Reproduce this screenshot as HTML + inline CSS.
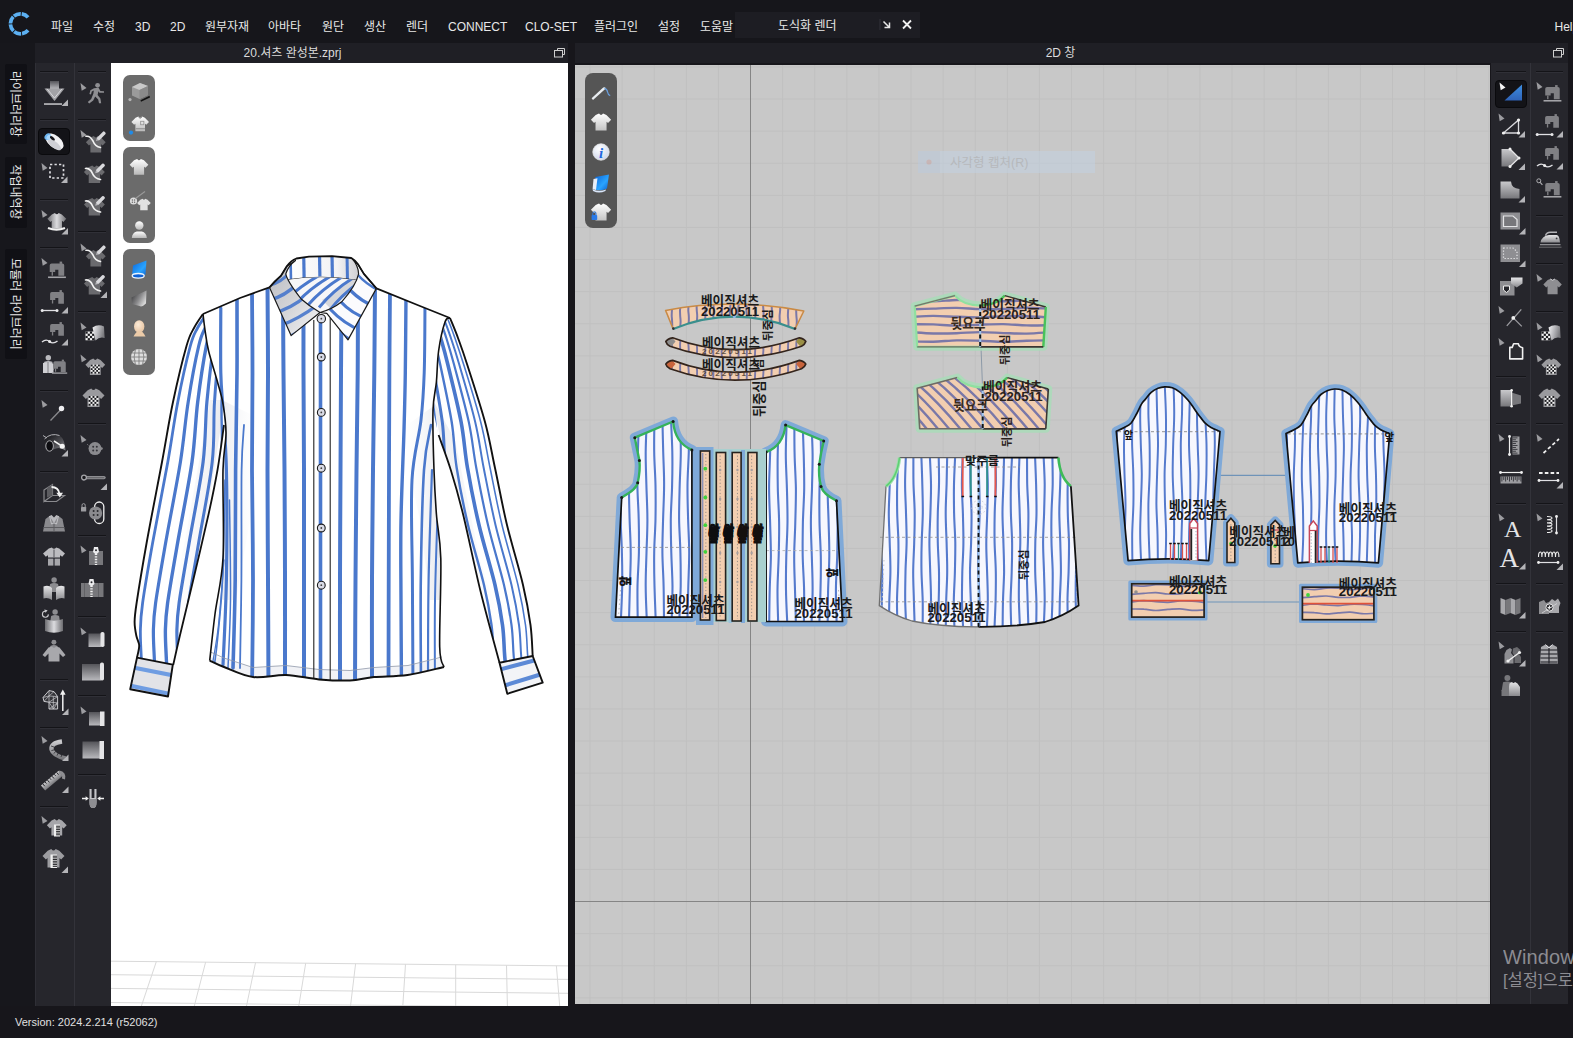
<!DOCTYPE html>
<html lang="ko">
<head>
<meta charset="utf-8">
<title>CLO - 20.셔츠 완성본.zprj</title>
<style>
*{box-sizing:border-box;margin:0;padding:0}
html,body{width:1573px;height:1038px;overflow:hidden;background:#17161b}
body{position:relative;font-family:"Liberation Sans","Noto Sans CJK KR",sans-serif;font-size:12px;color:#e6e6e6}
.abs{position:absolute}
#menubar{position:absolute;left:0;top:0;width:1573px;height:43px;background:#16161b}
#menubar .mi{position:absolute;top:18px;height:18px;line-height:18px;font-size:12px;color:#e8e8e8;white-space:nowrap}
#rtab{position:absolute;left:735px;top:12px;width:185px;height:26px;background:#1d1d23}
#lefttabs{position:absolute;left:0;top:43px;width:35px;height:963px;background:#17171c}
.vtab{position:absolute;left:5px;width:22px;background:#101015;border-radius:2px}
.vtab span{position:absolute;left:50%;top:50%;white-space:nowrap;font-size:12px;color:#e6e6e6;transform:translate(-50%,-50%) rotate(90deg)}
.title{position:absolute;top:43px;height:20px;background:#1f1f25;font-size:12px;color:#dcdcdc;text-align:center;line-height:21px}
.tb{position:absolute;background:#26262c}
.sep{position:absolute;height:1px;background:#141418;box-shadow:0 1px 0 #303037}
#v3d{position:absolute;left:111px;top:63px;width:457px;height:943px;background:#fff;overflow:hidden}
#v2d{position:absolute;left:575px;top:65px;width:915px;height:939px;background:#c8c8c8;overflow:hidden}
#status{position:absolute;left:0;top:1006px;width:1573px;height:32px;background:#17161b}
.pill{position:absolute;border-radius:7px}
.ic{position:absolute;width:32px;height:32px;overflow:visible}
.selbtn{position:absolute;background:#131317;border:1px solid #0a0a0d;border-radius:4px}
</style>
</head>
<body>

<div id="menubar">
  <svg class="abs" style="left:8px;top:10px" width="26" height="28" viewBox="0 0 26 28">
    <path d="M20.06 7.37 A10 10 0 1 0 20.06 20.23" fill="none" stroke="#5cb0f2" stroke-width="3.7" stroke-dasharray="7.35 0.95"/>
  </svg>
  <span class="mi" style="left:51px">파일</span>
  <span class="mi" style="left:93px">수정</span>
  <span class="mi" style="left:135px">3D</span>
  <span class="mi" style="left:170px">2D</span>
  <span class="mi" style="left:205px">원부자재</span>
  <span class="mi" style="left:268px">아바타</span>
  <span class="mi" style="left:322px">원단</span>
  <span class="mi" style="left:364px">생산</span>
  <span class="mi" style="left:406px">렌더</span>
  <span class="mi" style="left:448px">CONNECT</span>
  <span class="mi" style="left:525px">CLO-SET</span>
  <span class="mi" style="left:594px">플러그인</span>
  <span class="mi" style="left:658px">설정</span>
  <span class="mi" style="left:700px">도움말</span>
  <div id="rtab">
    <span class="mi" style="left:43px;top:5px">도식화 렌더</span>
    <svg class="abs" style="left:144px;top:6px" width="34" height="14" viewBox="0 0 34 14">
      <rect x="0.5" y="1" width="1" height="11" fill="#33333a"/>
      <path d="M4.5 3.5 L10.5 9.5 M10.5 4.5 V9.5 H5.5" stroke="#e8e8e8" stroke-width="1.5" fill="none"/>
      <path d="M24 2.5 L32 10.5 M32 2.5 L24 10.5" stroke="#f0f0f0" stroke-width="1.8" fill="none"/>
    </svg>
  </div>
  <span class="mi" style="left:1554.5px">Help</span>
</div>

<div id="lefttabs">
  <div class="vtab" style="top:21px;height:80px"><span>라이브러리창</span></div>
  <div class="vtab" style="top:113.5px;height:71px"><span>작업내역창</span></div>
  <div class="vtab" style="top:205.5px;height:110px"><span>모듈러 라이브러리</span></div>
</div>

<div class="title" style="left:35px;width:533px"><span style="position:relative;left:-9px">20.셔츠 완성본.zprj</span>
  <svg class="abs" style="left:519px;top:5px" width="11" height="10" viewBox="0 0 11 10"><path d="M3.5 2.5 V0.5 H10.5 V6.5 H8.5" fill="none" stroke="#cfcfcf"/><rect x="0.5" y="2.5" width="8" height="6.5" fill="none" stroke="#cfcfcf"/></svg>
</div>
<div class="title" style="left:573px;width:995px"><span style="position:relative;left:-10px">2D 창</span>
  <svg class="abs" style="left:980px;top:5px" width="11" height="10" viewBox="0 0 11 10"><path d="M3.5 2.5 V0.5 H10.5 V6.5 H8.5" fill="none" stroke="#cfcfcf"/><rect x="0.5" y="2.5" width="8" height="6.5" fill="none" stroke="#cfcfcf"/></svg>
</div>

<div class="tb" style="left:35px;top:63px;width:39px;height:943px;border-left:1px solid #2f2f36"></div>
<div class="tb" style="left:74px;top:63px;width:37px;height:943px;border-left:1px solid #33333a"></div>
<div class="tb" style="left:1491px;top:63px;width:39px;height:943px"></div>
<div class="tb" style="left:1530px;top:63px;width:38px;height:943px;border-left:1px solid #33333a"></div>
<div class="abs" style="left:568px;top:43px;width:7px;height:963px;background:#17161b"></div>
<div class="abs" style="left:575px;top:63px;width:916px;height:2px;background:#17161b"></div>
<div class="abs" style="left:575px;top:1004px;width:993px;height:2px;background:#17161b"></div>
<div id="status"><span class="abs" style="left:15px;top:10px;font-size:11px;color:#e0e0e0;white-space:nowrap">Version: 2024.2.214 (r52062)</span></div>

<div class="sep" style="left:40px;top:71px;width:28px"></div>
<div class="sep" style="left:40px;top:119px;width:28px"></div>
<div class="sep" style="left:40px;top:199px;width:28px"></div>
<div class="sep" style="left:40px;top:247px;width:28px"></div>
<div class="sep" style="left:40px;top:390px;width:28px"></div>
<div class="sep" style="left:40px;top:471px;width:28px"></div>
<div class="sep" style="left:40px;top:679px;width:28px"></div>
<div class="sep" style="left:40px;top:727px;width:28px"></div>
<div class="sep" style="left:40px;top:806px;width:28px"></div>
<div class="sep" style="left:78px;top:71px;width:28px"></div>
<div class="sep" style="left:78px;top:119px;width:28px"></div>
<div class="sep" style="left:78px;top:231px;width:28px"></div>
<div class="sep" style="left:78px;top:311px;width:28px"></div>
<div class="sep" style="left:78px;top:423px;width:28px"></div>
<div class="sep" style="left:78px;top:535px;width:28px"></div>
<div class="sep" style="left:78px;top:616px;width:28px"></div>
<div class="sep" style="left:78px;top:695px;width:28px"></div>
<div class="sep" style="left:78px;top:774px;width:28px"></div>
<div class="sep" style="left:1496px;top:71px;width:30px"></div>
<div class="sep" style="left:1496px;top:376px;width:30px"></div>
<div class="sep" style="left:1496px;top:423px;width:30px"></div>
<div class="sep" style="left:1496px;top:503px;width:30px"></div>
<div class="sep" style="left:1496px;top:583px;width:30px"></div>
<div class="sep" style="left:1496px;top:631px;width:30px"></div>
<div class="sep" style="left:1536px;top:71px;width:27px"></div>
<div class="sep" style="left:1536px;top:215px;width:27px"></div>
<div class="sep" style="left:1536px;top:263px;width:27px"></div>
<div class="sep" style="left:1536px;top:311px;width:27px"></div>
<div class="sep" style="left:1536px;top:423px;width:27px"></div>
<div class="sep" style="left:1536px;top:503px;width:27px"></div>
<div class="sep" style="left:1536px;top:583px;width:27px"></div>
<div class="sep" style="left:1536px;top:631px;width:27px"></div>
<svg width="0" height="0" style="position:absolute"><defs><linearGradient id="gA" x1="0" y1="0" x2="0" y2="1"><stop offset="0" stop-color="#c9c9cc"/><stop offset="1" stop-color="#77777b"/></linearGradient><linearGradient id="gB" x1="0" y1="0" x2="0" y2="1"><stop offset="0" stop-color="#55555a"/><stop offset="1" stop-color="#b9b9bd"/></linearGradient><linearGradient id="gC" x1="0" y1="0" x2="0" y2="1"><stop offset="0" stop-color="#e6e6e8"/><stop offset="1" stop-color="#8a8a8e"/></linearGradient><linearGradient id="gT" x1="0" y1="0" x2="1" y2="0.3"><stop offset="0" stop-color="#f4f4f6"/><stop offset="0.55" stop-color="#b4b4b8"/><stop offset="1" stop-color="#7a7a7e"/></linearGradient><linearGradient id="gH" x1="0" y1="0" x2="1" y2="0"><stop offset="0" stop-color="#6c6c70"/><stop offset="0.5" stop-color="#dcdcdf"/><stop offset="1" stop-color="#6c6c70"/></linearGradient></defs></svg>
<svg class="ic" style="left:38px;top:78px" viewBox="0 0 32 32"><rect x="12" y="3" width="9" height="8" fill="url(#gB)"/><polygon points="6.5,10.5 26.5,10.5 16.5,23" fill="#a2a2a6"/><path d="M9 10.8 L16.5 20 L24 10.8" stroke="#d8d8dc" stroke-width="1" fill="none"/><rect x="6" y="25.2" width="18" height="1.7" fill="#b6b6ba"/><polygon points="30,21.5 30,28 23.5,28" fill="#b4b4b8"/></svg>
<div class="selbtn" style="left:38px;top:128px;width:32px;height:27px"></div>
<svg class="ic" style="left:38px;top:126px" viewBox="0 0 32 32"><g transform="translate(16.5 15.5) rotate(38)"><ellipse cx="0" cy="0" rx="10.5" ry="6" fill="#f1f1f3"/><ellipse cx="2" cy="2.6" rx="8" ry="3.2" fill="#cfd0d6"/><ellipse cx="-8.2" cy="0.4" rx="3" ry="3.6" fill="#6db6f2"/><ellipse cx="-7" cy="0.2" rx="2" ry="2.8" fill="#a8d6fa"/><ellipse cx="-3.6" cy="-1.2" rx="3" ry="1.4" fill="#15151a"/></g></svg>
<svg class="ic" style="left:38px;top:158px" viewBox="0 0 32 32"><polygon points="3.5,5.1 4.7,12.7 9.5,10.1" fill="#9c9ca0"/><rect x="12" y="6.5" width="13.5" height="13.5" fill="none" stroke="#dedee2" stroke-width="1.7" stroke-dasharray="2.3 2.2"/><polygon points="29.5,18.5 29.5,25 23.0,25" fill="#b4b4b8"/></svg>
<svg class="ic" style="left:38px;top:207px" viewBox="0 0 32 32"><polygon points="3.5,3.1 4.7,10.7 9.5,8.1" fill="#9c9ca0"/><g transform="translate(8.5 5.5) scale(0.86)"><path d="M6.2 2.2 L9.8 0.6 Q12 3.6 14.2 0.6 L17.8 2.2 L23 7.4 L19.6 11 L18 9.6 L18 19 L6 19 L6 9.6 L4.4 11 L1 7.4 Z" fill="url(#gH)"/></g><path d="M10 21 Q18.5 24.5 27 21" stroke="#f2f2f2" stroke-width="2" fill="none"/><polygon points="30,21.0 30,27.5 23.5,27.5" fill="#b4b4b8"/></svg>
<svg class="ic" style="left:38px;top:254px" viewBox="0 0 32 32"><polygon points="3.5,4.1 4.7,11.7 9.5,9.1" fill="#9c9ca0"/><g transform="translate(9 8) scale(1.05)" fill="#808084"><path d="M2.6 3.2 Q2.6 1.4 4.4 1.4 H14.6 Q16.4 1.4 16.4 3.2 V13.2 H10.8 V7.4 H7.8 V9.6 H2.6 Z"/><rect x="12" y="-0.4" width="2.4" height="2.2" /><rect x="4.4" y="9.6" width="1.3" height="3.4"/><rect x="1" y="13.8" width="17" height="1.5" fill="#a4a4a8"/></g></svg>
<svg class="ic" style="left:38px;top:286px" viewBox="0 0 32 32"><g transform="translate(9.5 4.5) scale(1.0)" fill="#808084"><path d="M2.6 3.2 Q2.6 1.4 4.4 1.4 H14.6 Q16.4 1.4 16.4 3.2 V13.2 H10.8 V7.4 H7.8 V9.6 H2.6 Z"/><rect x="12" y="-0.4" width="2.4" height="2.2" /><rect x="4.4" y="9.6" width="1.3" height="3.4"/></g><path d="M4 24.5 H19" stroke="#e0e0e4" stroke-width="1.3"/><circle cx="4.2" cy="24.5" r="1.5" fill="#e8e8ea"/><circle cx="19" cy="24.5" r="1.5" fill="#e8e8ea"/><polygon points="30,21.0 30,27.5 23.5,27.5" fill="#b4b4b8"/></svg>
<svg class="ic" style="left:38px;top:318px" viewBox="0 0 32 32"><g transform="translate(9.5 4.5) scale(1.0)" fill="#808084"><path d="M2.6 3.2 Q2.6 1.4 4.4 1.4 H14.6 Q16.4 1.4 16.4 3.2 V13.2 H10.8 V7.4 H7.8 V9.6 H2.6 Z"/><rect x="12" y="-0.4" width="2.4" height="2.2" /><rect x="4.4" y="9.6" width="1.3" height="3.4"/></g><path d="M4 24 Q8 20.5 11.5 23.5 T19.5 23" stroke="#e0e0e4" stroke-width="1.4" fill="none"/><circle cx="11.6" cy="23.5" r="1.5" fill="#e8e8ea"/><polygon points="30,21.0 30,27.5 23.5,27.5" fill="#b4b4b8"/></svg>
<svg class="ic" style="left:38px;top:350px" viewBox="0 0 32 32"><g transform="translate(4 5) scale(1.05)" fill="#b9b9bd"><circle cx="6" cy="2.6" r="2.6"/><path d="M2.2 6.4 Q6 4.8 9.8 6.4 L11 14 H1 Z"/></g><path d="M5 13 L11 12 L15.5 14 V23 H5 Z" fill="#d0d0d4"/><path d="M10 12 V23" stroke="#6a6a6e" stroke-width="0.8"/><g transform="translate(13 10) scale(0.9)" fill="#808084"><path d="M2.6 3.2 Q2.6 1.4 4.4 1.4 H14.6 Q16.4 1.4 16.4 3.2 V13.2 H10.8 V7.4 H7.8 V9.6 H2.6 Z"/><rect x="12" y="-0.4" width="2.4" height="2.2" /><rect x="4.4" y="9.6" width="1.3" height="3.4"/><rect x="1" y="13.8" width="17" height="1.5" fill="#a4a4a8"/></g></svg>
<svg class="ic" style="left:38px;top:397px" viewBox="0 0 32 32"><polygon points="3.5,3.1 4.7,10.7 9.5,8.1" fill="#9c9ca0"/><path d="M12.5 23.5 L22.5 13" stroke="#8a8a8e" stroke-width="1.3"/><circle cx="23.5" cy="11.5" r="2.7" fill="#ededf0"/></svg>
<svg class="ic" style="left:38px;top:429px" viewBox="0 0 32 32"><defs><linearGradient id="gFp" x1="0" y1="0" x2="1" y2="1"><stop offset="0" stop-color="#0e0e12"/><stop offset="0.55" stop-color="#4a4a4f"/><stop offset="1" stop-color="#8e8e92"/></linearGradient></defs><path d="M6.5 10 Q13 3.5 21.5 6.5 Q27 10 27.5 21.5 Q21 17 15.5 20.5 Q10.5 24.5 7.6 20.4 Z" fill="url(#gFp)"/><path d="M6.5 10 Q13 3.5 21.5 6.5" stroke="#b0b0b4" stroke-width="1" fill="none"/><ellipse cx="11.6" cy="17" rx="3.8" ry="5.2" fill="#0c0c10" stroke="#a8a8ac" stroke-width="1"/><path d="M16 12 L23.6 16.8" stroke="#f4f4f4" stroke-width="1.5"/><circle cx="24.2" cy="17.2" r="2.5" fill="#f4f4f4"/><path d="M5 6.5 L9 9" stroke="#b0b0b4" stroke-width="1"/><polygon points="30,21.0 30,27.5 23.5,27.5" fill="#b4b4b8"/></svg>
<svg class="ic" style="left:38px;top:478px" viewBox="0 0 32 32"><path d="M6 12 L14.5 6.5 V17.5 L6 23.5 Z" fill="none" stroke="#8a8a8e" stroke-width="1.2"/><path d="M14.5 17.5 H26.5 L18.5 23.5 H6" fill="none" stroke="#8a8a8e" stroke-width="1.2"/><path d="M14.5 6.5 L9 10 V19.5 L14.5 17.5 Z" fill="#5c5c60"/><path d="M13.5 9 Q20.5 9 21.5 16" stroke="#f2f2f2" stroke-width="1.8" fill="none"/><polygon points="18.3,14.8 25,14.8 21.8,19.4" fill="#f2f2f2"/></svg>
<svg class="ic" style="left:38px;top:510px" viewBox="0 0 32 32"><path d="M11.5 6 L16 8.5 L20.5 6 L24.5 9 L27 21.5 H5 L7.5 9 Z" fill="#8a8a8e"/><path d="M11.5 6 L16 13 L20.5 6 L18.4 5 L16 7.4 L13.6 5 Z" fill="#b9b9bd"/><path d="M16 13 V21.5 M5.5 17.5 H26.5" stroke="#5c5c60" stroke-width="1"/><path d="M11.5 6 L13.5 14 L16 13 M20.5 6 L18.5 14 L16 13" stroke="#cfcfd3" stroke-width="0.8" fill="none"/></svg>
<svg class="ic" style="left:38px;top:542px" viewBox="0 0 32 32"><path d="M10.8 6.6 L13.8 5.4 Q16 8 18.2 5.4 L21.2 6.6 L27 11.4 L24.2 14.8 L22 13.2 V15.4 H10 V13.2 L7.8 14.8 L5 11.4 Z" fill="#bcbcc0"/><rect x="10" y="16.6" width="5.4" height="7" fill="#a6a6aa"/><rect x="16.6" y="16.6" width="5.4" height="7" fill="#a6a6aa"/><path d="M16 7.5 V15.4" stroke="#55555a" stroke-width="1"/></svg>
<svg class="ic" style="left:38px;top:574px" viewBox="0 0 32 32"><g transform="translate(9.8 3.2) scale(1.05)" fill="#8c8c90"><circle cx="6" cy="2.6" r="2.6"/><path d="M2.2 6.4 Q6 4.8 9.8 6.4 L11 14 H1 Z"/></g><path d="M5.5 12.5 Q10.5 10.5 14 14 V26 Q9.5 23 5.5 24.5 Z" fill="url(#gC)"/><path d="M26.5 12.5 Q21.5 10.5 18 14 V26 Q22.5 23 26.5 24.5 Z" fill="url(#gC)"/></svg>
<svg class="ic" style="left:38px;top:606px" viewBox="0 0 32 32"><g transform="translate(10.8 3.2) scale(1.05)" fill="#8c8c90"><circle cx="6" cy="2.6" r="2.6"/><path d="M2.2 6.4 Q6 4.8 9.8 6.4 L11 14 H1 Z"/></g><path d="M7 13 Q16 16.5 25 13 V25 Q16 28.5 7 25 Z" fill="url(#gH)"/><path d="M7.6 5.2 A3 3 0 1 0 10.4 8.4" stroke="#c9c9cd" stroke-width="1.1" fill="none"/><polygon points="6.2,3.6 9.6,4.2 7.6,6.8" fill="#c9c9cd"/></svg>
<svg class="ic" style="left:38px;top:638px" viewBox="0 0 32 32"><g transform="translate(10.2 1.8) scale(0.95)" fill="#8c8c90"><circle cx="6" cy="2.6" r="2.6"/><path d="M2.2 6.4 Q6 4.8 9.8 6.4 L11 14 H1 Z"/></g><path d="M10.5 9.5 L14 8.6 Q16 11 18 8.6 L21.5 9.5 L27.5 17 L25 19 L21.5 15.4 V23.5 H10.5 V15.4 L7 19 L4.5 17 Z" fill="#a8a8ac"/></svg>
<svg class="ic" style="left:38px;top:687px" viewBox="0 0 32 32"><path d="M5 10.5 L11 3.6 L16 4.6 L19.6 9.6 V22 H11 V15.2 L6 14.4 Z" fill="#35353a" stroke="#c9c9cd" stroke-width="1" stroke-linejoin="round"/><path d="M5 10.5 L11 9 L11 3.6 M11 9 L16 4.6 M11 9 L19.6 9.6 M11 9 L11 15.2 M6 14.4 L11 9 M11 15.2 L19.6 9.6 M11 15.2 L19.6 15.8 L11 22 M11 15.2 L15.4 22 M19.6 15.8 L15.4 22 M15.3 9.3 L15.3 22" stroke="#c9c9cd" stroke-width="0.7" fill="none"/><path d="M24.8 6 V24" stroke="#f0f0f0" stroke-width="1.5"/><polygon points="24.8,2.5 22,7.8 27.6,7.8" fill="#f0f0f0"/><polygon points="30.5,21.5 30.5,28 24.0,28" fill="#b4b4b8"/></svg>
<svg class="ic" style="left:38px;top:733px" viewBox="0 0 32 32"><polygon points="3.5,3.1 4.7,10.7 9.5,8.1" fill="#9c9ca0"/><path d="M24 8.5 Q12.5 10 13.5 16.5 Q15 22.5 27.5 25.5" stroke="url(#gA)" stroke-width="4.4" fill="none"/><path d="M13 13 l3 1 M13.4 17.6 l3 -0.8 M15.6 20.6 l2.2 -2 M19 22.6 l1.4 -2.6 M23 24 l1 -2.8" stroke="#2a2a2e" stroke-width="0.8"/><polygon points="30.5,21.5 30.5,28 24.0,28" fill="#b4b4b8"/></svg>
<svg class="ic" style="left:38px;top:765px" viewBox="0 0 32 32"><g transform="translate(5 23) rotate(-40)"><rect x="0" y="-3.2" width="23" height="6.6" fill="url(#gA)"/><path d="M2.5 -3.2 v3 M5.5 -3.2 v2 M8.5 -3.2 v3 M11.5 -3.2 v2 M14.5 -3.2 v3 M17.5 -3.2 v2 M20.5 -3.2 v3" stroke="#1e1e22" stroke-width="0.9"/></g><path d="M21 7 Q27 8 25.5 14" stroke="#8e8e92" stroke-width="3.2" fill="none"/><polygon points="30.5,21.5 30.5,28 24.0,28" fill="#b4b4b8"/></svg>
<svg class="ic" style="left:38px;top:813px" viewBox="0 0 32 32"><polygon points="3.5,3.1 4.7,10.7 9.5,8.1" fill="#9c9ca0"/><g transform="translate(8 5.5) scale(0.9)"><path d="M6.2 2.2 L9.8 0.6 Q12 3.6 14.2 0.6 L17.8 2.2 L23 7.4 L19.6 11 L18 9.6 L18 19 L6 19 L6 9.6 L4.4 11 L1 7.4 Z" fill="#a6a6aa"/></g><rect x="16" y="11.5" width="6" height="12" fill="#f0f0f0"/><rect x="18.10" y="12.71" width="3.90" height="1" fill="#1c1c20"/><rect x="18.10" y="14.43" width="3.90" height="1" fill="#1c1c20"/><rect x="18.10" y="16.14" width="3.90" height="1" fill="#1c1c20"/><rect x="18.10" y="17.86" width="3.90" height="1" fill="#1c1c20"/><rect x="18.10" y="19.57" width="3.90" height="1" fill="#1c1c20"/><rect x="18.10" y="21.29" width="3.90" height="1" fill="#1c1c20"/></svg>
<svg class="ic" style="left:38px;top:845px" viewBox="0 0 32 32"><g transform="translate(3.5 3.5) scale(1.0)"><path d="M6.2 2.2 L9.8 0.6 Q12 3.6 14.2 0.6 L17.8 2.2 L23 7.4 L19.6 11 L18 9.6 L18 19 L6 19 L6 9.6 L4.4 11 L1 7.4 Z" fill="#9c9ca0"/></g><rect x="12.5" y="9.5" width="6.5" height="13.5" fill="#f0f0f0"/><rect x="14.78" y="10.69" width="4.23" height="1" fill="#1c1c20"/><rect x="14.78" y="12.38" width="4.23" height="1" fill="#1c1c20"/><rect x="14.78" y="14.06" width="4.23" height="1" fill="#1c1c20"/><rect x="14.78" y="15.75" width="4.23" height="1" fill="#1c1c20"/><rect x="14.78" y="17.44" width="4.23" height="1" fill="#1c1c20"/><rect x="14.78" y="19.12" width="4.23" height="1" fill="#1c1c20"/><rect x="14.78" y="20.81" width="4.23" height="1" fill="#1c1c20"/><polygon points="30,21.5 30,28 23.5,28" fill="#b4b4b8"/></svg>
<svg class="ic" style="left:77px;top:78px" viewBox="0 0 32 32"><polygon points="3.5,5.1 4.7,12.7 9.5,10.1" fill="#9c9ca0"/><g fill="#8e8e92"><circle cx="20.6" cy="7.3" r="2.4"/><path d="M17 10.2 L21.6 9.8 L23.4 13 L27 13.2 V14.8 L22.4 14.8 L21.4 13.2 L20.6 17 L23.4 20.4 L24.2 25.2 H22 L21.2 21.4 L18.2 18.6 L16.2 22.4 L12.2 25.4 L10.8 24 L14.2 21 L16.4 15.6 L16.8 12.4 L14.8 13.6 L14 16.4 L12.4 16 L13.4 12.2 Z"/></g></svg>
<svg class="ic" style="left:77px;top:125px" viewBox="0 0 32 32"><polygon points="3.5,5.1 4.7,12.7 9.5,10.1" fill="#9c9ca0"/><g transform="translate(8 10.5) scale(0.9)"><path d="M6.2 2.2 L9.8 0.6 Q12 3.6 14.2 0.6 L17.8 2.2 L23 7.4 L19.6 11 L18 9.6 L18 19 L6 19 L6 9.6 L4.4 11 L1 7.4 Z" fill="#6a6a6e"/></g><path d="M9 11.3 Q13 10.5 16 16 Q18 21.5 23.5 22.5" stroke="#f2f2f2" stroke-width="1.6" fill="none" stroke-linecap="round"/><g transform="translate(19 16.1) rotate(-45)"><rect x="2.2" y="-1.7" width="10.5" height="3.4" rx="1.2" fill="#d8d8dc"/><polygon points="0,0 2.6,-1.5 2.6,1.5" fill="#b8b8bc"/></g></svg>
<svg class="ic" style="left:77px;top:157px" viewBox="0 0 32 32"><g transform="translate(6 8) scale(0.95)"><path d="M6.2 2.2 L9.8 0.6 Q12 3.6 14.2 0.6 L17.8 2.2 L23 7.4 L19.6 11 L18 9.6 L18 19 L6 19 L6 9.6 L4.4 11 L1 7.4 Z" fill="#6a6a6e"/></g><path d="M8.5 11.5 Q13 11 15.5 16.5 Q17.5 21.5 23.5 22.5" stroke="#f2f2f2" stroke-width="1.7" fill="none" stroke-linecap="round"/><g transform="translate(18.2 16.2) rotate(-45)"><rect x="2.2" y="-1.7" width="10.5" height="3.4" rx="1.2" fill="#d8d8dc"/><polygon points="0,0 2.6,-1.5 2.6,1.5" fill="#b8b8bc"/></g></svg>
<svg class="ic" style="left:77px;top:189px" viewBox="0 0 32 32"><g transform="translate(6 8.5) scale(0.95)"><path d="M6.2 2.2 L9.8 0.6 Q12 3.6 14.2 0.6 L17.8 2.2 L23 7.4 L19.6 11 L18 9.6 L18 19 L6 19 L6 9.6 L4.4 11 L1 7.4 Z" fill="#6a6a6e"/></g><path d="M8.5 12.0 Q13 11.5 15.5 17.0 Q17.5 22.0 23.5 23.0" stroke="#f2f2f2" stroke-width="1.7" fill="none" stroke-linecap="round"/><g transform="translate(18.2 16.7) rotate(-45)"><rect x="2.2" y="-1.7" width="10.5" height="3.4" rx="1.2" fill="#d8d8dc"/><polygon points="0,0 2.6,-1.5 2.6,1.5" fill="#b8b8bc"/></g></svg>
<svg class="ic" style="left:77px;top:238px" viewBox="0 0 32 32"><polygon points="3.5,5.6 4.7,13.2 9.5,10.6" fill="#9c9ca0"/><g transform="translate(8 11.5) scale(0.9)"><path d="M6.2 2.2 L9.8 0.6 Q12 3.6 14.2 0.6 L17.8 2.2 L23 7.4 L19.6 11 L18 9.6 L18 19 L6 19 L6 9.6 L4.4 11 L1 7.4 Z" fill="#6a6a6e"/></g><path d="M9 12.3 Q13 11.5 16 17 Q18 22.5 23.5 23.5" stroke="#f2f2f2" stroke-width="1.6" fill="none" stroke-linecap="round"/><g transform="translate(19 17.1) rotate(-45)"><rect x="2.2" y="-1.7" width="10.5" height="3.4" rx="1.2" fill="#d8d8dc"/><polygon points="0,0 2.6,-1.5 2.6,1.5" fill="#b8b8bc"/></g></svg>
<svg class="ic" style="left:77px;top:270px" viewBox="0 0 32 32"><g transform="translate(6 6.5) scale(0.95)"><path d="M6.2 2.2 L9.8 0.6 Q12 3.6 14.2 0.6 L17.8 2.2 L23 7.4 L19.6 11 L18 9.6 L18 19 L6 19 L6 9.6 L4.4 11 L1 7.4 Z" fill="#6a6a6e"/></g><path d="M8.5 10.0 Q13 9.5 15.5 15.0 Q17.5 20.0 23.5 21.0" stroke="#f2f2f2" stroke-width="1.7" fill="none" stroke-linecap="round"/><g transform="translate(18.2 14.7) rotate(-45)"><rect x="2.2" y="-1.7" width="10.5" height="3.4" rx="1.2" fill="#d8d8dc"/><polygon points="0,0 2.6,-1.5 2.6,1.5" fill="#b8b8bc"/></g><polygon points="30,21.5 30,28 23.5,28" fill="#b4b4b8"/></svg>
<svg class="ic" style="left:77px;top:318px" viewBox="0 0 32 32"><polygon points="3.5,4.6 4.7,12.2 9.5,9.6" fill="#9c9ca0"/><rect x="8.5" y="13.5" width="8.8" height="8.8" fill="#f2f2f2"/><rect x="8.5" y="13.5" width="2.2" height="2.2" fill="#1c1c20"/><rect x="8.5" y="17.9" width="2.2" height="2.2" fill="#1c1c20"/><rect x="10.7" y="15.7" width="2.2" height="2.2" fill="#1c1c20"/><rect x="10.7" y="20.1" width="2.2" height="2.2" fill="#1c1c20"/><rect x="12.9" y="13.5" width="2.2" height="2.2" fill="#1c1c20"/><rect x="12.9" y="17.9" width="2.2" height="2.2" fill="#1c1c20"/><rect x="15.1" y="15.7" width="2.2" height="2.2" fill="#1c1c20"/><rect x="15.1" y="20.1" width="2.2" height="2.2" fill="#1c1c20"/><path d="M15.5 9.5 Q21 5.5 27 8.5 L27.6 20 Q22.5 18.5 18.5 22.5 Z" fill="url(#gT)"/></svg>
<svg class="ic" style="left:77px;top:350px" viewBox="0 0 32 32"><polygon points="3.5,4.6 4.7,12.2 9.5,9.6" fill="#9c9ca0"/><g transform="translate(7.5 8) scale(0.9)"><path d="M6.2 2.2 L9.8 0.6 Q12 3.6 14.2 0.6 L17.8 2.2 L23 7.4 L19.6 11 L18 9.6 L18 19 L6 19 L6 9.6 L4.4 11 L1 7.4 Z" fill="#9a9a9e"/></g><rect x="13.8" y="14.6" width="9.0" height="9.0" fill="#f2f2f2"/><rect x="13.8" y="14.6" width="1.8" height="1.8" fill="#1c1c20"/><rect x="13.8" y="18.2" width="1.8" height="1.8" fill="#1c1c20"/><rect x="13.8" y="21.8" width="1.8" height="1.8" fill="#1c1c20"/><rect x="15.6" y="16.4" width="1.8" height="1.8" fill="#1c1c20"/><rect x="15.6" y="20.0" width="1.8" height="1.8" fill="#1c1c20"/><rect x="17.4" y="14.6" width="1.8" height="1.8" fill="#1c1c20"/><rect x="17.4" y="18.2" width="1.8" height="1.8" fill="#1c1c20"/><rect x="17.4" y="21.8" width="1.8" height="1.8" fill="#1c1c20"/><rect x="19.2" y="16.4" width="1.8" height="1.8" fill="#1c1c20"/><rect x="19.2" y="20.0" width="1.8" height="1.8" fill="#1c1c20"/><rect x="21.0" y="14.6" width="1.8" height="1.8" fill="#1c1c20"/><rect x="21.0" y="18.2" width="1.8" height="1.8" fill="#1c1c20"/><rect x="21.0" y="21.8" width="1.8" height="1.8" fill="#1c1c20"/></svg>
<svg class="ic" style="left:77px;top:382px" viewBox="0 0 32 32"><g transform="translate(4.5 6) scale(1.0)"><path d="M6.2 2.2 L9.8 0.6 Q12 3.6 14.2 0.6 L17.8 2.2 L23 7.4 L19.6 11 L18 9.6 L18 19 L6 19 L6 9.6 L4.4 11 L1 7.4 Z" fill="#9a9a9e"/></g><rect x="11.6" y="14" width="9.75" height="9.75" fill="#f2f2f2"/><rect x="11.6" y="14.0" width="1.95" height="1.95" fill="#1c1c20"/><rect x="11.6" y="17.9" width="1.95" height="1.95" fill="#1c1c20"/><rect x="11.6" y="21.8" width="1.95" height="1.95" fill="#1c1c20"/><rect x="13.5" y="15.9" width="1.95" height="1.95" fill="#1c1c20"/><rect x="13.5" y="19.9" width="1.95" height="1.95" fill="#1c1c20"/><rect x="15.5" y="14.0" width="1.95" height="1.95" fill="#1c1c20"/><rect x="15.5" y="17.9" width="1.95" height="1.95" fill="#1c1c20"/><rect x="15.5" y="21.8" width="1.95" height="1.95" fill="#1c1c20"/><rect x="17.4" y="15.9" width="1.95" height="1.95" fill="#1c1c20"/><rect x="17.4" y="19.9" width="1.95" height="1.95" fill="#1c1c20"/><rect x="19.4" y="14.0" width="1.95" height="1.95" fill="#1c1c20"/><rect x="19.4" y="17.9" width="1.95" height="1.95" fill="#1c1c20"/><rect x="19.4" y="21.8" width="1.95" height="1.95" fill="#1c1c20"/></svg>
<svg class="ic" style="left:77px;top:431px" viewBox="0 0 32 32"><polygon points="3.5,4.1 4.7,11.7 9.5,9.1" fill="#9c9ca0"/><path d="M10 13 L12.5 15.5" stroke="#77777b" stroke-width="1" stroke-dasharray="1.2 1.2"/><circle cx="18" cy="17.6" r="6.5" fill="#8a8a8e"/><circle cx="24.4" cy="17.6" r="1.4" fill="#8a8a8e"/><g fill="#34343a"><circle cx="16.2" cy="15.8" r="1"/><circle cx="19.8" cy="15.8" r="1"/><circle cx="16.2" cy="19.4" r="1"/><circle cx="19.8" cy="19.4" r="1"/></g></svg>
<svg class="ic" style="left:77px;top:463px" viewBox="0 0 32 32"><path d="M8.5 14.6 H27" stroke="#8e8e92" stroke-width="3.4" stroke-linecap="round"/><path d="M9 14.6 H26.6" stroke="#6a6a6e" stroke-width="1.4" stroke-linecap="round"/><circle cx="7" cy="14.6" r="2.4" fill="#1a1a1e" stroke="#a4a4a8" stroke-width="1.3"/><polygon points="30,20.5 30,27 23.5,27" fill="#b4b4b8"/></svg>
<svg class="ic" style="left:77px;top:495px" viewBox="0 0 32 32"><rect x="4" y="12" width="5.2" height="4.6" rx="0.6" fill="#9c9ca0"/><path d="M5 12 V10.2 a1.6 1.6 0 0 1 3.2 0 V12" stroke="#9c9ca0" stroke-width="1" fill="none"/><rect x="17.6" y="7" width="9.2" height="21.5" rx="4.6" fill="none" stroke="#f0f0f0" stroke-width="1.3"/><circle cx="18.6" cy="18" r="6.6" fill="#8a8a8e"/><g fill="#2a2a2e"><circle cx="16.6" cy="16" r="1"/><circle cx="20.6" cy="16" r="1"/><circle cx="16.6" cy="20" r="1"/><circle cx="20.6" cy="20" r="1"/></g></svg>
<svg class="ic" style="left:77px;top:542px" viewBox="0 0 32 32"><polygon points="3.5,3.6 4.7,11.2 9.5,8.6" fill="#9c9ca0"/><rect x="12" y="9" width="14" height="14" fill="#77777b"/><path d="M19 9 V23" stroke="#f0f0f0" stroke-width="2.4" stroke-dasharray="1.4 1.2"/><path d="M17 5 h4 l1 5 l-3 2.6 l-3 -2.6 Z" fill="#ececee"/><circle cx="19" cy="8.2" r="1" fill="#2a2a2e"/></svg>
<svg class="ic" style="left:77px;top:574px" viewBox="0 0 32 32"><rect x="7.5" y="9" width="14" height="14" fill="#77777b"/><path d="M14.5 9 V23" stroke="#f0f0f0" stroke-width="2.4" stroke-dasharray="1.4 1.2"/><path d="M12.5 5 h4 l1 5 l-3 2.6 l-3 -2.6 Z" fill="#ececee"/><circle cx="14.5" cy="8.2" r="1" fill="#2a2a2e"/><rect x="21.5" y="9" width="5" height="14" fill="#77777b"/><rect x="4" y="9" width="3.5" height="14" fill="#77777b"/></svg>
<svg class="ic" style="left:77px;top:623px" viewBox="0 0 32 32"><polygon points="3.5,4.6 4.7,12.2 9.5,9.6" fill="#9c9ca0"/><rect x="11.5" y="10.5" width="13" height="13.5" fill="url(#gB)"/><rect x="23.5" y="9" width="4" height="15" rx="1.8" fill="#e4e4e6"/></svg>
<svg class="ic" style="left:77px;top:655px" viewBox="0 0 32 32"><rect x="5" y="9.0" width="19" height="16.5" fill="url(#gB)"/><rect x="23" y="7.5" width="4" height="18" rx="1.8" fill="#e4e4e6"/></svg>
<svg class="ic" style="left:77px;top:702px" viewBox="0 0 32 32"><polygon points="3.5,4.6 4.7,12.2 9.5,9.6" fill="#9c9ca0"/><rect x="12" y="10" width="11.5" height="13.5" fill="url(#gB)"/><rect x="23.0" y="9.5" width="4.5" height="14.5" fill="#e4e4e6"/></svg>
<svg class="ic" style="left:77px;top:734px" viewBox="0 0 32 32"><rect x="5.5" y="7.5" width="17.5" height="17" fill="url(#gB)"/><rect x="22.5" y="7.0" width="4.5" height="18" fill="#e4e4e6"/></svg>
<svg class="ic" style="left:77px;top:782px" viewBox="0 0 32 32"><path d="M12.5 7 V20.5 Q12.5 26 16 26 Q19.5 26 19.5 20.5 V7 H17.4 V16 H14.6 V7 Z" fill="#c4c4c8"/><path d="M12.5 17 H19.5 V21 Q19.5 26 16 26 Q12.5 26 12.5 21 Z" fill="#8e8e92"/><path d="M5 16.5 H9.5 M27 16.5 H22.5" stroke="#f0f0f0" stroke-width="1.3"/><polygon points="11.8,16.5 8.6,14.3 8.6,18.7" fill="#f0f0f0"/><polygon points="20.2,16.5 23.4,14.3 23.4,18.7" fill="#f0f0f0"/></svg>
<div class="selbtn" style="left:1495px;top:80px;width:32px;height:28px"></div>
<svg class="ic" style="left:1495px;top:78px" viewBox="0 0 32 32"><polygon points="4.5,4.6 5.7,12.2 10.5,9.6" fill="#f4f4f4"/><defs><linearGradient id="gBl" x1="0" y1="0" x2="0" y2="1"><stop offset="0" stop-color="#3d8ee0"/><stop offset="1" stop-color="#2f63b8"/></linearGradient></defs><polygon points="9.5,22.5 27,22.5 27,6.5" fill="url(#gBl)"/></svg>
<svg class="ic" style="left:1495px;top:110px" viewBox="0 0 32 32"><polygon points="3.5,3.6 4.7,11.2 9.5,8.6" fill="#9c9ca0"/><path d="M8.5 23 L23.5 10 V23 Z" fill="none" stroke="#d8d8dc" stroke-width="1.3"/><circle cx="8.5" cy="23" r="1.6" fill="#f0f0f0"/><circle cx="23.5" cy="10" r="1.6" fill="#f0f0f0"/><circle cx="23.5" cy="23" r="1.6" fill="#f0f0f0"/><polygon points="30,21.0 30,27.5 23.5,27.5" fill="#b4b4b8"/></svg>
<svg class="ic" style="left:1495px;top:142px" viewBox="0 0 32 32"><path d="M6.5 7 H15 L24 16 L15 24.5 H6.5 Z" fill="url(#gA)"/><path d="M15 7 L24 16 L15 24.5" fill="none" stroke="#e4e4e6" stroke-width="1.3"/><circle cx="15" cy="7" r="1.5" fill="#f0f0f0"/><circle cx="24" cy="16" r="1.5" fill="#f0f0f0"/><circle cx="15" cy="24.5" r="1.5" fill="#f0f0f0"/><polygon points="30,21.5 30,28 23.5,28" fill="#b4b4b8"/></svg>
<svg class="ic" style="left:1495px;top:174px" viewBox="0 0 32 32"><path d="M5.5 7.5 H16 Q16.5 14.5 24.5 15 V24.5 H5.5 Z" fill="url(#gA)"/><polygon points="30,22.0 30,28.5 23.5,28.5" fill="#b4b4b8"/></svg>
<svg class="ic" style="left:1495px;top:206px" viewBox="0 0 32 32"><rect x="5.5" y="6.5" width="19.5" height="17" fill="#8e8e92"/><path d="M8.5 10 H18 L22 13.5 V20.5 H8.5 Z" fill="#77777b" stroke="#e4e4e6" stroke-width="1.2"/><polygon points="30.5,22.0 30.5,28.5 24.0,28.5" fill="#b4b4b8"/></svg>
<svg class="ic" style="left:1495px;top:238px" viewBox="0 0 32 32"><rect x="5.5" y="6.5" width="19.5" height="17.5" fill="#8e8e92"/><path d="M8.5 10 H18 L22 13.5 V20.5 H8.5 Z" fill="none" stroke="#e4e4e6" stroke-width="1.2" stroke-dasharray="1.3 1.7"/><polygon points="30.5,22.5 30.5,29 24.0,29" fill="#b4b4b8"/></svg>
<svg class="ic" style="left:1495px;top:270px" viewBox="0 0 32 32"><rect x="5" y="11" width="14.5" height="14.5" fill="#8e8e92"/><path d="M8.5 16 H14.5 V20 L11.5 22.5 L8.5 20 Z" fill="#26262c" stroke="#f0f0f0" stroke-width="1"/><path d="M16 7.5 H27.5 V13.5 L21.7 17.5 L16 13.5 Z" fill="url(#gC)"/></svg>
<svg class="ic" style="left:1495px;top:302px" viewBox="0 0 32 32"><polygon points="3.5,4.1 4.7,11.7 9.5,9.1" fill="#9c9ca0"/><g transform="translate(2.8 -0.6)"><path d="M23.5 8 L9 24.5" stroke="#9c9ca0" stroke-width="1.3"/><path d="M15.5 16.5 L24 25" stroke="#9c9ca0" stroke-width="1.3"/><circle cx="15.5" cy="16.5" r="1.9" fill="#f0f0f0"/></g></svg>
<svg class="ic" style="left:1495px;top:334px" viewBox="0 0 32 32"><polygon points="3.5,4.1 4.7,11.7 9.5,9.1" fill="#9c9ca0"/><g transform="translate(3.2 0.4)"><path d="M11.6 13 H14 L15.4 9.4 H20.2 Q20.4 12.4 24.4 13.4 V24.5 H11.6 Z" fill="#2c2c31" stroke="#f0f0f0" stroke-width="1.6" stroke-linejoin="round"/></g></svg>
<svg class="ic" style="left:1495px;top:382px" viewBox="0 0 32 32"><path d="M5.5 8 H16.5 V24.5 H5.5 Z" fill="url(#gA)"/><path d="M16.5 10.5 L26 13.5 V21.5 L16.5 23.5 Z" fill="#77777b"/><path d="M16.6 8 V24.5" stroke="#f0f0f0" stroke-width="1.2"/><circle cx="16.6" cy="8.2" r="1.3" fill="#f0f0f0"/><circle cx="16.6" cy="24.3" r="1.3" fill="#f0f0f0"/></svg>
<svg class="ic" style="left:1495px;top:430px" viewBox="0 0 32 32"><polygon points="3.5,4.1 4.7,11.7 9.5,9.1" fill="#9c9ca0"/><rect x="17.5" y="6.5" width="7" height="18" fill="#9c9ca0"/><rect x="17.5" y="7.5" width="5" height="0.8" fill="#26262c"/><rect x="17.5" y="9.4" width="3.4" height="0.8" fill="#26262c"/><rect x="17.5" y="11.3" width="5" height="0.8" fill="#26262c"/><rect x="17.5" y="13.2" width="3.4" height="0.8" fill="#26262c"/><rect x="17.5" y="15.1" width="5" height="0.8" fill="#26262c"/><rect x="17.5" y="17.0" width="3.4" height="0.8" fill="#26262c"/><rect x="17.5" y="18.9" width="5" height="0.8" fill="#26262c"/><rect x="17.5" y="20.8" width="3.4" height="0.8" fill="#26262c"/><rect x="17.5" y="22.7" width="5" height="0.8" fill="#26262c"/><path d="M14.5 6.5 V24.5" stroke="#f0f0f0" stroke-width="1.2"/><circle cx="14.5" cy="6.5" r="1.4" fill="#f0f0f0"/><circle cx="14.5" cy="24.5" r="1.4" fill="#f0f0f0"/></svg>
<svg class="ic" style="left:1495px;top:462px" viewBox="0 0 32 32"><rect x="5.5" y="14.5" width="21" height="7" fill="#9c9ca0"/><rect x="6.5" y="14.5" width="0.8" height="5" fill="#26262c"/><rect x="8.4" y="14.5" width="0.8" height="3.4" fill="#26262c"/><rect x="10.3" y="14.5" width="0.8" height="5" fill="#26262c"/><rect x="12.2" y="14.5" width="0.8" height="3.4" fill="#26262c"/><rect x="14.1" y="14.5" width="0.8" height="5" fill="#26262c"/><rect x="16.0" y="14.5" width="0.8" height="3.4" fill="#26262c"/><rect x="17.9" y="14.5" width="0.8" height="5" fill="#26262c"/><rect x="19.8" y="14.5" width="0.8" height="3.4" fill="#26262c"/><rect x="21.7" y="14.5" width="0.8" height="5" fill="#26262c"/><rect x="23.6" y="14.5" width="0.8" height="3.4" fill="#26262c"/><rect x="25.5" y="14.5" width="0.8" height="5" fill="#26262c"/><path d="M5.5 10.5 H26.5" stroke="#f0f0f0" stroke-width="1.2"/><circle cx="5.5" cy="10.5" r="1.4" fill="#f0f0f0"/><circle cx="26.5" cy="10.5" r="1.4" fill="#f0f0f0"/></svg>
<svg class="ic" style="left:1495px;top:510px" viewBox="0 0 32 32"><polygon points="3.5,3.6 4.7,11.2 9.5,8.6" fill="#9c9ca0"/><text x="9" y="26.5" font-family="'Liberation Serif',serif" font-size="24" fill="#e4e4e6">A</text></svg>
<svg class="ic" style="left:1495px;top:542px" viewBox="0 0 32 32"><text x="4.5" y="25" font-family="'Liberation Serif',serif" font-size="27" fill="#e4e4e6">A</text><polygon points="30.5,21.0 30.5,27.5 24.0,27.5" fill="#b4b4b8"/></svg>
<svg class="ic" style="left:1495px;top:590px" viewBox="0 0 32 32"><path d="M5.5 8 L10.5 10 V25 L5.5 23 Z" fill="#a8a8ac"/><path d="M10.5 10 L15.5 8 V23 L10.5 25 Z" fill="#77777b"/><path d="M15.5 8 L20.5 10 V25 L15.5 23 Z" fill="#a8a8ac"/><path d="M20.5 10 L25.5 8 V23 L20.5 25 Z" fill="#77777b"/><polygon points="30.5,22.0 30.5,28.5 24.0,28.5" fill="#b4b4b8"/></svg>
<svg class="ic" style="left:1495px;top:638px" viewBox="0 0 32 32"><polygon points="3.5,3.6 4.7,11.2 9.5,8.6" fill="#9c9ca0"/><path d="M11.5 12 L15 10 L17 11.5 L16 15 L18.5 18 V25.5 H9.5 V16 Z" fill="#8e8e92"/><path d="M18 10.5 L22 9 L25.5 12 L24 16 L26 19 V25 H19.5 V18 L17.5 15 Z" fill="#6a6a6e"/><path d="M13 23 L24.5 14.5" stroke="#f0f0f0" stroke-width="1.4"/><circle cx="13" cy="23" r="1.6" fill="#f0f0f0"/><circle cx="24.5" cy="14.5" r="1.6" fill="#f0f0f0"/><polygon points="30.5,22.0 30.5,28.5 24.0,28.5" fill="#b4b4b8"/></svg>
<svg class="ic" style="left:1495px;top:670px" viewBox="0 0 32 32"><g transform="translate(5.5 5) scale(1.15)" fill="#77777b"><circle cx="6" cy="2.6" r="2.6"/><path d="M2.2 6.4 Q6 4.8 9.8 6.4 L11 14 H1 Z"/></g><rect x="6.5" y="20" width="9" height="6" fill="#77777b"/><path d="M14.5 13.5 L17 12 Q18.5 14 20 12 L22.5 13.5 L25 17 V26 H14 V17 Z" fill="url(#gC)"/></svg>
<svg class="ic" style="left:1533px;top:78px" viewBox="0 0 32 32"><polygon points="3.5,4.1 4.7,11.7 9.5,9.1" fill="#9c9ca0"/><g transform="translate(9.5 7.5) scale(1.05)" fill="#808084"><path d="M2.6 3.2 Q2.6 1.4 4.4 1.4 H14.6 Q16.4 1.4 16.4 3.2 V13.2 H10.8 V7.4 H7.8 V9.6 H2.6 Z"/><rect x="12" y="-0.4" width="2.4" height="2.2" /><rect x="4.4" y="9.6" width="1.3" height="3.4"/><rect x="1" y="13.8" width="17" height="1.5" fill="#a4a4a8"/></g></svg>
<svg class="ic" style="left:1533px;top:110px" viewBox="0 0 32 32"><g transform="translate(9.5 4.5) scale(1.0)" fill="#808084"><path d="M2.6 3.2 Q2.6 1.4 4.4 1.4 H14.6 Q16.4 1.4 16.4 3.2 V13.2 H10.8 V7.4 H7.8 V9.6 H2.6 Z"/><rect x="12" y="-0.4" width="2.4" height="2.2" /><rect x="4.4" y="9.6" width="1.3" height="3.4"/></g><path d="M4 24.5 H19" stroke="#e0e0e4" stroke-width="1.3"/><circle cx="4.2" cy="24.5" r="1.5" fill="#e8e8ea"/><circle cx="19" cy="24.5" r="1.5" fill="#e8e8ea"/><polygon points="30,21.0 30,27.5 23.5,27.5" fill="#b4b4b8"/></svg>
<svg class="ic" style="left:1533px;top:142px" viewBox="0 0 32 32"><g transform="translate(9.5 4.5) scale(1.0)" fill="#808084"><path d="M2.6 3.2 Q2.6 1.4 4.4 1.4 H14.6 Q16.4 1.4 16.4 3.2 V13.2 H10.8 V7.4 H7.8 V9.6 H2.6 Z"/><rect x="12" y="-0.4" width="2.4" height="2.2" /><rect x="4.4" y="9.6" width="1.3" height="3.4"/></g><path d="M4 24 Q8 20.5 11.5 23.5 T19.5 23" stroke="#e0e0e4" stroke-width="1.4" fill="none"/><circle cx="11.6" cy="23.5" r="1.5" fill="#e8e8ea"/><polygon points="30,21.0 30,27.5 23.5,27.5" fill="#b4b4b8"/></svg>
<svg class="ic" style="left:1533px;top:174px" viewBox="0 0 32 32"><circle cx="5.8" cy="6.8" r="2" fill="none" stroke="#b0b0b4" stroke-width="1"/><path d="M7.2 8.4 L9.4 10.8" stroke="#b0b0b4" stroke-width="1.1"/><g transform="translate(9.5 7.5) scale(1.05)" fill="#808084"><path d="M2.6 3.2 Q2.6 1.4 4.4 1.4 H14.6 Q16.4 1.4 16.4 3.2 V13.2 H10.8 V7.4 H7.8 V9.6 H2.6 Z"/><rect x="12" y="-0.4" width="2.4" height="2.2" /><rect x="4.4" y="9.6" width="1.3" height="3.4"/><rect x="1" y="13.8" width="17" height="1.5" fill="#a4a4a8"/></g></svg>
<svg class="ic" style="left:1533px;top:222px" viewBox="0 0 32 32"><path d="M7.5 20.6 Q8.5 14 16 13 H23.5 Q26.6 13.4 27 20.6 Z" fill="url(#gC)"/><path d="M12.5 13.6 Q13.5 10.2 17.5 10.2 H24" stroke="#b4b4b8" stroke-width="1.5" fill="none"/><circle cx="23.6" cy="16.4" r="0.9" fill="#3a3a3f"/><rect x="7" y="22" width="20.5" height="1.3" fill="#8e8e92"/><rect x="6" y="24.6" width="22.5" height="1.3" fill="#5c5c60"/></svg>
<svg class="ic" style="left:1533px;top:270px" viewBox="0 0 32 32"><polygon points="3.5,4.1 4.7,11.7 9.5,9.1" fill="#9c9ca0"/><g transform="translate(9.5 8.2) scale(0.84)"><path d="M6.2 2.2 L9.8 0.6 Q12 3.6 14.2 0.6 L17.8 2.2 L23 7.4 L19.6 11 L18 9.6 L18 19 L6 19 L6 9.6 L4.4 11 L1 7.4 Z" fill="#8e8e92"/></g><path d="M17.4 9 Q19.6 11.6 21.8 9" stroke="#d0d0d4" stroke-width="1" fill="none"/></svg>
<svg class="ic" style="left:1533px;top:318px" viewBox="0 0 32 32"><polygon points="3.5,4.6 4.7,12.2 9.5,9.6" fill="#9c9ca0"/><rect x="8.5" y="13.5" width="8.8" height="8.8" fill="#f2f2f2"/><rect x="8.5" y="13.5" width="2.2" height="2.2" fill="#1c1c20"/><rect x="8.5" y="17.9" width="2.2" height="2.2" fill="#1c1c20"/><rect x="10.7" y="15.7" width="2.2" height="2.2" fill="#1c1c20"/><rect x="10.7" y="20.1" width="2.2" height="2.2" fill="#1c1c20"/><rect x="12.9" y="13.5" width="2.2" height="2.2" fill="#1c1c20"/><rect x="12.9" y="17.9" width="2.2" height="2.2" fill="#1c1c20"/><rect x="15.1" y="15.7" width="2.2" height="2.2" fill="#1c1c20"/><rect x="15.1" y="20.1" width="2.2" height="2.2" fill="#1c1c20"/><path d="M15.5 9.5 Q21 5.5 27 8.5 L27.6 20 Q22.5 18.5 18.5 22.5 Z" fill="url(#gT)"/></svg>
<svg class="ic" style="left:1533px;top:350px" viewBox="0 0 32 32"><polygon points="3.5,4.6 4.7,12.2 9.5,9.6" fill="#9c9ca0"/><g transform="translate(7.5 8) scale(0.9)"><path d="M6.2 2.2 L9.8 0.6 Q12 3.6 14.2 0.6 L17.8 2.2 L23 7.4 L19.6 11 L18 9.6 L18 19 L6 19 L6 9.6 L4.4 11 L1 7.4 Z" fill="#9a9a9e"/></g><rect x="13.8" y="14.6" width="9.0" height="9.0" fill="#f2f2f2"/><rect x="13.8" y="14.6" width="1.8" height="1.8" fill="#1c1c20"/><rect x="13.8" y="18.2" width="1.8" height="1.8" fill="#1c1c20"/><rect x="13.8" y="21.8" width="1.8" height="1.8" fill="#1c1c20"/><rect x="15.6" y="16.4" width="1.8" height="1.8" fill="#1c1c20"/><rect x="15.6" y="20.0" width="1.8" height="1.8" fill="#1c1c20"/><rect x="17.4" y="14.6" width="1.8" height="1.8" fill="#1c1c20"/><rect x="17.4" y="18.2" width="1.8" height="1.8" fill="#1c1c20"/><rect x="17.4" y="21.8" width="1.8" height="1.8" fill="#1c1c20"/><rect x="19.2" y="16.4" width="1.8" height="1.8" fill="#1c1c20"/><rect x="19.2" y="20.0" width="1.8" height="1.8" fill="#1c1c20"/><rect x="21.0" y="14.6" width="1.8" height="1.8" fill="#1c1c20"/><rect x="21.0" y="18.2" width="1.8" height="1.8" fill="#1c1c20"/><rect x="21.0" y="21.8" width="1.8" height="1.8" fill="#1c1c20"/></svg>
<svg class="ic" style="left:1533px;top:382px" viewBox="0 0 32 32"><g transform="translate(4.5 6) scale(1.0)"><path d="M6.2 2.2 L9.8 0.6 Q12 3.6 14.2 0.6 L17.8 2.2 L23 7.4 L19.6 11 L18 9.6 L18 19 L6 19 L6 9.6 L4.4 11 L1 7.4 Z" fill="#9a9a9e"/></g><rect x="11.6" y="14" width="9.75" height="9.75" fill="#f2f2f2"/><rect x="11.6" y="14.0" width="1.95" height="1.95" fill="#1c1c20"/><rect x="11.6" y="17.9" width="1.95" height="1.95" fill="#1c1c20"/><rect x="11.6" y="21.8" width="1.95" height="1.95" fill="#1c1c20"/><rect x="13.5" y="15.9" width="1.95" height="1.95" fill="#1c1c20"/><rect x="13.5" y="19.9" width="1.95" height="1.95" fill="#1c1c20"/><rect x="15.5" y="14.0" width="1.95" height="1.95" fill="#1c1c20"/><rect x="15.5" y="17.9" width="1.95" height="1.95" fill="#1c1c20"/><rect x="15.5" y="21.8" width="1.95" height="1.95" fill="#1c1c20"/><rect x="17.4" y="15.9" width="1.95" height="1.95" fill="#1c1c20"/><rect x="17.4" y="19.9" width="1.95" height="1.95" fill="#1c1c20"/><rect x="19.4" y="14.0" width="1.95" height="1.95" fill="#1c1c20"/><rect x="19.4" y="17.9" width="1.95" height="1.95" fill="#1c1c20"/><rect x="19.4" y="21.8" width="1.95" height="1.95" fill="#1c1c20"/></svg>
<svg class="ic" style="left:1533px;top:430px" viewBox="0 0 32 32"><polygon points="3.5,4.1 4.7,11.7 9.5,9.1" fill="#9c9ca0"/><path d="M10.5 23 L26 9" stroke="#f0f0f0" stroke-width="1.7" stroke-dasharray="3.6 2.4"/></svg>
<svg class="ic" style="left:1533px;top:462px" viewBox="0 0 32 32"><path d="M6 11 H26" stroke="#f0f0f0" stroke-width="1.8" stroke-dasharray="3.6 2.2"/><path d="M6 18.5 H25" stroke="#e0e0e4" stroke-width="1.2"/><circle cx="6" cy="18.5" r="1.4" fill="#f0f0f0"/><circle cx="25" cy="18.5" r="1.4" fill="#f0f0f0"/><polygon points="30,20.0 30,26.5 23.5,26.5" fill="#b4b4b8"/></svg>
<svg class="ic" style="left:1533px;top:510px" viewBox="0 0 32 32"><polygon points="3.5,3.6 4.7,11.2 9.5,8.6" fill="#9c9ca0"/><path d="M14 6.5 q5 0 5 1.6 q0 1.6 -5 1.6 q5 0 5 1.6 q0 1.6 -5 1.6 q5 0 5 1.6 q0 1.6 -5 1.6 q5 0 5 1.6 q0 1.6 -5 1.6 q5 0 5 1.6 q0 1.6 -5 1.6" stroke="#f0f0f0" stroke-width="1.1" fill="none"/><path d="M23.5 6.5 V23" stroke="#e0e0e4" stroke-width="1.2"/><circle cx="23.5" cy="6.5" r="1.4" fill="#f0f0f0"/><circle cx="23.5" cy="23" r="1.4" fill="#f0f0f0"/></svg>
<svg class="ic" style="left:1533px;top:542px" viewBox="0 0 32 32"><path d="M5.5 15 q0 -5 1.7 -5 q1.7 0 1.7 5 q0 -5 1.7 -5 q1.7 0 1.7 5 q0 -5 1.7 -5 q1.7 0 1.7 5 q0 -5 1.7 -5 q1.7 0 1.7 5 q0 -5 1.7 -5 q1.7 0 1.7 5 q0 -5 1.7 -5 q1.7 0 1.7 5" stroke="#f0f0f0" stroke-width="1.1" fill="none"/><path d="M5.5 20.5 H25" stroke="#e0e0e4" stroke-width="1.2"/><circle cx="5.5" cy="20.5" r="1.4" fill="#f0f0f0"/><circle cx="25" cy="20.5" r="1.4" fill="#f0f0f0"/><polygon points="30,21.5 30,28 23.5,28" fill="#b4b4b8"/></svg>
<svg class="ic" style="left:1533px;top:590px" viewBox="0 0 32 32"><path d="M6 12 L11 10 L13 13 L16 12 V24 H6 Z" fill="#8e8e92"/><path d="M16 12 L19 9 L22 11 L25 8.5 L27.5 13 L26 17 V23 H16 Z" fill="#a8a8ac"/><circle cx="16.5" cy="17.5" r="3.6" fill="#2a2a2e" stroke="#e4e4e6" stroke-width="1"/><path d="M14.6 17.5 H18.4 M16.5 15.6 V19.4" stroke="#f0f0f0" stroke-width="1.2"/><path d="M9 23 L24 13.5" stroke="#d0d0d4" stroke-width="0.9"/></svg>
<svg class="ic" style="left:1533px;top:638px" viewBox="0 0 32 32"><path d="M8 9 L12.5 6.5 L16 8.5 L19.5 6.5 L24 9 L25 25.5 H7 Z" fill="#a8a8ac"/><path d="M7.4 12 H24.6" stroke="#26262c" stroke-width="1.1"/><path d="M7.4 16 H24.6" stroke="#26262c" stroke-width="1.1"/><path d="M7.4 20 H24.6" stroke="#26262c" stroke-width="1.1"/><path d="M7.4 24 H24.6" stroke="#26262c" stroke-width="1.1"/><path d="M16 8.5 V25.5" stroke="#26262c" stroke-width="1.2"/><path d="M12.5 6.5 L16 10 L19.5 6.5" stroke="#d8d8dc" stroke-width="1" fill="none"/></svg>
<div id="v3d"><svg width="457" height="943" viewBox="111 63 457 943" style="position:absolute;left:0;top:0">
<defs>
<clipPath id="cBody"><path d="M269.5 287.4 L240.0 298.0 L203.0 314.0 L205.0 330.0 L208.6 351.0 L217.5 382.0 L223.0 404.0 L226.0 433.0 L223.0 470.0 L223.0 558.0 L215.0 614.0 L209.7 660.6 L224.0 667.0 L253.0 677.0 L286.0 675.0 L319.0 679.4 L350.0 680.5 L374.0 677.0 L407.6 675.0 L444.0 667.0 L439.7 647.0 L440.8 558.6 L436.4 514.0 L434.0 470.0 L433.0 410.6 L436.4 382.0 L438.6 351.0 L445.0 322.0 L450.0 318.0 L420.0 306.0 L376.4 288.4 L350.0 300.0 L322.0 312.0 L290.0 300.0 L269.5 287.4 Z"/></clipPath>
<clipPath id="cLS"><path d="M203.0 314.0 L194.0 328.0 L186.5 346.0 L173.0 402.0 L162.0 462.0 L146.6 543.0 L136.6 603.0 L134.6 622.0 L136.4 636.0 L139.2 645.6 L137.0 657.6 L173.2 665.0 L179.8 636.0 L193.0 581.0 L208.6 514.0 L217.5 470.0 L224.0 425.0 L223.0 404.0 L217.5 382.0 L208.6 351.0 L205.0 330.0 Z"/></clipPath>
<clipPath id="cRS"><path d="M450.0 318.0 L458.0 338.0 L467.0 364.0 L485.0 422.0 L495.0 468.0 L507.0 525.0 L523.0 585.0 L530.5 625.0 L532.7 656.0 L499.5 662.8 L480.7 592.0 L463.0 514.0 L450.8 470.0 L438.6 435.0 L433.0 410.6 L436.4 382.0 L438.6 351.0 L445.0 322.0 Z"/></clipPath>
<clipPath id="cLC"><path d="M137.0 657.6 L172.8 664.6 L168.0 696.5 L130.2 689.2 Z"/></clipPath>
<clipPath id="cRC"><path d="M499.5 662.8 L532.7 656.0 L542.7 682.7 L507.3 693.8 Z"/></clipPath>
<linearGradient id="gShL" x1="0" x2="1"><stop offset="0" stop-color="#d9dbe2"/><stop offset="1" stop-color="#fff" stop-opacity="0"/></linearGradient>
<linearGradient id="gShR" x1="1" x2="0"><stop offset="0" stop-color="#d4d6de"/><stop offset="1" stop-color="#fff" stop-opacity="0"/></linearGradient>
<linearGradient id="gLeaf" x1="0" y1="0" x2="1" y2="1"><stop offset="0" stop-color="#b9babf"/><stop offset="0.55" stop-color="#d6d7da"/><stop offset="1" stop-color="#f4f4f6"/></linearGradient>
<linearGradient id="gStand" x1="0" x2="1"><stop offset="0" stop-color="#fff"/><stop offset="0.7" stop-color="#f2f2f4"/><stop offset="1" stop-color="#cfcfd3"/></linearGradient>
</defs>
<path d="M111 961.2 L568 965.9 M111 974.7 L568 979.4 M111 988.4 L568 993.3 M111 1002.5 L568 1007.3 M156.3 961.7 L141.4 1006 M205.6 962.2 L194.3 1006 M255.5 962.7 L246.5 1006 M305.7 963.2 L298.8 1006 M355.6 963.7 L350.5 1006 M405.5 964.2 L402.8 1006 M455.7 964.7 L455.7 1006 M506.5 965.3 L507.4 1006 M556.4 965.8 L559.7 1006" stroke="#d9d9d9" stroke-width="1" fill="none"/>
<path d="M203.0 314.0 L194.0 328.0 L186.5 346.0 L173.0 402.0 L162.0 462.0 L146.6 543.0 L136.6 603.0 L134.6 622.0 L136.4 636.0 L139.2 645.6 L137.0 657.6 L173.2 665.0 L179.8 636.0 L193.0 581.0 L208.6 514.0 L217.5 470.0 L224.0 425.0 L223.0 404.0 L217.5 382.0 L208.6 351.0 L205.0 330.0 Z" fill="#fff"/>
<g clip-path="url(#cLS)">
<path d="M225 400 L200 560 L178 660 L160 660 L185 540 L210 400 Z" fill="url(#gShR)" opacity="0.55"/>
<path d="M213.1 300.0 C211.9 302.3 208.9 309.3 206.3 314.0 C203.7 318.7 200.2 322.7 197.5 328.0 C194.9 333.3 193.6 333.7 190.3 346.0 C187.0 358.3 181.5 382.7 177.8 402.0 C174.0 421.3 172.0 438.5 167.8 462.0 C163.6 485.5 156.8 519.5 152.6 543.0 C148.4 566.5 144.6 588.5 142.6 603.0 C140.6 617.5 140.6 620.5 140.4 630.0 C140.2 639.5 141.0 650.0 141.4 660.0 C141.8 670.0 142.7 685.0 143.0 690.0" stroke="#4a78cc" stroke-width="2.8" fill="none"/><path d="M219.7 300.0 C218.7 302.3 215.9 309.3 213.4 314.0 C211.0 318.7 207.7 322.7 205.2 328.0 C202.7 333.3 201.5 333.7 198.7 346.0 C195.8 358.3 191.2 382.7 188.2 402.0 C185.1 421.3 184.1 438.5 180.4 462.0 C176.6 485.5 169.7 519.5 165.6 543.0 C161.5 566.5 157.6 588.5 155.6 603.0 C153.6 617.5 153.6 620.5 153.4 630.0 C153.2 639.5 154.0 650.0 154.4 660.0 C154.8 670.0 155.7 685.0 156.0 690.0" stroke="#4a78cc" stroke-width="3.2" fill="none"/><path d="M225.8 300.0 C224.9 302.3 222.3 309.3 220.1 314.0 C217.8 318.7 214.6 322.7 212.3 328.0 C210.0 333.3 208.8 333.7 206.3 346.0 C203.9 358.3 200.1 382.7 197.7 402.0 C195.3 421.3 195.3 438.5 192.0 462.0 C188.6 485.5 181.7 519.5 177.6 543.0 C173.5 566.5 169.6 588.5 167.6 603.0 C165.6 617.5 165.6 620.5 165.4 630.0 C165.2 639.5 166.0 650.0 166.4 660.0 C166.8 670.0 167.7 685.0 168.0 690.0" stroke="#4a78cc" stroke-width="3.4" fill="none"/><path d="M231.7 300.0 C230.8 302.3 228.5 309.3 226.4 314.0 C224.3 318.7 221.2 322.7 219.0 328.0 C216.9 333.3 215.7 333.7 213.7 346.0 C211.7 358.3 208.7 382.7 206.9 402.0 C205.1 421.3 206.0 438.5 203.1 462.0 C200.1 485.5 193.1 519.5 189.1 543.0 C185.1 566.5 181.1 588.5 179.1 603.0 C177.1 617.5 177.1 620.5 176.9 630.0 C176.7 639.5 177.5 650.0 177.9 660.0 C178.3 670.0 179.2 685.0 179.5 690.0" stroke="#4a78cc" stroke-width="3.2" fill="none"/><path d="M236.6 300.0 C235.7 302.3 233.6 309.3 231.6 314.0 C229.6 318.7 226.6 322.7 224.6 328.0 C222.7 333.3 221.5 333.7 219.8 346.0 C218.1 358.3 215.7 382.7 214.5 402.0 C213.2 421.3 214.9 438.5 212.2 462.0 C209.6 485.5 202.5 519.5 198.6 543.0 C194.7 566.5 190.6 588.5 188.6 603.0 C186.6 617.5 186.6 620.5 186.4 630.0 C186.2 639.5 187.0 650.0 187.4 660.0 C187.8 670.0 188.7 685.0 189.0 690.0" stroke="#4a78cc" stroke-width="3" fill="none"/><path d="M241.1 300.0 C240.4 302.3 238.4 309.3 236.6 314.0 C234.7 318.7 231.8 322.7 230.0 328.0 C228.1 333.3 226.9 333.7 225.5 346.0 C224.2 358.3 222.4 382.7 221.6 402.0 C220.9 421.3 223.3 438.5 220.9 462.0 C218.6 485.5 211.5 519.5 207.6 543.0 C203.7 566.5 199.6 588.5 197.6 603.0 C195.6 617.5 195.6 620.5 195.4 630.0 C195.2 639.5 196.0 650.0 196.4 660.0 C196.8 670.0 197.7 685.0 198.0 690.0" stroke="#4a78cc" stroke-width="2.4" fill="none"/>
</g>
<path d="M137.0 657.6 L172.8 664.6 L168.0 696.5 L130.2 689.2 Z" fill="#e2e3e7"/>
<g clip-path="url(#cLC)"><path d="M133 667.5 L174 675.5" stroke="#6f9de2" stroke-width="4.2"/><path d="M129 685.5 L170 694" stroke="#6f9de2" stroke-width="4.2"/></g>
<path d="M450.0 318.0 L458.0 338.0 L467.0 364.0 L485.0 422.0 L495.0 468.0 L507.0 525.0 L523.0 585.0 L530.5 625.0 L532.7 656.0 L499.5 662.8 L480.7 592.0 L463.0 514.0 L450.8 470.0 L438.6 435.0 L433.0 410.6 L436.4 382.0 L438.6 351.0 L445.0 322.0 Z" fill="#fff"/>
<g clip-path="url(#cRS)">
<path d="M433 400 L446 470 L470 570 L500 665 L515 665 L480 560 L455 440 Z" fill="url(#gShL)" opacity="0.6"/>
<path d="M437.4 300.0 C439.1 303.0 444.3 311.7 447.2 318.0 C450.1 324.3 452.2 330.3 454.9 338.0 C457.6 345.7 459.2 350.0 463.5 364.0 C467.9 378.0 476.3 404.7 480.7 422.0 C485.2 439.3 486.5 450.8 490.1 468.0 C493.6 485.2 497.3 505.5 502.0 525.0 C506.7 544.5 514.1 568.3 518.0 585.0 C521.9 601.7 523.9 613.2 525.5 625.0 C527.1 636.8 526.8 645.2 527.7 656.0 C528.6 666.8 530.5 684.3 531.0 690.0" stroke="#4a78cc" stroke-width="1.6" fill="none"/><path d="M434.1 300.0 C435.7 303.0 440.8 311.7 443.5 318.0 C446.3 324.3 448.3 330.3 450.9 338.0 C453.5 345.7 455.0 350.0 459.1 364.0 C463.1 378.0 471.1 404.7 475.2 422.0 C479.3 439.3 480.3 450.8 483.7 468.0 C487.1 485.2 490.9 505.5 495.5 525.0 C500.1 544.5 507.6 568.3 511.5 585.0 C515.4 601.7 517.4 613.2 519.0 625.0 C520.6 636.8 520.3 645.2 521.2 656.0 C522.1 666.8 524.0 684.3 524.5 690.0" stroke="#4a78cc" stroke-width="2" fill="none"/><path d="M430.3 300.0 C431.8 303.0 436.7 311.7 439.3 318.0 C442.0 324.3 443.8 330.3 446.3 338.0 C448.7 345.7 450.1 350.0 453.9 364.0 C457.6 378.0 465.0 404.7 468.8 422.0 C472.5 439.3 473.1 450.8 476.3 468.0 C479.5 485.2 483.4 505.5 488.0 525.0 C492.6 544.5 500.1 568.3 504.0 585.0 C507.9 601.7 509.9 613.2 511.5 625.0 C513.1 636.8 512.8 645.2 513.7 656.0 C514.6 666.8 516.5 684.3 517.0 690.0" stroke="#4a78cc" stroke-width="2.2" fill="none"/><path d="M425.7 300.0 C427.1 303.0 431.8 311.7 434.3 318.0 C436.8 324.3 438.5 330.3 440.7 338.0 C442.9 345.7 444.3 350.0 447.7 364.0 C451.1 378.0 457.8 404.7 461.1 422.0 C464.4 439.3 464.5 450.8 467.5 468.0 C470.5 485.2 474.4 505.5 479.0 525.0 C483.6 544.5 491.1 568.3 495.0 585.0 C498.9 601.7 500.9 613.2 502.5 625.0 C504.1 636.8 503.8 645.2 504.7 656.0 C505.6 666.8 507.4 684.3 508.0 690.0" stroke="#4a78cc" stroke-width="3.6" fill="none"/><path d="M420.1 300.0 C421.4 303.0 425.8 311.7 428.1 318.0 C430.4 324.3 431.9 330.3 433.9 338.0 C435.9 345.7 437.1 350.0 440.1 364.0 C443.0 378.0 448.9 404.7 451.7 422.0 C454.5 439.3 453.9 450.8 456.7 468.0 C459.4 485.2 463.4 505.5 468.0 525.0 C472.6 544.5 480.1 568.3 484.0 585.0 C487.9 601.7 489.9 613.2 491.5 625.0 C493.1 636.8 492.8 645.2 493.7 656.0 C494.6 666.8 496.4 684.3 497.0 690.0" stroke="#4a78cc" stroke-width="2.4" fill="none"/><path d="M414.5 300.0 C415.7 303.0 419.8 311.7 421.9 318.0 C424.0 324.3 425.4 330.3 427.1 338.0 C428.9 345.7 429.9 350.0 432.5 364.0 C435.0 378.0 440.1 404.7 442.3 422.0 C444.5 439.3 443.4 450.8 445.8 468.0 C448.3 485.2 452.5 505.5 457.0 525.0 C461.5 544.5 469.1 568.3 473.0 585.0 C476.9 601.7 478.9 613.2 480.5 625.0 C482.1 636.8 481.8 645.2 482.7 656.0 C483.6 666.8 485.4 684.3 486.0 690.0" stroke="#4a78cc" stroke-width="3" fill="none"/><path d="M410.4 300.0 C411.6 303.0 415.5 311.7 417.4 318.0 C419.4 324.3 420.6 330.3 422.2 338.0 C423.8 345.7 424.7 350.0 426.9 364.0 C429.2 378.0 433.6 404.7 435.5 422.0 C437.3 439.3 435.7 450.8 438.0 468.0 C440.2 485.2 444.5 505.5 449.0 525.0 C453.5 544.5 461.1 568.3 465.0 585.0 C468.9 601.7 470.9 613.2 472.5 625.0 C474.1 636.8 473.8 645.2 474.7 656.0 C475.6 666.8 477.4 684.3 478.0 690.0" stroke="#4a78cc" stroke-width="2" fill="none"/>
</g>
<path d="M499.5 662.8 L532.7 656.0 L542.7 682.7 L507.3 693.8 Z" fill="#f3f4f7"/>
<g clip-path="url(#cRC)"><path d="M498 670 L536 660" stroke="#5d8ad6" stroke-width="4"/><path d="M503 686 L542 674" stroke="#5d8ad6" stroke-width="4"/></g>
<path d="M269.5 287.4 L240.0 298.0 L203.0 314.0 L205.0 330.0 L208.6 351.0 L217.5 382.0 L223.0 404.0 L226.0 433.0 L223.0 470.0 L223.0 558.0 L215.0 614.0 L209.7 660.6 L224.0 667.0 L253.0 677.0 L286.0 675.0 L319.0 679.4 L350.0 680.5 L374.0 677.0 L407.6 675.0 L444.0 667.0 L439.7 647.0 L440.8 558.6 L436.4 514.0 L434.0 470.0 L433.0 410.6 L436.4 382.0 L438.6 351.0 L445.0 322.0 L450.0 318.0 L420.0 306.0 L376.4 288.4 L350.0 300.0 L322.0 312.0 L290.0 300.0 L269.5 287.4 Z" fill="#fff"/>
<g clip-path="url(#cBody)">
<path d="M205 657 L224 658 L253 667.5 L286 665.5 L319 669.5 L350 670.5 L374 667.5 L408 665.5 L446 657 L446 690 L205 690 Z" fill="#f1f2f6"/>
<path d="M222 400 L262 420 L250 520 L236 600 L222 600 Z" fill="url(#gShL)" opacity="0.55"/>
<path d="M442 400 L400 430 L420 520 L430 600 L442 600 Z" fill="url(#gShR)" opacity="0.6"/>
<path d="M220.8 308.0 C220.8 318.8 220.4 356.0 220.8 373.0 C221.2 390.0 222.1 393.8 223.0 410.0 C223.9 426.2 225.8 441.7 226.4 470.0 C227.0 498.3 227.0 547.5 226.4 580.0 C225.8 612.5 223.6 650.8 223.0 665.0" stroke="#4a78cc" stroke-width="3.2" fill="none" stroke-linecap="round"/>
<path d="M237.0 300.0 C237.0 312.2 237.2 344.7 237.0 373.0 C236.8 401.3 235.9 435.5 235.6 470.0 C235.3 504.5 235.6 547.0 235.2 580.0 C234.8 613.0 233.4 653.3 233.0 668.0" stroke="#4a78cc" stroke-width="3.6" fill="none" stroke-linecap="round"/>
<path d="M244.0 425.0 C243.6 432.5 242.0 444.2 241.6 470.0 C241.2 495.8 241.7 547.0 241.4 580.0 C241.1 613.0 240.2 653.3 240.0 668.0" stroke="#4a78cc" stroke-width="1.8" fill="none" stroke-linecap="round"/>
<path d="M225.0 480.0 C224.6 496.7 223.8 553.3 222.5 580.0 C221.2 606.7 218.9 625.3 217.5 640.0 C216.1 654.7 214.6 663.3 214.0 668.0" stroke="#4a78cc" stroke-width="1.6" fill="none" stroke-linecap="round"/>
<path d="M224.0 560.0 C223.1 570.8 220.4 607.7 218.5 625.0 C216.6 642.3 213.5 657.5 212.5 664.0" stroke="#4a78cc" stroke-width="1.3" fill="none" stroke-linecap="round"/>
<path d="M229.5 500.0 C229.7 516.7 230.8 572.0 230.5 600.0 C230.2 628.0 228.4 656.7 228.0 668.0" stroke="#4a78cc" stroke-width="1.5" fill="none" stroke-linecap="round"/>
<path d="M252.0 290.0 C252.1 303.8 252.5 343.0 252.5 373.0 C252.5 403.0 251.9 435.5 252.0 470.0 C252.1 504.5 253.0 543.3 253.0 580.0 C253.0 616.7 252.2 671.7 252.0 690.0" stroke="#4a78cc" stroke-width="3.8" fill="none" stroke-linecap="round"/>
<path d="M267.5 285.0 C267.6 299.7 268.0 342.2 268.0 373.0 C268.0 403.8 267.5 435.5 267.5 470.0 C267.5 504.5 267.8 543.3 268.0 580.0 C268.2 616.7 268.4 671.7 268.5 690.0" stroke="#4a78cc" stroke-width="4" fill="none" stroke-linecap="round"/>
<path d="M283.0 285.0 C283.1 299.7 283.2 342.2 283.5 373.0 C283.8 403.8 284.2 435.5 284.5 470.0 C284.8 504.5 284.9 543.3 285.0 580.0 C285.1 616.7 285.0 671.7 285.0 690.0" stroke="#4a78cc" stroke-width="4" fill="none" stroke-linecap="round"/>
<path d="M303.5 300.0 C303.5 312.2 303.4 344.7 303.5 373.0 C303.6 401.3 303.9 435.5 304.0 470.0 C304.1 504.5 304.0 543.3 304.0 580.0 C304.0 616.7 304.0 671.7 304.0 690.0" stroke="#4a78cc" stroke-width="4" fill="none" stroke-linecap="round"/>
<path d="M320.5 318.0 C320.5 327.2 320.5 347.7 320.5 373.0 C320.5 398.3 320.5 435.5 320.5 470.0 C320.5 504.5 320.5 543.3 320.5 580.0 C320.5 616.7 320.5 671.7 320.5 690.0" stroke="#4a78cc" stroke-width="3.6" fill="none" stroke-linecap="round"/>
<path d="M341.5 300.0 C341.4 312.2 341.2 344.7 341.0 373.0 C340.8 401.3 340.7 435.5 340.5 470.0 C340.3 504.5 340.1 543.3 340.0 580.0 C339.9 616.7 340.0 671.7 340.0 690.0" stroke="#4a78cc" stroke-width="4" fill="none" stroke-linecap="round"/>
<path d="M358.0 290.0 C357.9 303.8 357.9 343.0 357.7 373.0 C357.4 403.0 356.9 435.5 356.5 470.0 C356.1 504.5 355.8 543.3 355.5 580.0 C355.2 616.7 355.1 671.7 355.0 690.0" stroke="#4a78cc" stroke-width="4" fill="none" stroke-linecap="round"/>
<path d="M375.0 285.0 C374.9 299.7 374.6 342.2 374.3 373.0 C374.0 403.8 373.4 435.5 373.0 470.0 C372.6 504.5 372.2 543.3 372.0 580.0 C371.8 616.7 372.0 671.7 372.0 690.0" stroke="#4a78cc" stroke-width="4" fill="none" stroke-linecap="round"/>
<path d="M390.0 290.0 C389.9 303.8 389.6 343.0 389.4 373.0 C389.2 403.0 389.1 435.5 389.0 470.0 C388.9 504.5 388.8 543.3 388.7 580.0 C388.6 616.7 388.5 671.7 388.5 690.0" stroke="#4a78cc" stroke-width="3.8" fill="none" stroke-linecap="round"/>
<path d="M406.0 295.0 C405.9 308.0 405.6 350.5 405.3 373.0 C405.0 395.5 404.7 405.5 404.0 430.0 C403.3 454.5 401.5 491.7 401.0 520.0 C400.5 548.3 400.9 571.7 401.0 600.0 C401.1 628.3 401.4 675.0 401.5 690.0" stroke="#4a78cc" stroke-width="3.4" fill="none" stroke-linecap="round"/>
<path d="M425.0 300.0 C424.9 312.2 424.9 353.0 424.2 373.0 C423.5 393.0 423.0 402.2 421.0 420.0 C419.0 437.8 413.4 453.3 412.0 480.0 C410.6 506.7 412.2 545.0 412.4 580.0 C412.6 615.0 412.9 671.7 413.0 690.0" stroke="#4a78cc" stroke-width="3" fill="none" stroke-linecap="round"/>
<path d="M431.0 425.0 C429.8 432.5 425.7 444.2 424.0 470.0 C422.3 495.8 421.3 543.3 420.8 580.0 C420.3 616.7 421.0 671.7 421.0 690.0" stroke="#4a78cc" stroke-width="2.6" fill="none" stroke-linecap="round"/>
<path d="M432.0 470.0 C431.4 488.3 429.3 543.3 428.6 580.0 C427.9 616.7 428.1 671.7 428.0 690.0" stroke="#4a78cc" stroke-width="2.2" fill="none" stroke-linecap="round"/>
<path d="M438.0 500.0 C437.5 516.7 435.5 568.3 435.0 600.0 C434.5 631.7 435.0 675.0 435.0 690.0" stroke="#4a78cc" stroke-width="2" fill="none" stroke-linecap="round"/>
</g>
<path d="M210.5 652 L224 658 L253 667.5 L286 665.5 L319 669.5 L350 670.5 L374 667.5 L408 665.5 L442 657" stroke="#8f98aa" stroke-width="0.8" fill="none"/>
<rect x="313.6" y="321" width="16.8" height="356" fill="#fff" opacity="0.0"/>
<path d="M313.8 320 L313.8 679 M330.2 318 L330.2 680" stroke="#222" stroke-width="1.1" fill="none"/>
<path d="M203.0 314.0 C201.5 316.3 196.8 322.7 194.0 328.0 C191.2 333.3 190.0 333.7 186.5 346.0 C183.0 358.3 177.1 382.7 173.0 402.0 C168.9 421.3 166.4 438.5 162.0 462.0 C157.6 485.5 150.8 519.5 146.6 543.0 C142.4 566.5 138.6 589.8 136.6 603.0 C134.6 616.2 134.6 616.5 134.6 622.0 C134.6 627.5 135.6 632.1 136.4 636.0 C137.2 639.9 139.1 642.0 139.2 645.6 C139.3 649.2 137.4 655.6 137.0 657.6" stroke="#111" stroke-width="1.9" fill="none"/>
<path d="M173.2 665.0 C174.3 660.2 176.5 650.0 179.8 636.0 C183.1 622.0 188.2 601.3 193.0 581.0 C197.8 560.7 204.5 532.5 208.6 514.0 C212.7 495.5 214.9 484.8 217.5 470.0 C220.1 455.2 222.9 432.5 224.0 425.0" stroke="#111" stroke-width="1.8" fill="none"/>
<path d="M137.0 657.6 L172.8 664.6 L168.0 696.5 L130.2 689.2 Z" stroke="#111" stroke-width="1.9" fill="none" stroke-linejoin="round"/>
<path d="M450.0 318.0 C451.3 321.3 455.2 330.3 458.0 338.0 C460.8 345.7 462.5 350.0 467.0 364.0 C471.5 378.0 480.3 404.7 485.0 422.0 C489.7 439.3 491.3 450.8 495.0 468.0 C498.7 485.2 502.3 505.5 507.0 525.0 C511.7 544.5 519.1 568.3 523.0 585.0 C526.9 601.7 528.9 613.2 530.5 625.0 C532.1 636.8 532.3 650.8 532.7 656.0" stroke="#111" stroke-width="1.9" fill="none"/>
<path d="M499.5 662.8 C496.4 651.0 486.8 616.8 480.7 592.0 C474.6 567.2 468.0 534.3 463.0 514.0 C458.0 493.7 454.9 483.2 450.8 470.0 C446.7 456.8 440.6 440.8 438.6 435.0" stroke="#111" stroke-width="1.8" fill="none"/>
<path d="M499.5 662.8 L532.7 656.0 L542.7 682.7 L507.3 693.8 Z" stroke="#111" stroke-width="1.9" fill="none" stroke-linejoin="round"/>
<path d="M203.0 314.0 C203.3 316.7 204.1 323.8 205.0 330.0 C205.9 336.2 206.5 342.3 208.6 351.0 C210.7 359.7 215.1 373.2 217.5 382.0 C219.9 390.8 221.6 395.5 223.0 404.0 C224.4 412.5 226.0 422.0 226.0 433.0 C226.0 444.0 223.5 449.2 223.0 470.0 C222.5 490.8 224.3 534.0 223.0 558.0 C221.7 582.0 217.2 596.9 215.0 614.0 C212.8 631.1 210.6 652.8 209.7 660.6" stroke="#111" stroke-width="1.6" fill="none"/>
<path d="M209.7 660.6 C212.1 661.7 216.8 664.3 224.0 667.0 C231.2 669.7 242.7 675.7 253.0 677.0 C263.3 678.3 275.0 674.6 286.0 675.0 C297.0 675.4 308.3 678.5 319.0 679.4 C329.7 680.3 340.8 680.9 350.0 680.5 C359.2 680.1 364.4 677.9 374.0 677.0 C383.6 676.1 395.9 676.7 407.6 675.0 C419.3 673.3 437.9 668.3 444.0 667.0" stroke="#111" stroke-width="2" fill="none"/>
<path d="M444.0 667.0 C443.3 663.7 440.2 665.1 439.7 647.0 C439.2 628.9 441.4 580.8 440.8 558.6 C440.2 536.4 437.5 528.8 436.4 514.0 C435.3 499.2 434.6 487.2 434.0 470.0 C433.4 452.8 432.6 425.3 433.0 410.6 C433.4 395.9 435.5 391.9 436.4 382.0 C437.3 372.1 437.2 361.0 438.6 351.0 C440.0 341.0 443.1 327.5 445.0 322.0 C446.9 316.5 449.2 318.7 450.0 318.0" stroke="#111" stroke-width="1.6" fill="none"/>
<path d="M269.5 287.4 L240 298 L203 314" stroke="#111" stroke-width="1.7" fill="none"/>
<path d="M376.4 288.4 L420 306 L450 318" stroke="#111" stroke-width="1.7" fill="none"/>
<clipPath id="cStand"><path d="M288 268 L295.5 260 L309 256.6 L332 256.1 L351.3 258 L357 264 L359 273 L356.6 280.2 L322.4 276.3 L288.2 279.7 L285.8 274 Z"/></clipPath>
<path d="M288 268 L295.5 260 L309 256.6 L332 256.1 L351.3 258 L357 264 L359 273 L356.6 280.2 L322.4 276.3 L288.2 279.7 L285.8 274 Z" fill="url(#gStand)"/>
<g clip-path="url(#cStand)">
<path d="M290.5 254 L291.0 282" stroke="#4a78cc" stroke-width="2.6"/>
<path d="M303.7 254 L304.2 282" stroke="#4a78cc" stroke-width="3.2"/>
<path d="M319.5 254 L320.0 282" stroke="#4a78cc" stroke-width="3.2"/>
<path d="M332 254 L332.5 282" stroke="#4a78cc" stroke-width="3.2"/>
<path d="M347 254 L347.5 282" stroke="#4a78cc" stroke-width="3"/>
</g>
<path d="M288.2 279.7 Q322 274.5 356.6 280.2" stroke="#222" stroke-width="1" fill="none"/>
<clipPath id="cInner"><path d="M288.2 279.7 Q322 274.5 356.6 280.2 Q350 294 341.7 301.8 Q332 309 320 312.5 Q309 306 301.2 299 Q292 289 288.2 279.7 Z"/></clipPath>
<path d="M288.2 279.7 Q322 274.5 356.6 280.2 Q350 294 341.7 301.8 Q332 309 320 312.5 Q309 306 301.2 299 Q292 289 288.2 279.7 Z" fill="#f6f6f8"/>
<g clip-path="url(#cInner)">
<path d="M322 300 L358 276 L358 286 L330 308 Z" fill="#d5d6da"/>
<path d="M286 300.0 Q300 286.0 320 275.0" stroke="#4a78cc" stroke-width="3" fill="none"/>
<path d="M297 302.5 Q311 287.5 331 276.0" stroke="#4a78cc" stroke-width="3" fill="none"/>
<path d="M308 305.0 Q322 289.0 342 277.0" stroke="#4a78cc" stroke-width="3" fill="none"/>
<path d="M319 307.5 Q333 290.5 353 278.0" stroke="#4a78cc" stroke-width="3" fill="none"/>
<path d="M330 310.0 Q344 292.0 364 279.0" stroke="#4a78cc" stroke-width="3" fill="none"/>
<path d="M341 312.5 Q355 293.5 375 280.0" stroke="#4a78cc" stroke-width="3" fill="none"/>
</g>
<clipPath id="cLL"><path d="M269.5 287.4 Q275 281 281 275.8 L286.8 266.2 L295.5 260.4 Q288 266 285.8 273.9 Q287 281 301.2 299 Q309 306 320 312.5 L291.1 335.6 Z"/></clipPath>
<path d="M269.5 287.4 Q275 281 281 275.8 L286.8 266.2 L295.5 260.4 Q288 266 285.8 273.9 Q287 281 301.2 299 Q309 306 320 312.5 L291.1 335.6 Z" fill="url(#gLeaf)"/>
<g clip-path="url(#cLL)">
<path d="M266 286 Q280 284 290 272" stroke="#4a78cc" stroke-width="3" fill="none" opacity="0.92"/>
<path d="M270 300 Q285 296 297 284" stroke="#4a78cc" stroke-width="3.4" fill="none" opacity="0.92"/>
<path d="M274 313 Q292 308 306 296" stroke="#4a78cc" stroke-width="3.4" fill="none" opacity="0.92"/>
<path d="M280 326 Q300 318 316 306" stroke="#4a78cc" stroke-width="3.4" fill="none" opacity="0.92"/>
<path d="M287 338 Q306 328 324 316" stroke="#4a78cc" stroke-width="3" fill="none" opacity="0.92"/>
</g>
<path d="M269.5 287.4 Q275 281 281 275.8 L286.8 266.2 L295.5 260.4 Q288 266 285.8 273.9 Q287 281 301.2 299 Q309 306 320 312.5 L291.1 335.6 Z" fill="none" stroke="#1a1a1a" stroke-width="1.2" stroke-linejoin="round"/>
<clipPath id="cRL"><path d="M376.4 288.4 L370.6 281.6 L363.9 273.9 L358 264.3 L352 258.3 Q358.5 266 358.6 273.9 Q356 286 341.7 301.8 Q332 309.5 320 312.5 L326.8 313.4 L348 339.9 Z"/></clipPath>
<path d="M376.4 288.4 L370.6 281.6 L363.9 273.9 L358 264.3 L352 258.3 Q358.5 266 358.6 273.9 Q356 286 341.7 301.8 Q332 309.5 320 312.5 L326.8 313.4 L348 339.9 Z" fill="#fbfbfd"/>
<g clip-path="url(#cRL)">
<path d="M357 274 Q366 284 378 290" stroke="#4a78cc" stroke-width="2.6" fill="none"/>
<path d="M350 290 Q362 302 374 306" stroke="#4a78cc" stroke-width="3.2" fill="none"/>
<path d="M340 301 Q352 314 368 319" stroke="#4a78cc" stroke-width="3.2" fill="none"/>
<path d="M330 309 Q344 324 362 331" stroke="#4a78cc" stroke-width="3.2" fill="none"/>
<path d="M322 314 Q336 332 354 342" stroke="#4a78cc" stroke-width="3" fill="none"/>
</g>
<path d="M376.4 288.4 L370.6 281.6 L363.9 273.9 L358 264.3 L352 258.3 Q358.5 266 358.6 273.9 Q356 286 341.7 301.8 Q332 309.5 320 312.5 L326.8 313.4 L348 339.9 Z" fill="none" stroke="#1a1a1a" stroke-width="1.2" stroke-linejoin="round"/>
<path d="M269.5 287.4 Q275 281 281 275.8 L286.8 266.2 Q291 260.5 296.4 258.5 L309 256.6 L332 256.1 L351.3 258 Q355 260 358 264.3 L363.9 273.9 L370.6 281.6 L376.4 288.4" fill="none" stroke="#111" stroke-width="1.8" stroke-linejoin="round"/>
<circle cx="321.3" cy="318.7" r="4.2" fill="#d9dbe6" stroke="#1a1a1a" stroke-width="1.1"/>
<circle cx="321.3" cy="318.7" r="0.9" fill="#444"/>
<circle cx="321.3" cy="357" r="3.9" fill="#d9dbe6" stroke="#1a1a1a" stroke-width="1.1"/>
<circle cx="321.3" cy="357" r="0.9" fill="#444"/>
<circle cx="321.3" cy="412.4" r="3.9" fill="#d9dbe6" stroke="#1a1a1a" stroke-width="1.1"/>
<circle cx="321.3" cy="412.4" r="0.9" fill="#444"/>
<circle cx="321.3" cy="468.2" r="3.9" fill="#d9dbe6" stroke="#1a1a1a" stroke-width="1.1"/>
<circle cx="321.3" cy="468.2" r="0.9" fill="#444"/>
<circle cx="321.3" cy="528" r="3.9" fill="#d9dbe6" stroke="#1a1a1a" stroke-width="1.1"/>
<circle cx="321.3" cy="528" r="0.9" fill="#444"/>
<circle cx="321.3" cy="585.2" r="3.9" fill="#d9dbe6" stroke="#1a1a1a" stroke-width="1.1"/>
<circle cx="321.3" cy="585.2" r="0.9" fill="#444"/>
</svg>
<div class="pill" style="left:12px;top:12px;width:32px;height:66px;background:#6b6b6b"></div>
<div class="pill" style="left:12px;top:84px;width:32px;height:96px;background:#6b6b6b"></div>
<div class="pill" style="left:12px;top:186px;width:32px;height:126px;background:#6b6b6b"></div>
<svg class="abs" style="left:12px;top:12px" width="32" height="300" viewBox="0 0 32 300">
 <defs>
  <linearGradient id="pw" x1="0" y1="0" x2="0" y2="1"><stop offset="0" stop-color="#ffffff"/><stop offset="1" stop-color="#b9b9b9"/></linearGradient>
  <linearGradient id="pb" x1="0" y1="0" x2="1" y2="1"><stop offset="0" stop-color="#0a63d8"/><stop offset="0.6" stop-color="#2aa4ff"/><stop offset="1" stop-color="#0b5fd0"/></linearGradient>
  <linearGradient id="pk" x1="0" y1="0" x2="1" y2="0.6"><stop offset="0" stop-color="#2e2e30"/><stop offset="0.6" stop-color="#8a8a8c"/><stop offset="1" stop-color="#d8d8d8"/></linearGradient>
  <radialGradient id="pf" cx="0.4" cy="0.35" r="0.7"><stop offset="0" stop-color="#fdebd8"/><stop offset="1" stop-color="#e6c3a0"/></radialGradient>
 </defs>
 <!-- cube -->
 <path d="M9 12 L17 8 L25 11 L25 20 L16.5 24 L9 20.5 Z" fill="#9b9b9b"/>
 <path d="M9 12 L17 8 L25 11 L16.5 15 Z" fill="#c9c9c9"/>
 <path d="M16.5 15 L25 11 L25 20 L16.5 24 Z" fill="#8a8a8a"/>
 <path d="M17.5 25.2 L26.5 20.8 L27 22.4 L18 26.8 Z" fill="#111"/>
 <circle cx="7" cy="24.6" r="1.6" fill="#b5b5b5"/>
 <!-- tshirt with dot -->
 <g transform="translate(7.6 41) scale(0.8)"><path d="M6.2 2.2 L9.8 0.6 Q12 3.6 14.2 0.6 L17.8 2.2 L23 7.4 L19.6 11 L18 9.6 L18 19 L6 19 L6 9.6 L4.4 11 L1 7.4 Z" fill="url(#pw)"/><rect x="12.6" y="6.6" width="4" height="4.4" fill="none" stroke="#8f8f8f" stroke-width="1"/><path d="M9.8 1.4 Q12 4.4 14.2 1.4" stroke="#777" stroke-width="1" fill="none"/><rect x="6" y="15" width="12" height="1.6" fill="#9a9a9a"/></g>
 <circle cx="8" cy="57.6" r="2.1" fill="#1f8be8"/>
 <!-- white tshirt -->
 <g transform="translate(5.8 83.5) scale(0.85)"><path d="M6.2 2.2 L9.8 0.6 Q12 3.6 14.2 0.6 L17.8 2.2 L23 7.4 L19.6 11 L18 9.6 L18 19 L6 19 L6 9.6 L4.4 11 L1 7.4 Z" fill="url(#pw)"/></g>
 <!-- ball + tshirt -->
 <circle cx="10.5" cy="126" r="3.6" fill="#dcdcdc"/><g fill="#6b6b6b"><circle cx="9.4" cy="125" r="0.7"/><circle cx="11.6" cy="125" r="0.7"/><circle cx="9.4" cy="127.2" r="0.7"/><circle cx="11.6" cy="127.2" r="0.7"/></g>
 <path d="M12.5 123.5 L22 116.5" stroke="#9a9a9a" stroke-width="1.1"/>
 <g transform="translate(13.5 123.5) scale(0.62)"><path d="M6.2 2.2 L9.8 0.6 Q12 3.6 14.2 0.6 L17.8 2.2 L23 7.4 L19.6 11 L18 9.6 L18 19 L6 19 L6 9.6 L4.4 11 L1 7.4 Z" fill="#e2e2e2"/></g>
 <!-- avatar bust -->
 <circle cx="16.3" cy="150.5" r="4.2" fill="url(#pw)"/><path d="M8.8 163 Q9.2 157.4 13.8 156.4 L18.8 156.4 Q23.4 157.4 23.8 163 Z" fill="url(#pw)"/>
 <!-- blue roll -->
 <path d="M10 190.5 L23.5 185.5 L22.5 199.5 Q17 203.5 9 201.5 Z" fill="url(#pb)"/><ellipse cx="15.2" cy="200.8" rx="6" ry="2.3" fill="#0d62d6" stroke="#eaf4ff" stroke-width="1.3"/>
 <!-- dark fabric -->
 <path d="M8.5 222.5 L23.5 215.5 L23 228.5 Q19 232.5 16.5 231 L9 229 Z" fill="url(#pk)"/>
 <!-- face -->
 <ellipse cx="16.2" cy="251.5" rx="5.2" ry="6.2" fill="url(#pf)"/><path d="M10.5 261.5 Q12.5 258 14 256.5 H19 Q20.5 258 22.5 261.5 Z" fill="#eccba8"/>
 <!-- globe -->
 <circle cx="16" cy="282" r="8" fill="#dedede"/><path d="M8 282 H24 M9.2 278 H22.8 M9.2 286 H22.8 M16 274 V290 M12.4 274.8 Q9.8 282 12.4 289.2 M19.6 274.8 Q22.2 282 19.6 289.2" stroke="#777" stroke-width="0.8" fill="none"/>
</svg>

</div>
<div id="v2d"><svg width="915" height="939" viewBox="575 65 915 939" style="position:absolute;left:0;top:0" font-family="'Liberation Sans','Noto Sans CJK KR',sans-serif">
<path d="M590.0 65 V1004 M622.1 65 V1004 M654.2 65 V1004 M686.3 65 V1004 M718.4 65 V1004 M782.6 65 V1004 M814.7 65 V1004 M846.8 65 V1004 M878.9 65 V1004 M911.0 65 V1004 M943.1 65 V1004 M975.2 65 V1004 M1007.3 65 V1004 M1039.4 65 V1004 M1071.5 65 V1004 M1103.6 65 V1004 M1135.7 65 V1004 M1167.8 65 V1004 M1199.9 65 V1004 M1232.0 65 V1004 M1264.1 65 V1004 M1296.2 65 V1004 M1328.3 65 V1004 M1360.4 65 V1004 M1392.5 65 V1004 M1424.6 65 V1004 M1456.7 65 V1004 M1488.8 65 V1004 M575 66.9 H1490 M575 99.0 H1490 M575 131.1 H1490 M575 163.2 H1490 M575 195.3 H1490 M575 227.4 H1490 M575 259.5 H1490 M575 291.6 H1490 M575 323.7 H1490 M575 355.8 H1490 M575 387.9 H1490 M575 420.0 H1490 M575 452.1 H1490 M575 484.2 H1490 M575 516.3 H1490 M575 548.4 H1490 M575 580.5 H1490 M575 612.6 H1490 M575 644.7 H1490 M575 676.8 H1490 M575 708.9 H1490 M575 741.0 H1490 M575 773.1 H1490 M575 805.2 H1490 M575 837.3 H1490 M575 869.4 H1490 M575 933.6 H1490 M575 965.7 H1490 M575 997.8 H1490" stroke="#c0c0c0" stroke-width="1" fill="none"/>
<path d="M750.5 65 V1004 M575 901.5 H1490" stroke="#858585" stroke-width="1" fill="none"/>
<defs><clipPath id="k1"><path d="M665.6 310.4 Q734.4 297.5 803.8 311 L795.1 328.9 Q734.4 304.5 673.1 328.9 Z"/></clipPath><clipPath id="k2"><path d="M665.8 341.5 Q667.5 338.6 672.6 337.8 Q734.4 361.6 799.4 337.8 Q804.2 338.6 805.8 341.5 Q805 344.4 801.5 346.2 Q734.4 369 670 346.2 Q666.6 344.6 665.8 341.5 Z"/></clipPath><clipPath id="k3"><path d="M665.8 364.1 Q667.5 361.20000000000005 672.6 360.40000000000003 Q734.4 384.20000000000005 799.4 360.40000000000003 Q804.2 361.20000000000005 805.8 364.1 Q805 367.0 801.5 368.8 Q734.4 391.6 670 368.8 Q666.6 367.20000000000005 665.8 364.1 Z"/></clipPath><clipPath id="k4"><path d="M914.7 306.2 L954.9 295.6 Q962.9 305.1 980.2 305.6 Q996.8 305.1 1004.8 295.6 L1045.8 307 L1043.3 346.8 L917.2 346.8 Z"/></clipPath><clipPath id="k5"><path d="M917.2 388.2 L957.4 377.6 Q965.4 387.1 982.7 387.6 Q999.3 387.1 1007.3 377.6 L1048.3 389 L1045.8 428.8 L919.7 428.8 Z"/></clipPath><clipPath id="k6"><path d="M634.8 437.7 L673.1 421.5 Q675 443 691.9 449.9 L691.9 617.1 L615.5 617.1 L621.7 497.5 Q637 489 637.7 482.7 Q640.5 470 639.4 460.5 Q637 449 634.8 437.7 Z"/></clipPath><clipPath id="k7"><path d="M766.1 452.1 Q783 446 785.6 425.1 L823.7 441 Q821 452 819.3 464.3 Q818.3 476 821 486.4 Q823 494 836.5 500.8 L842.5 621.5 L766.1 621.5 Z"/></clipPath><clipPath id="k8"><path d="M899.5 457.7 L1058.4 457.7 Q1060 478 1070.9 486.2 L1078.6 605.6 Q1062 617 1044.9 622 Q1015 627 979.4 626.8 Q940 627 912 621 Q895 616 879.3 605.6 L886 486.2 Q897 478 899.5 457.7 Z"/></clipPath><clipPath id="k9"><path d="M1116.3 431.3 C1117.6 430.7 1121.8 428.9 1124.3 427.5 C1126.8 426.1 1128.9 425.5 1131.0 423.2 C1133.1 420.9 1135.0 416.7 1136.8 413.5 C1138.6 410.3 1140.1 406.3 1141.6 403.9 C1143.0 401.5 1143.9 401.0 1145.5 399.1 C1147.1 397.2 1149.1 394.1 1151.2 392.3 C1153.3 390.5 1155.8 389.2 1158.0 388.3 C1160.2 387.4 1162.3 386.9 1164.7 386.8 C1167.1 386.7 1169.8 386.9 1172.4 387.8 C1175.0 388.7 1177.5 390.3 1180.1 392.3 C1182.7 394.3 1185.7 397.4 1187.9 400.0 C1190.2 402.6 1192.0 405.6 1193.6 407.8 C1195.2 410.1 1196.2 411.7 1197.5 413.5 C1198.8 415.3 1200.0 416.8 1201.3 418.4 C1202.6 420.0 1203.6 421.7 1205.2 423.2 C1206.8 424.7 1208.5 426.1 1211.0 427.5 C1213.5 428.9 1218.5 430.8 1220.0 431.5 L1208.7 560.7 Q1168 557 1128.1 560.7 Z"/></clipPath><clipPath id="k10"><path d="M1286.0 433.5 C1287.3 432.9 1291.5 431.1 1294.0 429.7 C1296.5 428.3 1298.6 427.7 1300.7 425.4 C1302.8 423.1 1304.7 418.9 1306.5 415.7 C1308.3 412.5 1309.8 408.5 1311.3 406.1 C1312.8 403.7 1313.6 403.2 1315.2 401.3 C1316.8 399.4 1318.8 396.3 1320.9 394.5 C1323.0 392.7 1325.5 391.4 1327.7 390.5 C1330.0 389.6 1332.0 389.1 1334.4 389.0 C1336.8 388.9 1339.5 389.1 1342.1 390.0 C1344.7 390.9 1347.2 392.5 1349.8 394.5 C1352.4 396.5 1355.4 399.6 1357.6 402.2 C1359.9 404.8 1361.7 407.8 1363.3 410.0 C1364.9 412.2 1365.9 413.9 1367.2 415.7 C1368.5 417.5 1369.7 419.0 1371.0 420.6 C1372.3 422.2 1373.3 423.9 1374.9 425.4 C1376.5 426.9 1378.2 428.3 1380.7 429.7 C1383.2 431.1 1388.2 433.0 1389.7 433.7 L1378.4 562.9000000000001 Q1337.7 559.2 1297.8 562.9000000000001 Z"/></clipPath><clipPath id="k11"><path d="M1131.7 583.8 H1204.1 V617.1 H1131.7 Z"/></clipPath><clipPath id="k12"><path d="M1302.4 587.2 H1373.9 V619.7 H1302.4 Z"/></clipPath></defs>
<g opacity="0.55"><rect x="918" y="151" width="177" height="22" fill="#c3d2e2"/><rect x="918" y="151" width="22" height="22" fill="#bccbdc"/><circle cx="929" cy="162" r="2.6" fill="#c9a8a8"/><text x="950" y="166.5" font-size="12.5" fill="#a9adb3">사각형 캡처(R)</text></g>
<path d="M665.6 310.4 Q734.4 297.5 803.8 311 L795.1 328.9 Q734.4 304.5 673.1 328.9 Z" fill="#f2ceb0"/>
<g clip-path="url(#k1)"><path d="M672.0 300.0 C672.0 300.9 672.3 303.6 672.3 305.3 C672.3 307.1 672.0 308.9 671.9 310.7 C671.8 312.4 671.7 314.2 671.7 316.0 C671.8 317.8 672.1 319.6 672.1 321.3 C672.2 323.1 672.3 324.9 672.2 326.7 C672.2 328.4 671.9 331.1 671.8 332.0 M680.5 300.0 C680.5 300.9 680.5 303.6 680.5 305.3 C680.4 307.1 680.1 308.9 680.0 310.7 C680.0 312.4 680.1 314.2 680.2 316.0 C680.3 317.8 680.6 319.6 680.6 321.3 C680.6 323.1 680.4 324.9 680.3 326.7 C680.2 328.4 680.1 331.1 680.0 332.0 M688.9 300.0 C688.8 300.9 688.6 303.6 688.5 305.3 C688.4 307.1 688.3 308.9 688.3 310.7 C688.4 312.4 688.7 314.2 688.8 316.0 C688.9 317.8 688.9 319.6 688.8 321.3 C688.8 323.1 688.4 324.9 688.4 326.7 C688.3 328.4 688.4 331.1 688.4 332.0 M697.0 300.0 C697.0 300.9 696.6 303.6 696.6 305.3 C696.6 307.1 696.7 308.9 696.8 310.7 C696.9 312.4 697.2 314.2 697.2 316.0 C697.2 317.8 697.0 319.6 696.9 321.3 C696.8 323.1 696.6 324.9 696.6 326.7 C696.6 328.4 696.9 331.1 697.0 332.0 M705.1 300.0 C705.0 300.9 704.9 303.6 705.0 305.3 C705.0 307.1 705.3 308.9 705.4 310.7 C705.5 312.4 705.5 314.2 705.4 316.0 C705.3 317.8 705.0 319.6 705.0 321.3 C704.9 323.1 705.0 324.9 705.1 326.7 C705.2 328.4 705.4 331.1 705.5 332.0 M713.2 300.0 C713.3 300.9 713.4 303.6 713.5 305.3 C713.6 307.1 713.8 308.9 713.8 310.7 C713.8 312.4 713.5 314.2 713.4 316.0 C713.4 317.8 713.2 319.6 713.2 321.3 C713.2 323.1 713.5 324.9 713.6 326.7 C713.7 328.4 713.7 331.1 713.8 332.0 M721.6 300.0 C721.6 300.9 722.0 303.6 722.0 305.3 C722.1 307.1 722.1 308.9 722.0 310.7 C721.9 312.4 721.6 314.2 721.5 316.0 C721.5 317.8 721.6 319.6 721.7 321.3 C721.8 323.1 722.1 324.9 722.1 326.7 C722.1 328.4 721.9 331.1 721.8 332.0 M730.1 300.0 C730.2 300.9 730.4 303.6 730.4 305.3 C730.4 307.1 730.1 308.9 730.0 310.7 C729.9 312.4 729.8 314.2 729.8 316.0 C729.9 317.8 730.2 319.6 730.3 321.3 C730.3 323.1 730.4 324.9 730.3 326.7 C730.3 328.4 730.0 331.1 729.9 332.0 M738.6 300.0 C738.6 300.9 738.6 303.6 738.6 305.3 C738.5 307.1 738.2 308.9 738.1 310.7 C738.1 312.4 738.2 314.2 738.3 316.0 C738.4 317.8 738.7 319.6 738.7 321.3 C738.7 323.1 738.5 324.9 738.4 326.7 C738.3 328.4 738.2 331.1 738.1 332.0 M747.0 300.0 C746.9 300.9 746.7 303.6 746.6 305.3 C746.5 307.1 746.4 308.9 746.4 310.7 C746.5 312.4 746.8 314.2 746.9 316.0 C747.0 317.8 747.0 319.6 746.9 321.3 C746.8 323.1 746.5 324.9 746.5 326.7 C746.4 328.4 746.5 331.1 746.5 332.0 M755.1 300.0 C755.1 300.9 754.7 303.6 754.7 305.3 C754.7 307.1 754.9 308.9 755.0 310.7 C755.0 312.4 755.3 314.2 755.3 316.0 C755.3 317.8 755.1 319.6 755.0 321.3 C754.9 323.1 754.7 324.9 754.7 326.7 C754.7 328.4 755.0 331.1 755.1 332.0 M763.2 300.0 C763.1 300.9 763.0 303.6 763.1 305.3 C763.1 307.1 763.4 308.9 763.5 310.7 C763.6 312.4 763.6 314.2 763.5 316.0 C763.4 317.8 763.1 319.6 763.0 321.3 C763.0 323.1 763.1 324.9 763.2 326.7 C763.3 328.4 763.5 331.1 763.6 332.0 M771.3 300.0 C771.4 300.9 771.5 303.6 771.6 305.3 C771.7 307.1 771.9 308.9 771.9 310.7 C771.9 312.4 771.6 314.2 771.5 316.0 C771.4 317.8 771.3 319.6 771.3 321.3 C771.3 323.1 771.6 324.9 771.7 326.7 C771.8 328.4 771.8 331.1 771.9 332.0 M779.7 300.0 C779.7 300.9 780.1 303.6 780.1 305.3 C780.2 307.1 780.2 308.9 780.1 310.7 C780.0 312.4 779.7 314.2 779.6 316.0 C779.6 317.8 779.7 319.6 779.8 321.3 C779.9 323.1 780.2 324.9 780.2 326.7 C780.2 328.4 780.0 331.1 779.9 332.0 M788.2 300.0 C788.3 300.9 788.5 303.6 788.5 305.3 C788.5 307.1 788.2 308.9 788.1 310.7 C788.0 312.4 787.9 314.2 787.9 316.0 C788.0 317.8 788.3 319.6 788.4 321.3 C788.4 323.1 788.5 324.9 788.4 326.7 C788.4 328.4 788.1 331.1 788.0 332.0 M796.7 300.0 C796.7 300.9 796.7 303.6 796.6 305.3 C796.6 307.1 796.3 308.9 796.2 310.7 C796.2 312.4 796.3 314.2 796.4 316.0 C796.5 317.8 796.8 319.6 796.8 321.3 C796.8 323.1 796.6 324.9 796.5 326.7 C796.4 328.4 796.3 331.1 796.2 332.0" stroke="#7a78a8" stroke-width="2" fill="none"/></g>
<path d="M673.1 328.9 L665.6 310.4 Q734.4 297.5 803.8 311 L795.1 328.9" fill="none" stroke="#c98a45" stroke-width="1.5" stroke-linejoin="round"/>
<path d="M673.1 328.9 Q734.4 304.5 795.1 328.9" fill="none" stroke="#3a8f8d" stroke-width="2.2"/>
<circle cx="734.4" cy="316.6" r="1.6" fill="#8fb8e8"/><circle cx="673.3" cy="328.6" r="1.3" fill="#333"/><circle cx="795" cy="328.6" r="1.3" fill="#333"/>
<path d="M665.8 341.5 Q667.5 338.6 672.6 337.8 Q734.4 361.6 799.4 337.8 Q804.2 338.6 805.8 341.5 Q805 344.4 801.5 346.2 Q734.4 369 670 346.2 Q666.6 344.6 665.8 341.5 Z" fill="#f2ceb0"/><g clip-path="url(#k2)"><path d="M672.0 335.0 C672.0 335.8 672.2 338.2 672.2 339.8 C672.2 341.4 672.0 343.1 671.9 344.7 C671.9 346.3 671.8 347.9 671.8 349.5 C671.8 351.1 672.0 352.7 672.1 354.3 C672.2 355.9 672.2 357.6 672.2 359.2 C672.1 360.8 671.9 363.2 671.9 364.0 M680.5 335.0 C680.4 335.8 680.5 338.2 680.4 339.8 C680.3 341.4 680.1 343.1 680.1 344.7 C680.1 346.3 680.2 347.9 680.2 349.5 C680.3 351.1 680.5 352.7 680.5 354.3 C680.5 355.9 680.4 357.6 680.3 359.2 C680.2 360.8 680.1 363.2 680.1 364.0 M688.8 335.0 C688.8 335.8 688.6 338.2 688.5 339.8 C688.5 341.4 688.4 343.1 688.4 344.7 C688.5 346.3 688.7 347.9 688.7 349.5 C688.8 351.1 688.8 352.7 688.7 354.3 C688.7 355.9 688.5 357.6 688.4 359.2 C688.4 360.8 688.5 363.2 688.5 364.0 M697.0 335.0 C696.9 335.8 696.7 338.2 696.7 339.8 C696.7 341.4 696.8 343.1 696.9 344.7 C696.9 346.3 697.1 347.9 697.1 349.5 C697.1 351.1 697.0 352.7 696.9 354.3 C696.8 355.9 696.7 357.6 696.7 359.2 C696.7 360.8 696.9 363.2 697.0 364.0 M705.1 335.0 C705.1 335.8 705.0 338.2 705.0 339.8 C705.1 341.4 705.3 343.1 705.3 344.7 C705.4 346.3 705.4 347.9 705.3 349.5 C705.3 351.1 705.1 352.7 705.0 354.3 C705.0 355.9 705.1 357.6 705.1 359.2 C705.2 360.8 705.3 363.2 705.4 364.0 M713.3 335.0 C713.3 335.8 713.4 338.2 713.5 339.8 C713.5 341.4 713.7 343.1 713.7 344.7 C713.7 346.3 713.5 347.9 713.5 349.5 C713.4 351.1 713.3 352.7 713.3 354.3 C713.3 355.9 713.5 357.6 713.6 359.2 C713.6 360.8 713.7 363.2 713.7 364.0 M721.6 335.0 C721.7 335.8 721.9 338.2 721.9 339.8 C722.0 341.4 722.0 343.1 721.9 344.7 C721.9 346.3 721.7 347.9 721.6 349.5 C721.6 351.1 721.7 352.7 721.7 354.3 C721.8 355.9 722.0 357.6 722.0 359.2 C722.0 360.8 721.9 363.2 721.8 364.0 M730.1 335.0 C730.1 335.8 730.3 338.2 730.3 339.8 C730.3 341.4 730.1 343.1 730.0 344.7 C730.0 346.3 729.9 347.9 729.9 349.5 C729.9 351.1 730.1 352.7 730.2 354.3 C730.3 355.9 730.3 357.6 730.3 359.2 C730.2 360.8 730.0 363.2 730.0 364.0 M738.6 335.0 C738.5 335.8 738.6 338.2 738.5 339.8 C738.4 341.4 738.2 343.1 738.2 344.7 C738.2 346.3 738.3 347.9 738.3 349.5 C738.4 351.1 738.6 352.7 738.6 354.3 C738.6 355.9 738.5 357.6 738.4 359.2 C738.3 360.8 738.2 363.2 738.2 364.0 M746.9 335.0 C746.8 335.8 746.7 338.2 746.6 339.8 C746.6 341.4 746.5 343.1 746.5 344.7 C746.6 346.3 746.8 347.9 746.8 349.5 C746.9 351.1 746.9 352.7 746.8 354.3 C746.8 355.9 746.6 357.6 746.5 359.2 C746.5 360.8 746.6 363.2 746.6 364.0 M755.1 335.0 C755.0 335.8 754.8 338.2 754.8 339.8 C754.8 341.4 754.9 343.1 755.0 344.7 C755.0 346.3 755.2 347.9 755.2 349.5 C755.2 351.1 755.0 352.7 755.0 354.3 C754.9 355.9 754.8 357.6 754.8 359.2 C754.8 360.8 755.0 363.2 755.1 364.0 M763.2 335.0 C763.2 335.8 763.1 338.2 763.1 339.8 C763.2 341.4 763.4 343.1 763.4 344.7 C763.5 346.3 763.5 347.9 763.4 349.5 C763.4 351.1 763.2 352.7 763.1 354.3 C763.1 355.9 763.2 357.6 763.2 359.2 C763.3 360.8 763.4 363.2 763.5 364.0 M771.4 335.0 C771.4 335.8 771.5 338.2 771.6 339.8 C771.7 341.4 771.8 343.1 771.8 344.7 C771.8 346.3 771.6 347.9 771.6 349.5 C771.5 351.1 771.4 352.7 771.4 354.3 C771.4 355.9 771.6 357.6 771.7 359.2 C771.7 360.8 771.8 363.2 771.8 364.0 M779.7 335.0 C779.8 335.8 780.0 338.2 780.0 339.8 C780.1 341.4 780.1 343.1 780.0 344.7 C780.0 346.3 779.8 347.9 779.7 349.5 C779.7 351.1 779.8 352.7 779.8 354.3 C779.9 355.9 780.1 357.6 780.1 359.2 C780.1 360.8 779.9 363.2 779.9 364.0 M788.2 335.0 C788.2 335.8 788.4 338.2 788.4 339.8 C788.4 341.4 788.2 343.1 788.1 344.7 C788.1 346.3 788.0 347.9 788.0 349.5 C788.0 351.1 788.2 352.7 788.3 354.3 C788.4 355.9 788.4 357.6 788.4 359.2 C788.3 360.8 788.1 363.2 788.1 364.0 M796.7 335.0 C796.7 335.8 796.7 338.2 796.6 339.8 C796.5 341.4 796.3 343.1 796.3 344.7 C796.3 346.3 796.4 347.9 796.5 349.5 C796.5 351.1 796.7 352.7 796.7 354.3 C796.7 355.9 796.6 357.6 796.5 359.2 C796.4 360.8 796.3 363.2 796.3 364.0" stroke="#7a78a8" stroke-width="1.9" fill="none"/><path d="M664 342 L671 336 L675.5 341.5 L670 348 Z" fill="#8d8d8d"/><path d="M807.6 342 L800.6 336 L796 341.5 L801.6 348 Z" fill="#9a8f45"/></g><path d="M665.8 341.5 Q667.5 338.6 672.6 337.8 Q734.4 361.6 799.4 337.8 Q804.2 338.6 805.8 341.5 Q805 344.4 801.5 346.2 Q734.4 369 670 346.2 Q666.6 344.6 665.8 341.5 Z" fill="none" stroke="#33241c" stroke-width="1.7" stroke-linejoin="round"/>
<path d="M665.8 364.1 Q667.5 361.20000000000005 672.6 360.40000000000003 Q734.4 384.20000000000005 799.4 360.40000000000003 Q804.2 361.20000000000005 805.8 364.1 Q805 367.0 801.5 368.8 Q734.4 391.6 670 368.8 Q666.6 367.20000000000005 665.8 364.1 Z" fill="#f2ceb0"/><g clip-path="url(#k3)"><path d="M672.0 357.6 C672.0 358.4 672.2 360.8 672.2 362.4 C672.2 364.0 672.0 365.7 671.9 367.3 C671.9 368.9 671.8 370.5 671.8 372.1 C671.8 373.7 672.0 375.3 672.1 376.9 C672.2 378.5 672.2 380.2 672.2 381.8 C672.1 383.4 671.9 385.8 671.9 386.6 M680.5 357.6 C680.4 358.4 680.5 360.8 680.4 362.4 C680.3 364.0 680.1 365.7 680.1 367.3 C680.1 368.9 680.2 370.5 680.2 372.1 C680.3 373.7 680.5 375.3 680.5 376.9 C680.5 378.5 680.4 380.2 680.3 381.8 C680.2 383.4 680.1 385.8 680.1 386.6 M688.8 357.6 C688.8 358.4 688.6 360.8 688.5 362.4 C688.5 364.0 688.4 365.7 688.4 367.3 C688.5 368.9 688.7 370.5 688.7 372.1 C688.8 373.7 688.8 375.3 688.7 376.9 C688.7 378.5 688.5 380.2 688.4 381.8 C688.4 383.4 688.5 385.8 688.5 386.6 M697.0 357.6 C696.9 358.4 696.7 360.8 696.7 362.4 C696.7 364.0 696.8 365.7 696.9 367.3 C696.9 368.9 697.1 370.5 697.1 372.1 C697.1 373.7 697.0 375.3 696.9 376.9 C696.8 378.5 696.7 380.2 696.7 381.8 C696.7 383.4 696.9 385.8 697.0 386.6 M705.1 357.6 C705.1 358.4 705.0 360.8 705.0 362.4 C705.1 364.0 705.3 365.7 705.3 367.3 C705.4 368.9 705.4 370.5 705.3 372.1 C705.3 373.7 705.1 375.3 705.0 376.9 C705.0 378.5 705.1 380.2 705.1 381.8 C705.2 383.4 705.3 385.8 705.4 386.6 M713.3 357.6 C713.3 358.4 713.4 360.8 713.5 362.4 C713.5 364.0 713.7 365.7 713.7 367.3 C713.7 368.9 713.5 370.5 713.5 372.1 C713.4 373.7 713.3 375.3 713.3 376.9 C713.3 378.5 713.5 380.2 713.6 381.8 C713.6 383.4 713.7 385.8 713.7 386.6 M721.6 357.6 C721.7 358.4 721.9 360.8 721.9 362.4 C722.0 364.0 722.0 365.7 721.9 367.3 C721.9 368.9 721.7 370.5 721.6 372.1 C721.6 373.7 721.7 375.3 721.7 376.9 C721.8 378.5 722.0 380.2 722.0 381.8 C722.0 383.4 721.9 385.8 721.8 386.6 M730.1 357.6 C730.1 358.4 730.3 360.8 730.3 362.4 C730.3 364.0 730.1 365.7 730.0 367.3 C730.0 368.9 729.9 370.5 729.9 372.1 C729.9 373.7 730.1 375.3 730.2 376.9 C730.3 378.5 730.3 380.2 730.3 381.8 C730.2 383.4 730.0 385.8 730.0 386.6 M738.6 357.6 C738.5 358.4 738.6 360.8 738.5 362.4 C738.4 364.0 738.2 365.7 738.2 367.3 C738.2 368.9 738.3 370.5 738.3 372.1 C738.4 373.7 738.6 375.3 738.6 376.9 C738.6 378.5 738.5 380.2 738.4 381.8 C738.3 383.4 738.2 385.8 738.2 386.6 M746.9 357.6 C746.8 358.4 746.7 360.8 746.6 362.4 C746.6 364.0 746.5 365.7 746.5 367.3 C746.6 368.9 746.8 370.5 746.8 372.1 C746.9 373.7 746.9 375.3 746.8 376.9 C746.8 378.5 746.6 380.2 746.5 381.8 C746.5 383.4 746.6 385.8 746.6 386.6 M755.1 357.6 C755.0 358.4 754.8 360.8 754.8 362.4 C754.8 364.0 754.9 365.7 755.0 367.3 C755.0 368.9 755.2 370.5 755.2 372.1 C755.2 373.7 755.0 375.3 755.0 376.9 C754.9 378.5 754.8 380.2 754.8 381.8 C754.8 383.4 755.0 385.8 755.1 386.6 M763.2 357.6 C763.2 358.4 763.1 360.8 763.1 362.4 C763.2 364.0 763.4 365.7 763.4 367.3 C763.5 368.9 763.5 370.5 763.4 372.1 C763.4 373.7 763.2 375.3 763.1 376.9 C763.1 378.5 763.2 380.2 763.2 381.8 C763.3 383.4 763.4 385.8 763.5 386.6 M771.4 357.6 C771.4 358.4 771.5 360.8 771.6 362.4 C771.7 364.0 771.8 365.7 771.8 367.3 C771.8 368.9 771.6 370.5 771.6 372.1 C771.5 373.7 771.4 375.3 771.4 376.9 C771.4 378.5 771.6 380.2 771.7 381.8 C771.7 383.4 771.8 385.8 771.8 386.6 M779.7 357.6 C779.8 358.4 780.0 360.8 780.0 362.4 C780.1 364.0 780.1 365.7 780.0 367.3 C780.0 368.9 779.8 370.5 779.7 372.1 C779.7 373.7 779.8 375.3 779.8 376.9 C779.9 378.5 780.1 380.2 780.1 381.8 C780.1 383.4 779.9 385.8 779.9 386.6 M788.2 357.6 C788.2 358.4 788.4 360.8 788.4 362.4 C788.4 364.0 788.2 365.7 788.1 367.3 C788.1 368.9 788.0 370.5 788.0 372.1 C788.0 373.7 788.2 375.3 788.3 376.9 C788.4 378.5 788.4 380.2 788.4 381.8 C788.3 383.4 788.1 385.8 788.1 386.6 M796.7 357.6 C796.7 358.4 796.7 360.8 796.6 362.4 C796.5 364.0 796.3 365.7 796.3 367.3 C796.3 368.9 796.4 370.5 796.5 372.1 C796.5 373.7 796.7 375.3 796.7 376.9 C796.7 378.5 796.6 380.2 796.5 381.8 C796.4 383.4 796.3 385.8 796.3 386.6" stroke="#7a78a8" stroke-width="1.9" fill="none"/><path d="M664 364.6 L671 358.6 L675.5 364.1 L670 370.6 Z" fill="#c8643c"/><path d="M807.6 364.6 L800.6 358.6 L796 364.1 L801.6 370.6 Z" fill="#c8643c"/></g><path d="M665.8 364.1 Q667.5 361.20000000000005 672.6 360.40000000000003 Q734.4 384.20000000000005 799.4 360.40000000000003 Q804.2 361.20000000000005 805.8 364.1 Q805 367.0 801.5 368.8 Q734.4 391.6 670 368.8 Q666.6 367.20000000000005 665.8 364.1 Z" fill="none" stroke="#33241c" stroke-width="1.7" stroke-linejoin="round"/>
<text x="701" y="305.3" font-size="13" font-weight="700" fill="#1a1a1a" text-anchor="start" textLength="58" lengthAdjust="spacingAndGlyphs">베이직셔츠</text><text x="701" y="315.7" font-size="13" font-weight="700" fill="#1a1a1a" text-anchor="start" textLength="58" lengthAdjust="spacingAndGlyphs">20220511</text>
<text transform="translate(771.5 341) rotate(-90)" font-size="11.5" font-weight="700" fill="#1a1a1a">뒤중심</text>
<text x="702" y="346.6" font-size="13" font-weight="700" fill="#1a1a1a" text-anchor="start" textLength="58" lengthAdjust="spacingAndGlyphs">베이직셔츠</text>
<text x="702" y="353.5" font-size="8" font-weight="700" fill="#4a3a2c" textLength="50" opacity="0.85">20220511</text>
<text x="702" y="369" font-size="13" font-weight="700" fill="#1a1a1a" text-anchor="start" textLength="58" lengthAdjust="spacingAndGlyphs">베이직셔츠</text>
<text x="702" y="376" font-size="8" font-weight="700" fill="#4a3a2c" textLength="50" opacity="0.85">20220511</text>
<text transform="translate(763.5 417) rotate(-90)" font-size="13.2" font-weight="700" fill="#1a1a1a">뒤중심</text>
<text transform="translate(763 369) rotate(-90)" font-size="11" font-weight="700" fill="#1a1a1a">심</text>
<path d="M981 347 L982.5 387" stroke="#8d9aa8" stroke-width="1"/>
<path d="M914.7 306.2 L954.9 295.6 Q962.9 305.1 980.2 305.6 Q996.8 305.1 1004.8 295.6 L1045.8 307 L1043.3 346.8 L917.2 346.8 Z" fill="none" stroke="#a9dcb9" stroke-width="8" stroke-linejoin="round" opacity="0.85"/><path d="M914.7 306.2 L954.9 295.6 Q962.9 305.1 980.2 305.6 Q996.8 305.1 1004.8 295.6 L1045.8 307 L1043.3 346.8 L917.2 346.8 Z" fill="#f2ceb0"/><g clip-path="url(#k4)"><path d="M910.0 300.5 C913.9 300.6 925.6 301.3 933.3 301.3 C941.1 301.2 948.9 300.2 956.7 300.0 C964.4 299.8 972.2 299.8 980.0 300.1 C987.8 300.3 995.6 301.2 1003.3 301.3 C1011.1 301.3 1018.9 300.7 1026.7 300.4 C1034.4 300.2 1046.1 299.9 1050.0 299.8 M910.0 309.4 C913.9 309.2 925.6 308.8 933.3 308.6 C941.1 308.3 948.9 307.8 956.7 307.9 C964.4 308.0 972.2 308.9 980.0 309.1 C987.8 309.3 995.6 309.2 1003.3 309.0 C1011.1 308.8 1018.9 307.9 1026.7 307.8 C1034.4 307.8 1046.1 308.6 1050.0 308.7 M910.0 317.1 C913.9 316.9 925.6 316.0 933.3 315.9 C941.1 315.9 948.9 316.5 956.7 316.8 C964.4 317.0 972.2 317.5 980.0 317.4 C987.8 317.3 995.6 316.3 1003.3 316.1 C1011.1 316.0 1018.9 316.1 1026.7 316.3 C1034.4 316.6 1046.1 317.3 1050.0 317.5 M910.0 324.2 C913.9 324.3 925.6 324.2 933.3 324.4 C941.1 324.7 948.9 325.6 956.7 325.6 C964.4 325.6 972.2 324.9 980.0 324.7 C987.8 324.4 995.6 324.0 1003.3 324.1 C1011.1 324.2 1018.9 325.2 1026.7 325.4 C1034.4 325.6 1046.1 325.2 1050.0 325.1 M910.0 332.2 C913.9 332.4 925.6 333.3 933.3 333.5 C941.1 333.7 948.9 333.5 956.7 333.2 C964.4 333.0 972.2 332.1 980.0 332.1 C987.8 332.1 995.6 332.8 1003.3 333.1 C1011.1 333.3 1018.9 333.7 1026.7 333.6 C1034.4 333.4 1046.1 332.5 1050.0 332.3 M910.0 341.2 C913.9 341.3 925.6 341.8 933.3 341.7 C941.1 341.6 948.9 340.5 956.7 340.4 C964.4 340.2 972.2 340.5 980.0 340.7 C987.8 340.9 995.6 341.8 1003.3 341.8 C1011.1 341.8 1018.9 341.0 1026.7 340.8 C1034.4 340.5 1046.1 340.4 1050.0 340.3" stroke="#7a78a8" stroke-width="2.4" fill="none"/></g><path d="M980.2 346.8 L917.2 346.8 L914.7 306.2 L954.9 295.6 Q962.9 305.1 980.2 305.6" fill="none" stroke="#8fe0a0" stroke-width="2.2" stroke-linejoin="round"/><path d="M917.2 346.8 L980.2 346.8" stroke="#6e6a64" stroke-width="1.3"/><path d="M914.7 306.2 L954.9 295.6" stroke="#77736c" stroke-width="1.2"/><path d="M980.2 305.6 Q996.8 305.1 1004.8 295.6" fill="none" stroke="#49c25a" stroke-width="2.4"/><path d="M1004.8 295.6 L1045.8 307" stroke="#3a3632" stroke-width="1.5"/><path d="M1045.8 307 L1043.3 346.8" stroke="#49c25a" stroke-width="2.4"/><path d="M1043.3 346.8 L980.2 346.8" stroke="#3a3632" stroke-width="1.7"/><path d="M980.2 305.6 V346.8" stroke="#9cc4ee" stroke-width="2"/><path d="M980.2 304.6 V347.8" stroke="#141414" stroke-width="2" stroke-dasharray="4 3.5"/><text x="950.5" y="327.5" font-size="14" font-weight="700" fill="#3a2c20" textLength="35" lengthAdjust="spacingAndGlyphs">뒷요크</text><text x="980.5" y="308.5" font-size="13" font-weight="700" fill="#2a221c" textLength="59" lengthAdjust="spacingAndGlyphs">베이직셔츠</text><text x="982" y="318.5" font-size="13" font-weight="700" fill="#2a221c" textLength="58" lengthAdjust="spacingAndGlyphs">20220511</text><text transform="translate(1008.5 365) rotate(-90)" font-size="11" font-weight="700" fill="#2a221c">뒤중심</text>
<path d="M917.2 388.2 L957.4 377.6 Q965.4 387.1 982.7 387.6 Q999.3 387.1 1007.3 377.6 L1048.3 389 L1045.8 428.8 L919.7 428.8 Z" fill="none" stroke="#a9dcb9" stroke-width="8" stroke-linejoin="round" opacity="0.85"/><path d="M917.2 388.2 L957.4 377.6 Q965.4 387.1 982.7 387.6 Q999.3 387.1 1007.3 377.6 L1048.3 389 L1045.8 428.8 L919.7 428.8 Z" fill="#f2ceb0"/><g clip-path="url(#k5)"><path d="M812.9 372 Q842.9 394 874.9 434 M824.1 372 Q854.1 394 886.1 434 M835.3 372 Q865.3 394 897.3 434 M846.5 372 Q876.5 394 908.5 434 M857.7 372 Q887.7 394 919.7 434 M868.9 372 Q898.9 394 930.9 434 M880.1 372 Q910.1 394 942.1 434 M891.3 372 Q921.3 394 953.3 434 M902.5 372 Q932.5 394 964.5 434 M913.7 372 Q943.7 394 975.7 434 M924.9 372 Q954.9 394 986.9 434 M936.1 372 Q966.1 394 998.1 434 M947.3 372 Q977.3 394 1009.3 434 M958.5 372 Q988.5 394 1020.5 434 M969.7 372 Q999.7 394 1031.7 434 M980.9 372 Q1010.9 394 1042.9 434 M992.1 372 Q1022.1 394 1054.1 434 M1003.3 372 Q1033.3 394 1065.3 434 M1014.5 372 Q1044.5 394 1076.5 434 M1025.7 372 Q1055.7 394 1087.7 434 M1036.9 372 Q1066.9 394 1098.9 434 M1048.1 372 Q1078.1 394 1110.1 434 M1059.3 372 Q1089.3 394 1121.3 434 M1070.5 372 Q1100.5 394 1132.5 434 M1081.7 372 Q1111.7 394 1143.7 434 M1092.9 372 Q1122.9 394 1154.9 434 M1104.1 372 Q1134.1 394 1166.1 434 M1115.3 372 Q1145.3 394 1177.3 434 M1126.5 372 Q1156.5 394 1188.5 434 M1137.7 372 Q1167.7 394 1199.7 434 M1148.9 372 Q1178.9 394 1210.9 434 M1160.1 372 Q1190.1 394 1222.1 434" stroke="#7a78a8" stroke-width="2.4" fill="none"/></g><path d="M982.7 428.8 L919.7 428.8 L917.2 388.2 L957.4 377.6" fill="none" stroke="#6e6a64" stroke-width="1.6" stroke-linejoin="round"/><path d="M957.4 377.6 Q965.4 387.1 982.7 387.6" fill="none" stroke="#8fe0a0" stroke-width="2.4"/><path d="M982.7 387.6 Q999.3 387.1 1007.3 377.6" fill="none" stroke="#49c25a" stroke-width="2.4"/><path d="M1007.3 377.6 L1048.3 389" stroke="#3a3632" stroke-width="1.5"/><path d="M1048.3 389 L1045.8 428.8" stroke="#3a3632" stroke-width="1.6"/><path d="M1045.8 428.8 L982.7 428.8" stroke="#3a3632" stroke-width="1.7"/><path d="M982.7 387.6 V428.8" stroke="#9cc4ee" stroke-width="2"/><path d="M982.7 386.6 V429.8" stroke="#141414" stroke-width="2" stroke-dasharray="4 3.5"/><text x="953.0" y="409.5" font-size="14" font-weight="700" fill="#3a2c20" textLength="35" lengthAdjust="spacingAndGlyphs">뒷요크</text><text x="983.0" y="390.5" font-size="13" font-weight="700" fill="#2a221c" textLength="59" lengthAdjust="spacingAndGlyphs">베이직셔츠</text><text x="984.5" y="400.5" font-size="13" font-weight="700" fill="#2a221c" textLength="58" lengthAdjust="spacingAndGlyphs">20220511</text><text transform="translate(1011.0 447) rotate(-90)" font-size="11" font-weight="700" fill="#2a221c">뒤중심</text>
<path d="M634.8 437.7 L673.1 421.5 Q675 443 691.9 449.9 L691.9 617.1 L615.5 617.1 L621.7 497.5 Q637 489 637.7 482.7 Q640.5 470 639.4 460.5 Q637 449 634.8 437.7 Z" fill="none" stroke="#7fa9d8" stroke-width="10" stroke-linejoin="round"/>
<rect x="691" y="449" width="10" height="170" fill="#7fa9d8"/>
<path d="M634.8 437.7 L673.1 421.5 Q675 443 691.9 449.9 L691.9 617.1 L615.5 617.1 L621.7 497.5 Q637 489 637.7 482.7 Q640.5 470 639.4 460.5 Q637 449 634.8 437.7 Z" fill="#f6f7fe"/>
<g clip-path="url(#k6)"><path d="M621.5 418.0 C621.6 423.6 622.4 440.4 622.4 451.7 C622.4 462.9 621.6 474.1 621.3 485.3 C621.0 496.6 620.6 507.8 620.7 519.0 C620.8 530.2 621.7 541.4 621.9 552.7 C622.2 563.9 622.4 575.1 622.2 586.3 C622.0 597.6 621.1 614.4 620.9 620.0 M630.6 418.0 C630.5 423.6 630.6 440.4 630.3 451.7 C630.1 462.9 629.1 474.1 629.0 485.3 C628.9 496.6 629.3 507.8 629.6 519.0 C629.9 530.2 630.7 541.4 630.7 552.7 C630.8 563.9 630.2 575.1 629.9 586.3 C629.6 597.6 629.1 614.4 629.0 620.0 M639.1 418.0 C638.9 423.6 638.2 440.4 637.9 451.7 C637.6 462.9 637.3 474.1 637.4 485.3 C637.5 496.6 638.5 507.8 638.7 519.0 C639.0 530.2 639.1 541.4 638.9 552.7 C638.7 563.9 637.7 575.1 637.5 586.3 C637.3 597.6 637.7 614.4 637.7 620.0 M646.9 418.0 C646.7 423.6 645.8 440.4 645.7 451.7 C645.6 462.9 646.1 474.1 646.4 485.3 C646.7 496.6 647.4 507.8 647.4 519.0 C647.5 530.2 646.8 541.4 646.5 552.7 C646.2 563.9 645.6 575.1 645.7 586.3 C645.7 597.6 646.6 614.4 646.8 620.0 M654.5 418.0 C654.4 423.6 654.0 440.4 654.2 451.7 C654.3 462.9 655.3 474.1 655.5 485.3 C655.7 496.6 655.7 507.8 655.5 519.0 C655.3 530.2 654.3 541.4 654.2 552.7 C654.0 563.9 654.2 575.1 654.5 586.3 C654.8 597.6 655.5 614.4 655.7 620.0 M662.4 418.0 C662.5 423.6 662.9 440.4 663.2 451.7 C663.5 462.9 664.2 474.1 664.1 485.3 C664.1 496.6 663.4 507.8 663.1 519.0 C662.8 530.2 662.3 541.4 662.4 552.7 C662.5 563.9 663.4 575.1 663.6 586.3 C663.9 597.6 663.9 614.4 664.0 620.0 M670.9 418.0 C671.1 423.6 672.1 440.4 672.3 451.7 C672.5 462.9 672.4 474.1 672.1 485.3 C671.9 496.6 670.9 507.8 670.8 519.0 C670.7 530.2 671.0 541.4 671.3 552.7 C671.6 563.9 672.4 575.1 672.5 586.3 C672.5 597.6 671.8 614.4 671.7 620.0 M680.0 418.0 C680.1 423.6 680.9 440.4 680.8 451.7 C680.8 462.9 680.0 474.1 679.7 485.3 C679.4 496.6 679.0 507.8 679.1 519.0 C679.2 530.2 680.2 541.4 680.4 552.7 C680.7 563.9 680.8 575.1 680.7 586.3 C680.5 597.6 679.5 614.4 679.3 620.0 M689.0 418.0 C689.0 423.6 689.0 440.4 688.8 451.7 C688.5 462.9 687.6 474.1 687.5 485.3 C687.4 496.6 687.8 507.8 688.1 519.0 C688.4 530.2 689.2 541.4 689.2 552.7 C689.2 563.9 688.6 575.1 688.3 586.3 C688.0 597.6 687.6 614.4 687.4 620.0" stroke="#557acd" stroke-width="2.1" fill="none"/></g>
<path d="M621 547.4 H692" stroke="#8a8a8a" stroke-width="0.8" stroke-dasharray="3 2.5"/>
<path d="M620.5 590 L618.6 615" stroke="#bbb" stroke-width="1" stroke-dasharray="1.5 3"/>
<path d="M691.9 449.9 L691.9 617.1 L615.5 617.1 L621.7 497.5" fill="none" stroke="#111" stroke-width="1.7" stroke-linejoin="miter"/>
<path d="M621.7 497.5 Q637 489 637.7 482.7 Q640.5 470 639.4 460.5 Q637 449 634.8 437.7 L673.1 421.5 Q675 443 691.9 449.9" fill="none" stroke="#35b35a" stroke-width="2.4" stroke-linejoin="round"/>
<circle cx="634.8" cy="437.7" r="1.5" fill="#1a1a1a"/>
<circle cx="673.1" cy="421.5" r="1.5" fill="#1a1a1a"/>
<circle cx="639.4" cy="460.5" r="1.5" fill="#1a1a1a"/>
<circle cx="637.7" cy="482.7" r="1.5" fill="#1a1a1a"/>
<circle cx="691.9" cy="449.9" r="1.5" fill="#1a1a1a"/>
<circle cx="621.7" cy="497.5" r="1.5" fill="#1a1a1a"/>
<path d="M766.1 452.1 Q783 446 785.6 425.1 L823.7 441 Q821 452 819.3 464.3 Q818.3 476 821 486.4 Q823 494 836.5 500.8 L842.5 621.5 L766.1 621.5 Z" fill="none" stroke="#7fa9d8" stroke-width="10" stroke-linejoin="round"/>
<path d="M766.1 452.1 Q783 446 785.6 425.1 L823.7 441 Q821 452 819.3 464.3 Q818.3 476 821 486.4 Q823 494 836.5 500.8 L842.5 621.5 L766.1 621.5 Z" fill="#f6f7fe"/>
<g clip-path="url(#k7)"><path d="M770.9 420.0 C770.7 425.7 770.4 442.7 770.1 454.0 C769.8 465.3 769.1 476.7 769.1 488.0 C769.1 499.3 769.8 510.7 770.1 522.0 C770.4 533.3 770.9 544.7 770.9 556.0 C770.8 567.3 769.9 578.7 769.7 590.0 C769.4 601.3 769.3 618.3 769.2 624.0 M779.1 420.0 C778.9 425.7 777.9 442.7 777.7 454.0 C777.5 465.3 777.6 476.7 777.8 488.0 C778.0 499.3 779.0 510.7 779.1 522.0 C779.3 533.3 779.0 544.7 778.7 556.0 C778.4 567.3 777.6 578.7 777.5 590.0 C777.4 601.3 778.1 618.3 778.2 624.0 M786.7 420.0 C786.6 425.7 785.8 442.7 785.8 454.0 C785.8 465.3 786.6 476.7 786.9 488.0 C787.2 499.3 787.6 510.7 787.5 522.0 C787.4 533.3 786.6 544.7 786.3 556.0 C786.0 567.3 785.8 578.7 786.0 590.0 C786.1 601.3 787.1 618.3 787.3 624.0 M794.4 420.0 C794.4 425.7 794.3 442.7 794.6 454.0 C794.8 465.3 795.7 476.7 795.9 488.0 C796.0 499.3 795.6 510.7 795.3 522.0 C795.1 533.3 794.2 544.7 794.2 556.0 C794.1 567.3 794.7 578.7 795.0 590.0 C795.3 601.3 795.8 618.3 795.9 624.0 M802.5 420.0 C802.7 425.7 803.4 442.7 803.7 454.0 C804.0 465.3 804.3 476.7 804.2 488.0 C804.1 499.3 803.2 510.7 802.9 522.0 C802.7 533.3 802.5 544.7 802.7 556.0 C802.9 567.3 803.9 578.7 804.1 590.0 C804.3 601.3 803.9 618.3 803.9 624.0 M811.3 420.0 C811.5 425.7 812.5 442.7 812.6 454.0 C812.7 465.3 812.2 476.7 812.0 488.0 C811.7 499.3 810.9 510.7 810.9 522.0 C810.8 533.3 811.5 544.7 811.8 556.0 C812.1 567.3 812.7 578.7 812.6 590.0 C812.6 601.3 811.7 618.3 811.5 624.0 M820.5 420.0 C820.5 425.7 821.0 442.7 820.9 454.0 C820.7 465.3 819.8 476.7 819.5 488.0 C819.3 499.3 819.3 510.7 819.5 522.0 C819.7 533.3 820.6 544.7 820.8 556.0 C821.0 567.3 820.8 578.7 820.5 590.0 C820.3 601.3 819.5 618.3 819.3 624.0 M829.3 420.0 C829.2 425.7 828.9 442.7 828.6 454.0 C828.3 465.3 827.5 476.7 827.6 488.0 C827.6 499.3 828.3 510.7 828.6 522.0 C828.9 533.3 829.4 544.7 829.3 556.0 C829.2 567.3 828.4 578.7 828.1 590.0 C827.8 601.3 827.7 618.3 827.7 624.0 M837.5 420.0 C837.3 425.7 836.4 442.7 836.2 454.0 C836.0 465.3 836.0 476.7 836.2 488.0 C836.5 499.3 837.4 510.7 837.6 522.0 C837.7 533.3 837.4 544.7 837.2 556.0 C836.9 567.3 836.0 578.7 835.9 590.0 C835.9 601.3 836.5 618.3 836.7 624.0" stroke="#557acd" stroke-width="2.1" fill="none"/></g>
<path d="M766 550.6 H838" stroke="#aaa" stroke-width="0.8" stroke-dasharray="3 2.5"/>
<path d="M838.5 590 L840.6 619" stroke="#bbb" stroke-width="1" stroke-dasharray="1.5 3"/>
<path d="M836.5 500.8 L842.5 621.5 L766.1 621.5 L766.1 452.1" fill="none" stroke="#111" stroke-width="1.7"/>
<path d="M766.1 452.1 Q783 446 785.6 425.1 L823.7 441 Q821 452 819.3 464.3 Q818.3 476 821 486.4 Q823 494 836.5 500.8" fill="none" stroke="#35b35a" stroke-width="2.4" stroke-linejoin="round"/>
<circle cx="785.6" cy="425.1" r="1.5" fill="#1a1a1a"/>
<circle cx="823.7" cy="441" r="1.5" fill="#1a1a1a"/>
<circle cx="819.3" cy="464.3" r="1.5" fill="#1a1a1a"/>
<circle cx="821" cy="486.4" r="1.5" fill="#1a1a1a"/>
<circle cx="766.1" cy="452.1" r="1.5" fill="#1a1a1a"/>
<circle cx="836.5" cy="500.8" r="1.5" fill="#1a1a1a"/>
<rect x="700" y="449" width="66" height="173" fill="#a9d0cf"/>
<rect x="696" y="447" width="17.5" height="178" fill="#7fa9d8"/>
<rect x="741" y="450" width="4" height="173" fill="#7fa9d8"/>
<rect x="728.5" y="450" width="3.6" height="173" fill="#9cc3dc"/>
<rect x="700.4" y="451" width="9.300000000000068" height="169" fill="#f2ceb0" stroke="#25221f" stroke-width="1.6"/>
<path d="M705.8499999999999 454 V618" stroke="#9a9088" stroke-width="1" stroke-dasharray="1.2 2.2"/>
<path d="M702.6 453 V618" stroke="#8d93b8" stroke-width="1.6"/>
<circle cx="705.3" cy="468.7" r="1.9" fill="#3fd33a"/>
<circle cx="705.3" cy="497.5" r="1.9" fill="#3fd33a"/>
<circle cx="705.3" cy="525.2" r="1.9" fill="#3fd33a"/>
<circle cx="705.3" cy="551.8" r="1.9" fill="#3fd33a"/>
<circle cx="705.3" cy="580.1" r="1.9" fill="#3fd33a"/>
<rect x="716.3" y="452.5" width="9.300000000000068" height="168.0" fill="#f2ceb0" stroke="#25221f" stroke-width="1.6"/>
<path d="M720.1500000000001 455.5 V618.5" stroke="#9a9088" stroke-width="1" stroke-dasharray="1.2 2.2"/>
<circle cx="720.1500000000001" cy="470" r="1.2" fill="#a8a0a0"/>
<circle cx="720.1500000000001" cy="499" r="1.2" fill="#a8a0a0"/>
<circle cx="720.1500000000001" cy="527" r="1.2" fill="#a8a0a0"/>
<circle cx="720.1500000000001" cy="553" r="1.2" fill="#a8a0a0"/>
<circle cx="720.1500000000001" cy="582" r="1.2" fill="#a8a0a0"/>
<rect x="732.2" y="452.5" width="8.899999999999977" height="168.5" fill="#f2ceb0" stroke="#25221f" stroke-width="1.6"/>
<path d="M737.45 455.5 V619" stroke="#9a9088" stroke-width="1" stroke-dasharray="1.2 2.2"/>
<circle cx="737.45" cy="470" r="1.2" fill="#a8a0a0"/>
<circle cx="737.45" cy="499" r="1.2" fill="#a8a0a0"/>
<circle cx="737.45" cy="527" r="1.2" fill="#a8a0a0"/>
<circle cx="737.45" cy="553" r="1.2" fill="#a8a0a0"/>
<circle cx="737.45" cy="582" r="1.2" fill="#a8a0a0"/>
<rect x="748" y="452.5" width="8.899999999999977" height="168.5" fill="#f2ceb0" stroke="#25221f" stroke-width="1.6"/>
<path d="M751.6500000000001 455.5 V619" stroke="#9a9088" stroke-width="1" stroke-dasharray="1.2 2.2"/>
<circle cx="751.6500000000001" cy="470" r="1.2" fill="#a8a0a0"/>
<circle cx="751.6500000000001" cy="499" r="1.2" fill="#a8a0a0"/>
<circle cx="751.6500000000001" cy="527" r="1.2" fill="#a8a0a0"/>
<circle cx="751.6500000000001" cy="553" r="1.2" fill="#a8a0a0"/>
<circle cx="751.6500000000001" cy="582" r="1.2" fill="#a8a0a0"/>
<text transform="translate(708.8 538)" font-size="13" font-weight="900" fill="#0d0d10" stroke="#0d0d10" stroke-width="1.1" textLength="10" lengthAdjust="spacingAndGlyphs">앞</text>
<text transform="translate(709.5999999999999 534.5)" font-size="13" font-weight="900" fill="#0d0d10" stroke="#0d0d10" stroke-width="1.1" textLength="10" lengthAdjust="spacingAndGlyphs">앞</text>
<text transform="translate(708.3 540.5)" font-size="13" font-weight="900" fill="#0d0d10" stroke="#0d0d10" stroke-width="1.1" textLength="10" lengthAdjust="spacingAndGlyphs">앞</text>
<text transform="translate(723.2 538)" font-size="13" font-weight="900" fill="#0d0d10" stroke="#0d0d10" stroke-width="1.1" textLength="10" lengthAdjust="spacingAndGlyphs">앞</text>
<text transform="translate(724.0 534.5)" font-size="13" font-weight="900" fill="#0d0d10" stroke="#0d0d10" stroke-width="1.1" textLength="10" lengthAdjust="spacingAndGlyphs">앞</text>
<text transform="translate(722.7 540.5)" font-size="13" font-weight="900" fill="#0d0d10" stroke="#0d0d10" stroke-width="1.1" textLength="10" lengthAdjust="spacingAndGlyphs">앞</text>
<text transform="translate(737.6 538)" font-size="13" font-weight="900" fill="#14100e" stroke="#14100e" stroke-width="1.1" textLength="10" lengthAdjust="spacingAndGlyphs">앞</text>
<text transform="translate(738.4 534.5)" font-size="13" font-weight="900" fill="#14100e" stroke="#14100e" stroke-width="1.1" textLength="10" lengthAdjust="spacingAndGlyphs">앞</text>
<text transform="translate(737.1 540.5)" font-size="13" font-weight="900" fill="#14100e" stroke="#14100e" stroke-width="1.1" textLength="10" lengthAdjust="spacingAndGlyphs">앞</text>
<text transform="translate(752.8 538)" font-size="13" font-weight="900" fill="#14100e" stroke="#14100e" stroke-width="1.1" textLength="10" lengthAdjust="spacingAndGlyphs">앞</text>
<text transform="translate(753.5999999999999 534.5)" font-size="13" font-weight="900" fill="#14100e" stroke="#14100e" stroke-width="1.1" textLength="10" lengthAdjust="spacingAndGlyphs">앞</text>
<text transform="translate(752.3 540.5)" font-size="13" font-weight="900" fill="#14100e" stroke="#14100e" stroke-width="1.1" textLength="10" lengthAdjust="spacingAndGlyphs">앞</text>
<text x="666.5" y="605" font-size="13" font-weight="700" fill="#1a1a1a" text-anchor="start" textLength="58" lengthAdjust="spacingAndGlyphs">베이직셔츠</text><text x="666.5" y="613.5" font-size="13" font-weight="700" fill="#1a1a1a" text-anchor="start" textLength="58" lengthAdjust="spacingAndGlyphs">20220511</text>
<text x="794.5" y="607.5" font-size="13" font-weight="700" fill="#1a1a1a" text-anchor="start" textLength="58" lengthAdjust="spacingAndGlyphs">베이직셔츠</text><text x="794.5" y="617.5" font-size="13" font-weight="700" fill="#1a1a1a" text-anchor="start" textLength="58" lengthAdjust="spacingAndGlyphs">20220511</text>
<text transform="translate(629.6 586.5) rotate(-90)" font-size="12" font-weight="700" fill="#0c0c0c" stroke="#0c0c0c" stroke-width="0.4" textLength="10.5" lengthAdjust="spacingAndGlyphs">앞</text>
<text transform="translate(837.4 577.6) rotate(-90)" font-size="12" font-weight="700" fill="#0c0c0c" stroke="#0c0c0c" stroke-width="0.4" textLength="9.5" lengthAdjust="spacingAndGlyphs">앞</text>
<text transform="translate(763.5 417) rotate(-90)" font-size="1" font-weight="700" fill="#1a1a1a"></text>
<path d="M899.5 457.7 L1058.4 457.7 Q1060 478 1070.9 486.2 L1078.6 605.6 Q1062 617 1044.9 622 Q1015 627 979.4 626.8 Q940 627 912 621 Q895 616 879.3 605.6 L886 486.2 Q897 478 899.5 457.7 Z" fill="#f6f7fe"/>
<g clip-path="url(#k8)"><path d="M881.8 455.0 C881.9 459.9 882.3 474.4 882.2 484.2 C882.1 493.9 881.2 503.6 881.0 513.3 C880.8 523.1 880.7 532.8 880.9 542.5 C881.1 552.2 882.0 561.9 882.1 571.7 C882.3 581.4 882.1 591.1 881.9 600.8 C881.7 610.6 881.0 625.1 880.8 630.0 M890.4 455.0 C890.3 459.9 890.0 474.4 889.7 484.2 C889.5 493.9 888.8 503.6 888.8 513.3 C888.8 523.1 889.5 532.8 889.7 542.5 C890.0 552.2 890.5 561.9 890.4 571.7 C890.3 581.4 889.6 591.1 889.3 600.8 C889.1 610.6 889.0 625.1 888.9 630.0 M898.4 455.0 C898.2 459.9 897.4 474.4 897.2 484.2 C897.0 493.9 897.0 503.6 897.2 513.3 C897.4 523.1 898.3 532.8 898.4 542.5 C898.6 552.2 898.3 561.9 898.1 571.7 C897.8 581.4 897.1 591.1 897.0 600.8 C896.9 610.6 897.5 625.1 897.6 630.0 M905.9 455.0 C905.8 459.9 905.0 474.4 905.1 484.2 C905.1 493.9 905.8 503.6 906.0 513.3 C906.3 523.1 906.7 532.8 906.6 542.5 C906.5 552.2 905.7 561.9 905.5 571.7 C905.3 581.4 905.1 591.1 905.2 600.8 C905.4 610.6 906.2 625.1 906.4 630.0 M913.4 455.0 C913.4 459.9 913.3 474.4 913.5 484.2 C913.8 493.9 914.6 503.6 914.7 513.3 C914.8 523.1 914.5 532.8 914.2 542.5 C914.0 552.2 913.2 561.9 913.2 571.7 C913.1 581.4 913.7 591.1 913.9 600.8 C914.2 610.6 914.6 625.1 914.8 630.0 M921.3 455.0 C921.5 459.9 922.1 474.4 922.3 484.2 C922.6 493.9 922.9 503.6 922.8 513.3 C922.7 523.1 921.9 532.8 921.7 542.5 C921.4 552.2 921.3 561.9 921.5 571.7 C921.7 581.4 922.5 591.1 922.7 600.8 C922.9 610.6 922.6 625.1 922.6 630.0 M929.8 455.0 C930.0 459.9 930.9 474.4 931.0 484.2 C931.1 493.9 930.7 503.6 930.4 513.3 C930.1 523.1 929.4 532.8 929.4 542.5 C929.4 552.2 930.0 561.9 930.2 571.7 C930.5 581.4 931.1 591.1 931.0 600.8 C931.0 610.6 930.2 625.1 930.0 630.0 M938.7 455.0 C938.7 459.9 939.2 474.4 939.0 484.2 C938.9 493.9 938.0 503.6 937.8 513.3 C937.6 523.1 937.6 532.8 937.8 542.5 C938.0 552.2 938.8 561.9 939.0 571.7 C939.1 581.4 939.0 591.1 938.7 600.8 C938.5 610.6 937.8 625.1 937.6 630.0 M947.2 455.0 C947.1 459.9 946.8 474.4 946.6 484.2 C946.3 493.9 945.7 503.6 945.7 513.3 C945.7 523.1 946.3 532.8 946.6 542.5 C946.8 552.2 947.3 561.9 947.2 571.7 C947.2 581.4 946.4 591.1 946.2 600.8 C945.9 610.6 945.8 625.1 945.8 630.0 M955.2 455.0 C955.0 459.9 954.2 474.4 954.0 484.2 C953.8 493.9 953.9 503.6 954.1 513.3 C954.3 523.1 955.1 532.8 955.3 542.5 C955.4 552.2 955.1 561.9 954.9 571.7 C954.7 581.4 953.9 591.1 953.8 600.8 C953.7 610.6 954.4 625.1 954.5 630.0 M962.7 455.0 C962.6 459.9 961.9 474.4 961.9 484.2 C961.9 493.9 962.6 503.6 962.9 513.3 C963.1 523.1 963.5 532.8 963.4 542.5 C963.4 552.2 962.6 561.9 962.3 571.7 C962.1 581.4 961.9 591.1 962.0 600.8 C962.2 610.6 963.0 625.1 963.2 630.0 M970.2 455.0 C970.2 459.9 970.2 474.4 970.4 484.2 C970.6 493.9 971.4 503.6 971.5 513.3 C971.7 523.1 971.3 532.8 971.1 542.5 C970.8 552.2 970.1 561.9 970.0 571.7 C970.0 581.4 970.5 591.1 970.8 600.8 C971.0 610.6 971.5 625.1 971.6 630.0 M978.2 455.0 C978.3 459.9 979.0 474.4 979.2 484.2 C979.5 493.9 979.8 503.6 979.7 513.3 C979.5 523.1 978.7 532.8 978.5 542.5 C978.3 552.2 978.2 561.9 978.3 571.7 C978.5 581.4 979.4 591.1 979.5 600.8 C979.7 610.6 979.4 625.1 979.4 630.0 M986.7 455.0 C986.9 459.9 987.7 474.4 987.8 484.2 C987.9 493.9 987.5 503.6 987.2 513.3 C987.0 523.1 986.3 532.8 986.3 542.5 C986.2 552.2 986.8 561.9 987.1 571.7 C987.4 581.4 987.9 591.1 987.8 600.8 C987.8 610.6 987.0 625.1 986.8 630.0 M995.5 455.0 C995.6 459.9 996.0 474.4 995.9 484.2 C995.7 493.9 994.9 503.6 994.7 513.3 C994.5 523.1 994.4 532.8 994.6 542.5 C994.8 552.2 995.7 561.9 995.8 571.7 C996.0 581.4 995.8 591.1 995.6 600.8 C995.3 610.6 994.6 625.1 994.4 630.0 M1004.1 455.0 C1004.0 459.9 1003.6 474.4 1003.4 484.2 C1003.1 493.9 1002.5 503.6 1002.5 513.3 C1002.5 523.1 1003.2 532.8 1003.4 542.5 C1003.7 552.2 1004.1 561.9 1004.1 571.7 C1004.0 581.4 1003.2 591.1 1003.0 600.8 C1002.7 610.6 1002.7 625.1 1002.6 630.0 M1012.1 455.0 C1011.9 459.9 1011.0 474.4 1010.9 484.2 C1010.7 493.9 1010.7 503.6 1010.9 513.3 C1011.1 523.1 1012.0 532.8 1012.1 542.5 C1012.2 552.2 1012.0 561.9 1011.7 571.7 C1011.5 581.4 1010.7 591.1 1010.6 600.8 C1010.6 610.6 1011.2 625.1 1011.3 630.0 M1019.5 455.0 C1019.4 459.9 1018.7 474.4 1018.7 484.2 C1018.8 493.9 1019.5 503.6 1019.7 513.3 C1020.0 523.1 1020.4 532.8 1020.3 542.5 C1020.2 552.2 1019.4 561.9 1019.2 571.7 C1018.9 581.4 1018.7 591.1 1018.9 600.8 C1019.1 610.6 1019.9 625.1 1020.1 630.0 M1027.0 455.0 C1027.1 459.9 1027.0 474.4 1027.2 484.2 C1027.5 493.9 1028.3 503.6 1028.4 513.3 C1028.5 523.1 1028.1 532.8 1027.9 542.5 C1027.6 552.2 1026.9 561.9 1026.9 571.7 C1026.8 581.4 1027.4 591.1 1027.6 600.8 C1027.9 610.6 1028.3 625.1 1028.5 630.0 M1035.0 455.0 C1035.2 459.9 1035.8 474.4 1036.1 484.2 C1036.3 493.9 1036.6 503.6 1036.5 513.3 C1036.4 523.1 1035.5 532.8 1035.3 542.5 C1035.1 552.2 1035.0 561.9 1035.2 571.7 C1035.4 581.4 1036.2 591.1 1036.4 600.8 C1036.6 610.6 1036.2 625.1 1036.2 630.0 M1043.6 455.0 C1043.7 459.9 1044.6 474.4 1044.7 484.2 C1044.7 493.9 1044.3 503.6 1044.1 513.3 C1043.8 523.1 1043.1 532.8 1043.1 542.5 C1043.1 552.2 1043.7 561.9 1044.0 571.7 C1044.2 581.4 1044.7 591.1 1044.7 600.8 C1044.6 610.6 1043.8 625.1 1043.6 630.0 M1052.4 455.0 C1052.4 459.9 1052.8 474.4 1052.7 484.2 C1052.5 493.9 1051.7 503.6 1051.5 513.3 C1051.3 523.1 1051.3 532.8 1051.5 542.5 C1051.7 552.2 1052.5 561.9 1052.7 571.7 C1052.8 581.4 1052.6 591.1 1052.4 600.8 C1052.2 610.6 1051.5 625.1 1051.3 630.0 M1060.9 455.0 C1060.8 459.9 1060.5 474.4 1060.2 484.2 C1059.9 493.9 1059.3 503.6 1059.3 513.3 C1059.4 523.1 1060.0 532.8 1060.3 542.5 C1060.5 552.2 1061.0 561.9 1060.9 571.7 C1060.8 581.4 1060.1 591.1 1059.8 600.8 C1059.6 610.6 1059.5 625.1 1059.5 630.0 M1068.9 455.0 C1068.7 459.9 1067.9 474.4 1067.7 484.2 C1067.5 493.9 1067.6 503.6 1067.8 513.3 C1068.0 523.1 1068.8 532.8 1069.0 542.5 C1069.1 552.2 1068.8 561.9 1068.6 571.7 C1068.3 581.4 1067.5 591.1 1067.5 600.8 C1067.4 610.6 1068.1 625.1 1068.2 630.0 M1076.4 455.0 C1076.2 459.9 1075.6 474.4 1075.6 484.2 C1075.6 493.9 1076.3 503.6 1076.6 513.3 C1076.8 523.1 1077.2 532.8 1077.1 542.5 C1077.0 552.2 1076.2 561.9 1076.0 571.7 C1075.7 581.4 1075.6 591.1 1075.7 600.8 C1075.9 610.6 1076.7 625.1 1076.9 630.0" stroke="#557acd" stroke-width="2.1" fill="none"/></g>
<path d="M880 537.3 H1077 M880 601.8 H1078 M936 467 H1020" stroke="#8f8f8f" stroke-width="0.8" stroke-dasharray="3 2.5"/>
<path d="M884 560 L882 606 M1075.5 560 L1077.5 606" stroke="#c5c5c5" stroke-width="1" stroke-dasharray="1.5 3"/>
<circle cx="978.8" cy="507.4" r="7" fill="none" stroke="#c9c9d4" stroke-width="1" stroke-dasharray="1.5 2.5"/><circle cx="978.8" cy="507.4" r="3.4" fill="none" stroke="#c9c9d4" stroke-width="1" stroke-dasharray="1.2 2"/>
<path d="M978.5 457.7 L899.5 457.7" stroke="#5d5d5d" stroke-width="1.2"/>
<path d="M886 486.2 L879.3 605.6 Q895 616 912 621 Q940 627 978.5 626.8" fill="none" stroke="#707070" stroke-width="1.3"/>
<path d="M899.5 457.7 Q897 478 886 486.2" fill="none" stroke="#9fe0ac" stroke-width="3.6"/>
<path d="M899.5 457.7 Q897 478 886 486.2" fill="none" stroke="#5fcf74" stroke-width="1.6"/>
<path d="M978.5 457.7 L1058.4 457.7" stroke="#111" stroke-width="1.8"/>
<path d="M1058.4 457.7 Q1060 478 1070.9 486.2" fill="none" stroke="#3dbb58" stroke-width="2.6"/>
<path d="M1070.9 486.2 L1078.6 605.6 Q1062 617 1044.9 622 Q1015 627 978.5 626.8" fill="none" stroke="#111" stroke-width="1.8"/>
<path d="M978.5 458 V627" stroke="#9cc4ee" stroke-width="1.8"/>
<path d="M978.5 458 V627" stroke="#141414" stroke-width="1.8" stroke-dasharray="4 3.5"/>
<path d="M962.7 458 V496 M995.4 458 V496" stroke="#e8574c" stroke-width="1.8"/>
<path d="M970.8 458 V496 M987.1 458 V496" stroke="#2f8f8f" stroke-width="1.8"/>
<path d="M961.5 496.5 h2.6 M969.6 496.5 h2.6 M985.9 496.5 h2.6 M994.2 496.5 h2.6" stroke="#111" stroke-width="1.6"/>
<text x="965" y="465" font-size="11.5" font-weight="700" fill="#1a1a1a" textLength="34" lengthAdjust="spacingAndGlyphs">맞주름</text>
<text transform="translate(1028 580) rotate(-90)" font-size="11" font-weight="700" fill="#1a1a1a">뒤중심</text>
<text x="927.5" y="612.5" font-size="13" font-weight="700" fill="#1a1a1a" text-anchor="start" textLength="58" lengthAdjust="spacingAndGlyphs">베이직셔츠</text><text x="927.5" y="622.0" font-size="13" font-weight="700" fill="#1a1a1a" text-anchor="start" textLength="58" lengthAdjust="spacingAndGlyphs">20220511</text>
<path d="M1215.8 475.4 H1288.6 M1204 602 H1303" stroke="#6f93b8" stroke-width="1.2"/>
<path d="M1116.3 431.3 C1117.6 430.7 1121.8 428.9 1124.3 427.5 C1126.8 426.1 1128.9 425.5 1131.0 423.2 C1133.1 420.9 1135.0 416.7 1136.8 413.5 C1138.6 410.3 1140.1 406.3 1141.6 403.9 C1143.0 401.5 1143.9 401.0 1145.5 399.1 C1147.1 397.2 1149.1 394.1 1151.2 392.3 C1153.3 390.5 1155.8 389.2 1158.0 388.3 C1160.2 387.4 1162.3 386.9 1164.7 386.8 C1167.1 386.7 1169.8 386.9 1172.4 387.8 C1175.0 388.7 1177.5 390.3 1180.1 392.3 C1182.7 394.3 1185.7 397.4 1187.9 400.0 C1190.2 402.6 1192.0 405.6 1193.6 407.8 C1195.2 410.1 1196.2 411.7 1197.5 413.5 C1198.8 415.3 1200.0 416.8 1201.3 418.4 C1202.6 420.0 1203.6 421.7 1205.2 423.2 C1206.8 424.7 1208.5 426.1 1211.0 427.5 C1213.5 428.9 1218.5 430.8 1220.0 431.5 L1208.7 560.7 Q1168 557 1128.1 560.7 Z" fill="none" stroke="#7fa9d8" stroke-width="9.5" stroke-linejoin="round"/><path d="M1116.3 431.3 C1117.6 430.7 1121.8 428.9 1124.3 427.5 C1126.8 426.1 1128.9 425.5 1131.0 423.2 C1133.1 420.9 1135.0 416.7 1136.8 413.5 C1138.6 410.3 1140.1 406.3 1141.6 403.9 C1143.0 401.5 1143.9 401.0 1145.5 399.1 C1147.1 397.2 1149.1 394.1 1151.2 392.3 C1153.3 390.5 1155.8 389.2 1158.0 388.3 C1160.2 387.4 1162.3 386.9 1164.7 386.8 C1167.1 386.7 1169.8 386.9 1172.4 387.8 C1175.0 388.7 1177.5 390.3 1180.1 392.3 C1182.7 394.3 1185.7 397.4 1187.9 400.0 C1190.2 402.6 1192.0 405.6 1193.6 407.8 C1195.2 410.1 1196.2 411.7 1197.5 413.5 C1198.8 415.3 1200.0 416.8 1201.3 418.4 C1202.6 420.0 1203.6 421.7 1205.2 423.2 C1206.8 424.7 1208.5 426.1 1211.0 427.5 C1213.5 428.9 1218.5 430.8 1220.0 431.5 L1208.7 560.7 Q1168 557 1128.1 560.7 Z" fill="#f6f7fe"/><g clip-path="url(#k9)"><path d="M1116.6 384.0 C1116.7 389.0 1117.4 404.0 1117.4 414.0 C1117.4 424.0 1116.7 434.0 1116.4 444.0 C1116.1 454.0 1115.8 464.0 1115.9 474.0 C1116.0 484.0 1116.8 494.0 1117.0 504.0 C1117.2 514.0 1117.4 524.0 1117.2 534.0 C1117.1 544.0 1116.2 559.0 1116.0 564.0 M1125.3 384.0 C1125.3 389.0 1125.4 404.0 1125.1 414.0 C1124.9 424.0 1124.1 434.0 1124.0 444.0 C1123.9 454.0 1124.2 464.0 1124.5 474.0 C1124.8 484.0 1125.5 494.0 1125.5 504.0 C1125.6 514.0 1125.0 524.0 1124.7 534.0 C1124.5 544.0 1124.1 559.0 1123.9 564.0 M1133.6 384.0 C1133.4 389.0 1132.8 404.0 1132.6 414.0 C1132.3 424.0 1132.0 434.0 1132.1 444.0 C1132.3 454.0 1133.1 464.0 1133.3 474.0 C1133.5 484.0 1133.6 494.0 1133.4 504.0 C1133.2 514.0 1132.4 524.0 1132.2 534.0 C1132.1 544.0 1132.4 559.0 1132.4 564.0 M1141.3 384.0 C1141.1 389.0 1140.3 404.0 1140.2 414.0 C1140.1 424.0 1140.6 434.0 1140.8 444.0 C1141.1 454.0 1141.7 464.0 1141.8 474.0 C1141.8 484.0 1141.2 494.0 1140.9 504.0 C1140.6 514.0 1140.1 524.0 1140.2 534.0 C1140.2 544.0 1141.0 559.0 1141.2 564.0 M1148.7 384.0 C1148.7 389.0 1148.3 404.0 1148.4 414.0 C1148.6 424.0 1149.4 434.0 1149.6 444.0 C1149.8 454.0 1149.8 464.0 1149.6 474.0 C1149.4 484.0 1148.6 494.0 1148.4 504.0 C1148.3 514.0 1148.5 524.0 1148.7 534.0 C1149.0 544.0 1149.6 559.0 1149.8 564.0 M1156.4 384.0 C1156.5 389.0 1156.9 404.0 1157.1 414.0 C1157.4 424.0 1158.0 434.0 1158.0 444.0 C1158.0 454.0 1157.3 464.0 1157.1 474.0 C1156.8 484.0 1156.4 494.0 1156.4 504.0 C1156.5 514.0 1157.3 524.0 1157.5 534.0 C1157.8 544.0 1157.8 559.0 1157.9 564.0 M1164.7 384.0 C1164.9 389.0 1165.7 404.0 1165.9 414.0 C1166.1 424.0 1166.0 434.0 1165.8 444.0 C1165.6 454.0 1164.7 464.0 1164.6 474.0 C1164.5 484.0 1164.8 494.0 1165.0 504.0 C1165.3 514.0 1166.0 524.0 1166.1 534.0 C1166.2 544.0 1165.5 559.0 1165.4 564.0 M1173.5 384.0 C1173.6 389.0 1174.3 404.0 1174.2 414.0 C1174.2 424.0 1173.5 434.0 1173.2 444.0 C1173.0 454.0 1172.6 464.0 1172.7 474.0 C1172.8 484.0 1173.6 494.0 1173.8 504.0 C1174.1 514.0 1174.2 524.0 1174.1 534.0 C1173.9 544.0 1173.1 559.0 1172.9 564.0 M1182.2 384.0 C1182.2 389.0 1182.2 404.0 1182.0 414.0 C1181.7 424.0 1180.9 434.0 1180.8 444.0 C1180.7 454.0 1181.1 464.0 1181.3 474.0 C1181.6 484.0 1182.3 494.0 1182.4 504.0 C1182.4 514.0 1181.8 524.0 1181.6 534.0 C1181.3 544.0 1180.9 559.0 1180.8 564.0 M1190.5 384.0 C1190.3 389.0 1189.6 404.0 1189.4 414.0 C1189.1 424.0 1188.9 434.0 1189.0 444.0 C1189.1 454.0 1189.9 464.0 1190.2 474.0 C1190.4 484.0 1190.4 494.0 1190.3 504.0 C1190.1 514.0 1189.2 524.0 1189.1 534.0 C1188.9 544.0 1189.2 559.0 1189.3 564.0 M1198.1 384.0 C1197.9 389.0 1197.1 404.0 1197.0 414.0 C1197.0 424.0 1197.4 434.0 1197.7 444.0 C1197.9 454.0 1198.6 464.0 1198.6 474.0 C1198.6 484.0 1198.0 494.0 1197.7 504.0 C1197.5 514.0 1197.0 524.0 1197.0 534.0 C1197.1 544.0 1197.9 559.0 1198.1 564.0 M1205.6 384.0 C1205.5 389.0 1205.1 404.0 1205.3 414.0 C1205.4 424.0 1206.3 434.0 1206.5 444.0 C1206.7 454.0 1206.6 464.0 1206.4 474.0 C1206.2 484.0 1205.4 494.0 1205.3 504.0 C1205.1 514.0 1205.3 524.0 1205.6 534.0 C1205.8 544.0 1206.5 559.0 1206.7 564.0 M1213.3 384.0 C1213.4 389.0 1213.7 404.0 1214.0 414.0 C1214.3 424.0 1214.9 434.0 1214.8 444.0 C1214.8 454.0 1214.1 464.0 1213.9 474.0 C1213.6 484.0 1213.2 494.0 1213.3 504.0 C1213.4 514.0 1214.2 524.0 1214.4 534.0 C1214.6 544.0 1214.7 559.0 1214.7 564.0" stroke="#557acd" stroke-width="2.0" fill="none"/></g><path d="M1118 431.7 H1219" stroke="#777" stroke-width="0.8" stroke-dasharray="3 2.5"/><path d="M1116.3 431.3 C1117.6 430.7 1121.8 428.9 1124.3 427.5 C1126.8 426.1 1128.9 425.5 1131.0 423.2 C1133.1 420.9 1135.0 416.7 1136.8 413.5 C1138.6 410.3 1140.1 406.3 1141.6 403.9 C1143.0 401.5 1143.9 401.0 1145.5 399.1 C1147.1 397.2 1149.1 394.1 1151.2 392.3 C1153.3 390.5 1155.8 389.2 1158.0 388.3 C1160.2 387.4 1162.3 386.9 1164.7 386.8 C1167.1 386.7 1169.8 386.9 1172.4 387.8 C1175.0 388.7 1177.5 390.3 1180.1 392.3 C1182.7 394.3 1185.7 397.4 1187.9 400.0 C1190.2 402.6 1192.0 405.6 1193.6 407.8 C1195.2 410.1 1196.2 411.7 1197.5 413.5 C1198.8 415.3 1200.0 416.8 1201.3 418.4 C1202.6 420.0 1203.6 421.7 1205.2 423.2 C1206.8 424.7 1208.5 426.1 1211.0 427.5 C1213.5 428.9 1218.5 430.8 1220.0 431.5 L1208.7 560.7 Q1168 557 1128.1 560.7 Z" fill="none" stroke="#111" stroke-width="1.7" stroke-linejoin="round"/>
<path d="M1286.0 433.5 C1287.3 432.9 1291.5 431.1 1294.0 429.7 C1296.5 428.3 1298.6 427.7 1300.7 425.4 C1302.8 423.1 1304.7 418.9 1306.5 415.7 C1308.3 412.5 1309.8 408.5 1311.3 406.1 C1312.8 403.7 1313.6 403.2 1315.2 401.3 C1316.8 399.4 1318.8 396.3 1320.9 394.5 C1323.0 392.7 1325.5 391.4 1327.7 390.5 C1330.0 389.6 1332.0 389.1 1334.4 389.0 C1336.8 388.9 1339.5 389.1 1342.1 390.0 C1344.7 390.9 1347.2 392.5 1349.8 394.5 C1352.4 396.5 1355.4 399.6 1357.6 402.2 C1359.9 404.8 1361.7 407.8 1363.3 410.0 C1364.9 412.2 1365.9 413.9 1367.2 415.7 C1368.5 417.5 1369.7 419.0 1371.0 420.6 C1372.3 422.2 1373.3 423.9 1374.9 425.4 C1376.5 426.9 1378.2 428.3 1380.7 429.7 C1383.2 431.1 1388.2 433.0 1389.7 433.7 L1378.4 562.9000000000001 Q1337.7 559.2 1297.8 562.9000000000001 Z" fill="none" stroke="#7fa9d8" stroke-width="9.5" stroke-linejoin="round"/><path d="M1286.0 433.5 C1287.3 432.9 1291.5 431.1 1294.0 429.7 C1296.5 428.3 1298.6 427.7 1300.7 425.4 C1302.8 423.1 1304.7 418.9 1306.5 415.7 C1308.3 412.5 1309.8 408.5 1311.3 406.1 C1312.8 403.7 1313.6 403.2 1315.2 401.3 C1316.8 399.4 1318.8 396.3 1320.9 394.5 C1323.0 392.7 1325.5 391.4 1327.7 390.5 C1330.0 389.6 1332.0 389.1 1334.4 389.0 C1336.8 388.9 1339.5 389.1 1342.1 390.0 C1344.7 390.9 1347.2 392.5 1349.8 394.5 C1352.4 396.5 1355.4 399.6 1357.6 402.2 C1359.9 404.8 1361.7 407.8 1363.3 410.0 C1364.9 412.2 1365.9 413.9 1367.2 415.7 C1368.5 417.5 1369.7 419.0 1371.0 420.6 C1372.3 422.2 1373.3 423.9 1374.9 425.4 C1376.5 426.9 1378.2 428.3 1380.7 429.7 C1383.2 431.1 1388.2 433.0 1389.7 433.7 L1378.4 562.9000000000001 Q1337.7 559.2 1297.8 562.9000000000001 Z" fill="#f6f7fe"/><g clip-path="url(#k10)"><path d="M1285.5 386.2 C1285.6 391.2 1285.9 406.2 1286.2 416.2 C1286.4 426.2 1287.1 436.2 1287.1 446.2 C1287.1 456.2 1286.5 466.2 1286.2 476.2 C1286.0 486.2 1285.5 496.2 1285.5 506.2 C1285.6 516.2 1286.3 526.2 1286.6 536.2 C1286.8 546.2 1286.9 561.2 1287.0 566.2 M1293.8 386.2 C1294.0 391.2 1294.7 406.2 1294.9 416.2 C1295.1 426.2 1295.1 436.2 1294.9 446.2 C1294.7 456.2 1293.9 466.2 1293.8 476.2 C1293.6 486.2 1293.8 496.2 1294.1 506.2 C1294.3 516.2 1295.1 526.2 1295.2 536.2 C1295.3 546.2 1294.7 561.2 1294.6 566.2 M1302.5 386.2 C1302.6 391.2 1303.4 406.2 1303.3 416.2 C1303.3 426.2 1302.7 436.2 1302.4 446.2 C1302.1 456.2 1301.7 466.2 1301.8 476.2 C1301.9 486.2 1302.6 496.2 1302.9 506.2 C1303.1 516.2 1303.4 526.2 1303.2 536.2 C1303.1 546.2 1302.2 561.2 1302.0 566.2 M1311.2 386.2 C1311.2 391.2 1311.3 406.2 1311.1 416.2 C1310.9 426.2 1310.1 436.2 1310.0 446.2 C1309.8 456.2 1310.1 466.2 1310.4 476.2 C1310.6 486.2 1311.4 496.2 1311.4 506.2 C1311.5 516.2 1311.0 526.2 1310.7 536.2 C1310.5 546.2 1310.0 561.2 1309.9 566.2 M1319.6 386.2 C1319.4 391.2 1318.8 406.2 1318.6 416.2 C1318.3 426.2 1317.9 436.2 1318.0 446.2 C1318.2 456.2 1319.0 466.2 1319.2 476.2 C1319.4 486.2 1319.6 496.2 1319.4 506.2 C1319.2 516.2 1318.4 526.2 1318.2 536.2 C1318.0 546.2 1318.3 561.2 1318.3 566.2 M1327.3 386.2 C1327.1 391.2 1326.3 406.2 1326.2 416.2 C1326.1 426.2 1326.4 436.2 1326.7 446.2 C1326.9 456.2 1327.7 466.2 1327.7 476.2 C1327.7 486.2 1327.2 496.2 1326.9 506.2 C1326.6 516.2 1326.1 526.2 1326.1 536.2 C1326.1 546.2 1326.9 561.2 1327.1 566.2 M1334.7 386.2 C1334.7 391.2 1334.2 406.2 1334.3 416.2 C1334.4 426.2 1335.3 436.2 1335.5 446.2 C1335.7 456.2 1335.8 466.2 1335.6 476.2 C1335.4 486.2 1334.6 496.2 1334.4 506.2 C1334.2 516.2 1334.4 526.2 1334.6 536.2 C1334.8 546.2 1335.6 561.2 1335.8 566.2 M1342.4 386.2 C1342.5 391.2 1342.7 406.2 1343.0 416.2 C1343.3 426.2 1343.9 436.2 1343.9 446.2 C1343.9 456.2 1343.3 466.2 1343.1 476.2 C1342.8 486.2 1342.3 496.2 1342.4 506.2 C1342.4 516.2 1343.2 526.2 1343.4 536.2 C1343.7 546.2 1343.8 561.2 1343.8 566.2 M1350.6 386.2 C1350.8 391.2 1351.6 406.2 1351.8 416.2 C1352.0 426.2 1352.0 436.2 1351.8 446.2 C1351.6 456.2 1350.7 466.2 1350.6 476.2 C1350.4 486.2 1350.7 496.2 1350.9 506.2 C1351.2 516.2 1351.9 526.2 1352.0 536.2 C1352.1 546.2 1351.5 561.2 1351.4 566.2 M1359.3 386.2 C1359.5 391.2 1360.2 406.2 1360.2 416.2 C1360.2 426.2 1359.5 436.2 1359.2 446.2 C1359.0 456.2 1358.5 466.2 1358.6 476.2 C1358.7 486.2 1359.5 496.2 1359.7 506.2 C1360.0 516.2 1360.2 526.2 1360.0 536.2 C1359.9 546.2 1359.1 561.2 1358.9 566.2 M1368.1 386.2 C1368.1 391.2 1368.2 406.2 1368.0 416.2 C1367.7 426.2 1366.9 436.2 1366.8 446.2 C1366.7 456.2 1367.0 466.2 1367.2 476.2 C1367.5 486.2 1368.2 496.2 1368.3 506.2 C1368.3 516.2 1367.8 526.2 1367.6 536.2 C1367.3 546.2 1366.8 561.2 1366.7 566.2 M1376.4 386.2 C1376.2 391.2 1375.6 406.2 1375.4 416.2 C1375.1 426.2 1374.8 436.2 1374.9 446.2 C1375.0 456.2 1375.8 466.2 1376.0 476.2 C1376.3 486.2 1376.4 496.2 1376.2 506.2 C1376.1 516.2 1375.2 526.2 1375.0 536.2 C1374.9 546.2 1375.1 561.2 1375.1 566.2 M1384.1 386.2 C1383.9 391.2 1383.1 406.2 1383.0 416.2 C1382.9 426.2 1383.3 436.2 1383.5 446.2 C1383.8 456.2 1384.5 466.2 1384.5 476.2 C1384.6 486.2 1384.0 496.2 1383.7 506.2 C1383.5 516.2 1382.9 526.2 1382.9 536.2 C1383.0 546.2 1383.8 561.2 1384.0 566.2" stroke="#557acd" stroke-width="2.0" fill="none"/></g><path d="M1287.7 433.9 H1388.7" stroke="#777" stroke-width="0.8" stroke-dasharray="3 2.5"/><path d="M1286.0 433.5 C1287.3 432.9 1291.5 431.1 1294.0 429.7 C1296.5 428.3 1298.6 427.7 1300.7 425.4 C1302.8 423.1 1304.7 418.9 1306.5 415.7 C1308.3 412.5 1309.8 408.5 1311.3 406.1 C1312.8 403.7 1313.6 403.2 1315.2 401.3 C1316.8 399.4 1318.8 396.3 1320.9 394.5 C1323.0 392.7 1325.5 391.4 1327.7 390.5 C1330.0 389.6 1332.0 389.1 1334.4 389.0 C1336.8 388.9 1339.5 389.1 1342.1 390.0 C1344.7 390.9 1347.2 392.5 1349.8 394.5 C1352.4 396.5 1355.4 399.6 1357.6 402.2 C1359.9 404.8 1361.7 407.8 1363.3 410.0 C1364.9 412.2 1365.9 413.9 1367.2 415.7 C1368.5 417.5 1369.7 419.0 1371.0 420.6 C1372.3 422.2 1373.3 423.9 1374.9 425.4 C1376.5 426.9 1378.2 428.3 1380.7 429.7 C1383.2 431.1 1388.2 433.0 1389.7 433.7 L1378.4 562.9000000000001 Q1337.7 559.2 1297.8 562.9000000000001 Z" fill="none" stroke="#111" stroke-width="1.7" stroke-linejoin="round"/>
<text x="1124" y="438.5" font-size="10.5" font-weight="700" fill="#111" textLength="9" lengthAdjust="spacingAndGlyphs">앞</text>
<text x="1384.5" y="441" font-size="10.5" font-weight="700" fill="#111" textLength="9.5" lengthAdjust="spacingAndGlyphs">앞</text>
<path d="M1170.5 543.5 V560" stroke="#d9534f" stroke-width="1.3"/><path d="M1169.2 543.5 h2.6" stroke="#111" stroke-width="1.5"/><path d="M1174.5 543.5 V560" stroke="#d9534f" stroke-width="1.3"/><path d="M1173.2 543.5 h2.6" stroke="#111" stroke-width="1.5"/><path d="M1178.5 543.5 V560" stroke="#2f8f8f" stroke-width="1.3"/><path d="M1177.2 543.5 h2.6" stroke="#111" stroke-width="1.5"/><path d="M1182.5 543.5 V560" stroke="#d9534f" stroke-width="1.3"/><path d="M1181.2 543.5 h2.6" stroke="#111" stroke-width="1.5"/><path d="M1186.5 543.5 V560" stroke="#d9534f" stroke-width="1.3"/><path d="M1185.2 543.5 h2.6" stroke="#111" stroke-width="1.5"/>
<path d="M1189.8 560.5 V523.5 L1193.7 518.3 L1197.6 523.5 V560.5" fill="#fff" stroke="#c6475a" stroke-width="1.5"/><path d="M1190 528 H1197.4" stroke="#c6475a" stroke-width="1.2"/><path d="M1191.3 529 V560" stroke="#222" stroke-width="1.8"/><path d="M1196 531 V560" stroke="#9ab" stroke-width="1" stroke-dasharray="1.2 2"/>
<path d="M1321 547 V563" stroke="#d9534f" stroke-width="1.3"/><path d="M1319.7 547 h2.6" stroke="#111" stroke-width="1.5"/><path d="M1325 547 V563" stroke="#d9534f" stroke-width="1.3"/><path d="M1323.7 547 h2.6" stroke="#111" stroke-width="1.5"/><path d="M1329 547 V563" stroke="#2f8f8f" stroke-width="1.3"/><path d="M1327.7 547 h2.6" stroke="#111" stroke-width="1.5"/><path d="M1333 547 V563" stroke="#d9534f" stroke-width="1.3"/><path d="M1331.7 547 h2.6" stroke="#111" stroke-width="1.5"/><path d="M1337 547 V563" stroke="#d9534f" stroke-width="1.3"/><path d="M1335.7 547 h2.6" stroke="#111" stroke-width="1.5"/>
<path d="M1309.4 563 V526 L1313.3 520.9 L1317.2 526 V563" fill="#fff" stroke="#c6475a" stroke-width="1.5"/><path d="M1309.6 530.5 H1317" stroke="#c6475a" stroke-width="1.2"/><path d="M1315.6 531 V563" stroke="#222" stroke-width="1.8"/><path d="M1311.2 533 V563" stroke="#9ab" stroke-width="1" stroke-dasharray="1.2 2"/>
<path d="M1227 562.5 V522.8 L1230.9 518.3 L1234.8 522.8 V562.5 Z" fill="none" stroke="#7fa9d8" stroke-width="8" stroke-linejoin="round"/>
<path d="M1227 562.5 V522.8 L1230.9 518.3 L1234.8 522.8 V562.5 Z" fill="#f2ceb0" stroke="#25221f" stroke-width="1.6" stroke-linejoin="miter"/>
<path d="M1230.9 524.3 V560.5" stroke="#9a9088" stroke-width="1" stroke-dasharray="1.2 2.2"/>
<path d="M1270.9 563.8 V524.9 L1275.2 520.4 L1279.5 524.9 V563.8 Z" fill="none" stroke="#7fa9d8" stroke-width="8" stroke-linejoin="round"/>
<path d="M1270.9 563.8 V524.9 L1275.2 520.4 L1279.5 524.9 V563.8 Z" fill="#f2ceb0" stroke="#25221f" stroke-width="1.6" stroke-linejoin="miter"/>
<path d="M1275.2 526.4 V561.8" stroke="#9a9088" stroke-width="1" stroke-dasharray="1.2 2.2"/>
<circle cx="1231" cy="543.5" r="1.8" fill="#3fd33a"/><circle cx="1275" cy="546" r="1.8" fill="#3fd33a"/><path d="M1271.5 530 h7.5" stroke="#c6475a" stroke-width="1.2"/>
<rect x="1128.3" y="580.4" width="79.19999999999986" height="40.100000000000065" rx="1.5" fill="#7fa9d8"/><rect x="1131.7" y="583.8" width="72.39999999999986" height="33.30000000000007" fill="#f2ceb0"/><g clip-path="url(#k11)"><path d="M1131.7 585.3 C1133.7 585.4 1139.7 586.2 1143.8 586.2 C1147.8 586.1 1151.8 585.0 1155.8 584.7 C1159.9 584.5 1163.9 584.6 1167.9 584.8 C1171.9 585.0 1175.9 586.1 1180.0 586.2 C1184.0 586.2 1188.0 585.5 1192.0 585.2 C1196.1 584.9 1202.1 584.6 1204.1 584.5 M1131.7 594.3 C1133.7 594.1 1139.7 593.6 1143.8 593.3 C1147.8 593.1 1151.8 592.5 1155.8 592.6 C1159.9 592.7 1163.9 593.8 1167.9 594.0 C1171.9 594.2 1175.9 594.1 1180.0 593.9 C1184.0 593.6 1188.0 592.6 1192.0 592.5 C1196.1 592.5 1202.1 593.4 1204.1 593.5 M1131.7 602.0 C1133.7 601.7 1139.7 600.7 1143.8 600.6 C1147.8 600.6 1151.8 601.3 1155.8 601.6 C1159.9 601.9 1163.9 602.4 1167.9 602.3 C1171.9 602.2 1175.9 601.1 1180.0 600.9 C1184.0 600.7 1188.0 600.8 1192.0 601.1 C1196.1 601.3 1202.1 602.2 1204.1 602.4 M1131.7 609.0 C1133.7 609.0 1139.7 608.9 1143.8 609.2 C1147.8 609.4 1151.8 610.4 1155.8 610.5 C1159.9 610.5 1163.9 609.7 1167.9 609.4 C1171.9 609.2 1175.9 608.7 1180.0 608.8 C1184.0 608.9 1188.0 610.1 1192.0 610.3 C1196.1 610.5 1202.1 610.0 1204.1 610.0" stroke="#7a78a8" stroke-width="1.7" fill="none"/></g><path d="M1131.7 600.7 H1204.1" stroke="#e0533a" stroke-width="1.8"/><rect x="1131.7" y="583.8" width="72.39999999999986" height="33.30000000000007" fill="none" stroke="#25221f" stroke-width="1.7"/><circle cx="1200" cy="592.4" r="1.9" fill="#3fd33a"/>
<rect x="1299.0" y="583.8000000000001" width="78.3" height="39.3" rx="1.5" fill="#7fa9d8"/><rect x="1302.4" y="587.2" width="71.5" height="32.5" fill="#f2ceb0"/><g clip-path="url(#k12)"><path d="M1302.4 588.7 C1304.4 588.8 1310.3 589.6 1314.3 589.6 C1318.3 589.5 1322.3 588.4 1326.2 588.1 C1330.2 587.9 1334.2 588.0 1338.2 588.2 C1342.1 588.4 1346.1 589.5 1350.1 589.6 C1354.0 589.6 1358.0 588.9 1362.0 588.6 C1366.0 588.3 1371.9 588.0 1373.9 587.9 M1302.4 597.7 C1304.4 597.5 1310.3 597.0 1314.3 596.7 C1318.3 596.5 1322.3 595.9 1326.2 596.0 C1330.2 596.1 1334.2 597.2 1338.2 597.4 C1342.1 597.6 1346.1 597.5 1350.1 597.3 C1354.0 597.0 1358.0 596.0 1362.0 595.9 C1366.0 595.9 1371.9 596.8 1373.9 596.9 M1302.4 605.4 C1304.4 605.1 1310.3 604.1 1314.3 604.0 C1318.3 604.0 1322.3 604.7 1326.2 605.0 C1330.2 605.3 1334.2 605.8 1338.2 605.7 C1342.1 605.6 1346.1 604.5 1350.1 604.3 C1354.0 604.1 1358.0 604.2 1362.0 604.5 C1366.0 604.7 1371.9 605.6 1373.9 605.8 M1302.4 612.4 C1304.4 612.4 1310.3 612.3 1314.3 612.6 C1318.3 612.8 1322.3 613.8 1326.2 613.9 C1330.2 613.9 1334.2 613.1 1338.2 612.8 C1342.1 612.6 1346.1 612.1 1350.1 612.2 C1354.0 612.3 1358.0 613.5 1362.0 613.7 C1366.0 613.9 1371.9 613.4 1373.9 613.4" stroke="#7a78a8" stroke-width="1.7" fill="none"/></g><path d="M1302.4 603.6 H1373.9" stroke="#e0533a" stroke-width="1.8"/><rect x="1302.4" y="587.2" width="71.5" height="32.5" fill="none" stroke="#25221f" stroke-width="1.7"/><circle cx="1308" cy="595" r="1.9" fill="#3fd33a"/>
<circle cx="1136" cy="592" r="1.8" fill="#8f8f8f"/><circle cx="1370" cy="594.5" r="1.8" fill="#9a9a9a"/>
<text x="1169" y="510" font-size="13" font-weight="700" fill="#1a1a1a" text-anchor="start" textLength="58" lengthAdjust="spacingAndGlyphs">베이직셔츠</text><text x="1169" y="519.5" font-size="13" font-weight="700" fill="#1a1a1a" text-anchor="start" textLength="58" lengthAdjust="spacingAndGlyphs">20220511</text>
<text x="1338.8" y="512.5" font-size="13" font-weight="700" fill="#1a1a1a" text-anchor="start" textLength="58" lengthAdjust="spacingAndGlyphs">베이직셔츠</text><text x="1338.8" y="522.0" font-size="13" font-weight="700" fill="#1a1a1a" text-anchor="start" textLength="58" lengthAdjust="spacingAndGlyphs">20220511</text>
<text x="1229.3" y="536" font-size="13" font-weight="700" fill="#1a1a1a" text-anchor="start" textLength="58" lengthAdjust="spacingAndGlyphs">베이직셔츠</text><text x="1229.3" y="545.5" font-size="13" font-weight="700" fill="#1a1a1a" text-anchor="start" textLength="58" lengthAdjust="spacingAndGlyphs">20220511</text>
<text x="1283" y="536.5" font-size="13" font-weight="700" fill="#1a1a1a" textLength="12">베</text><text x="1283" y="546" font-size="13" font-weight="700" fill="#1a1a1a" textLength="12">20</text>
<text x="1169" y="585.5" font-size="13" font-weight="700" fill="#1a1a1a" text-anchor="start" textLength="58" lengthAdjust="spacingAndGlyphs">베이직셔츠</text><text x="1169" y="594.1" font-size="13" font-weight="700" fill="#1a1a1a" text-anchor="start" textLength="58" lengthAdjust="spacingAndGlyphs">20220511</text>
<text x="1338.8" y="587.5" font-size="13" font-weight="700" fill="#1a1a1a" text-anchor="start" textLength="58" lengthAdjust="spacingAndGlyphs">베이직셔츠</text><text x="1338.8" y="596.1" font-size="13" font-weight="700" fill="#1a1a1a" text-anchor="start" textLength="58" lengthAdjust="spacingAndGlyphs">20220511</text>
</svg>
<div class="pill" style="left:10px;top:8px;width:32px;height:155px;background:#555555;border-radius:8px"></div>
<svg class="abs" style="left:10px;top:8px" width="32" height="155" viewBox="0 0 32 155">
 <defs><linearGradient id="qw" x1="0" y1="0" x2="0" y2="1"><stop offset="0" stop-color="#ffffff"/><stop offset="1" stop-color="#c4c4c4"/></linearGradient>
 <linearGradient id="qb" x1="0" y1="0" x2="1" y2="1"><stop offset="0" stop-color="#0a63d8"/><stop offset="0.6" stop-color="#2aa4ff"/><stop offset="1" stop-color="#0b5fd0"/></linearGradient>
 <radialGradient id="qi" cx="0.4" cy="0.3" r="0.8"><stop offset="0" stop-color="#ffffff"/><stop offset="1" stop-color="#c9d3ea"/></radialGradient></defs>
 <!-- needle -->
 <path d="M6.6 25.2 L18.2 14.6 Q20.2 13.6 20.8 15.6 L8 27 Z" fill="#e8ecf0"/><path d="M19.4 15.4 Q22 15.8 22.6 19.2 Q23 22 25.2 22.6" stroke="#6aa0e0" stroke-width="1.2" fill="none"/>
 <!-- white tshirt -->
 <g transform="translate(5 40) scale(0.92)"><path d="M6.2 2.2 L9.8 0.6 Q12 3.6 14.2 0.6 L17.8 2.2 L23 7.4 L19.6 11 L18 9.6 L18 19 L6 19 L6 9.6 L4.4 11 L1 7.4 Z" fill="url(#qw)"/></g>
 <!-- info -->
 <circle cx="16" cy="79" r="8.2" fill="url(#qi)" stroke="#e8e8e8" stroke-width="0.8"/><text x="16" y="84.6" text-anchor="middle" font-family="'Liberation Serif',serif" font-style="italic" font-weight="700" font-size="15" fill="#2166e0">i</text>
 <!-- blue fabric -->
 <path d="M10.5 104 L24 101.5 L22 115.5 Q17 118.5 9.5 116.5 Z" fill="url(#qb)"/><path d="M8.5 106 L12.5 105.2 L11 117 L7.6 116 Z" fill="#e8eef8"/><path d="M7.6 116 Q14 119.5 21 116.4 L20.4 118 Q14 121 8 118 Z" fill="#d9e6fa"/>
 <!-- tshirt lock -->
 <g transform="translate(5 130) scale(0.92)"><path d="M6.2 2.2 L9.8 0.6 Q12 3.6 14.2 0.6 L17.8 2.2 L23 7.4 L19.6 11 L18 9.6 L18 19 L6 19 L6 9.6 L4.4 11 L1 7.4 Z" fill="url(#qw)"/></g>
 <rect x="6.6" y="142" width="5.6" height="5" rx="0.8" fill="#2a7ae8"/><path d="M7.8 142 V140.4 a1.6 1.6 0 0 1 3.2 0 V142" stroke="#2a7ae8" stroke-width="1" fill="none"/>
</svg>

</div>
<div class="abs" style="left:1503px;top:945px;width:70px;height:52px;overflow:hidden;color:#8c8c92;white-space:nowrap">
  <div style="font-size:20px;line-height:25px;letter-spacing:0.1px">Windows 정품 인증</div>
  <div style="font-size:16.5px;line-height:20px">[설정]으로 이동하여 Windows를 정품 인증합니다.</div>
</div>

</body>
</html>
